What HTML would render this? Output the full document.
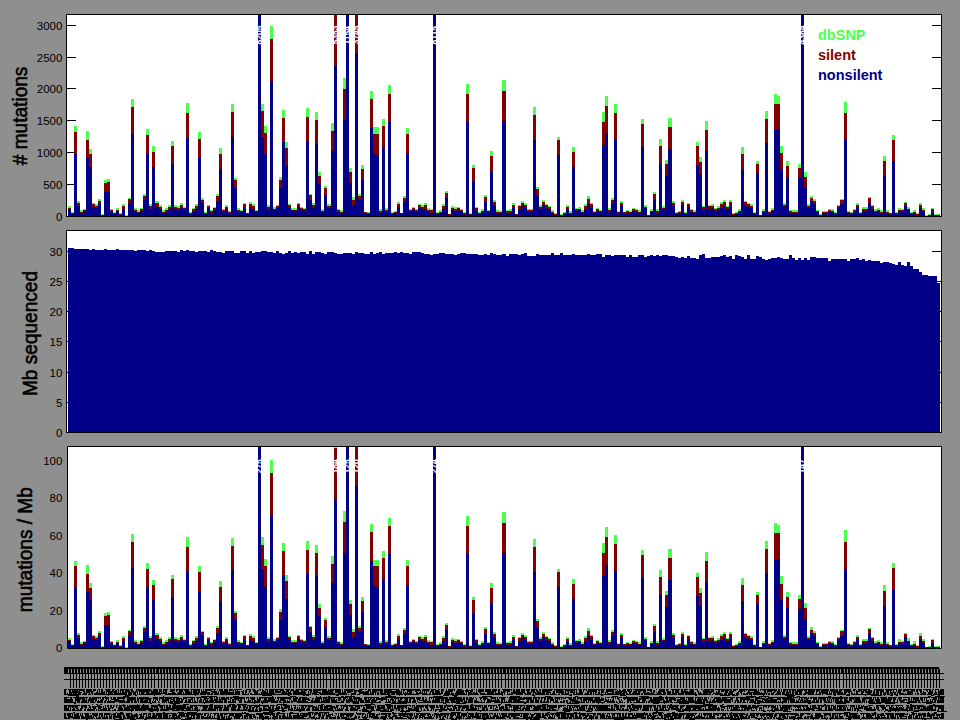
<!DOCTYPE html><html><head><meta charset="utf-8"><style>html,body{margin:0;padding:0;background:#8f8f8f;}svg{display:block;}text{font-family:"Liberation Sans",sans-serif;}</style></head><body>
<svg width="960" height="720" viewBox="0 0 960 720">
<rect x="0" y="0" width="960" height="720" fill="#8f8f8f"/>
<rect x="66" y="14" width="876" height="203" fill="#fff"/>
<rect x="66" y="230" width="876" height="203" fill="#fff"/>
<rect x="67" y="446" width="875" height="203" fill="#fff"/>
<g shape-rendering="crispEdges">
<rect x="66" y="216" width="10" height="1" fill="#000"/>
<rect x="932" y="216" width="10" height="1" fill="#000"/>
<rect x="66" y="184" width="10" height="1" fill="#000"/>
<rect x="932" y="184" width="10" height="1" fill="#000"/>
<rect x="66" y="152" width="10" height="1" fill="#000"/>
<rect x="932" y="152" width="10" height="1" fill="#000"/>
<rect x="66" y="120" width="10" height="1" fill="#000"/>
<rect x="932" y="120" width="10" height="1" fill="#000"/>
<rect x="66" y="88" width="10" height="1" fill="#000"/>
<rect x="932" y="88" width="10" height="1" fill="#000"/>
<rect x="66" y="57" width="10" height="1" fill="#000"/>
<rect x="932" y="57" width="10" height="1" fill="#000"/>
<rect x="66" y="25" width="10" height="1" fill="#000"/>
<rect x="932" y="25" width="10" height="1" fill="#000"/>
<rect x="66" y="432" width="10" height="1" fill="#000"/>
<rect x="932" y="432" width="10" height="1" fill="#000"/>
<rect x="66" y="402" width="10" height="1" fill="#000"/>
<rect x="932" y="402" width="10" height="1" fill="#000"/>
<rect x="66" y="372" width="10" height="1" fill="#000"/>
<rect x="932" y="372" width="10" height="1" fill="#000"/>
<rect x="66" y="341" width="10" height="1" fill="#000"/>
<rect x="932" y="341" width="10" height="1" fill="#000"/>
<rect x="66" y="311" width="10" height="1" fill="#000"/>
<rect x="932" y="311" width="10" height="1" fill="#000"/>
<rect x="66" y="281" width="10" height="1" fill="#000"/>
<rect x="932" y="281" width="10" height="1" fill="#000"/>
<rect x="66" y="251" width="10" height="1" fill="#000"/>
<rect x="932" y="251" width="10" height="1" fill="#000"/>
<rect x="68" y="209" width="3" height="7" fill="#000088"/>
<rect x="68" y="208" width="3" height="1" fill="#830000"/>
<rect x="68" y="206" width="3" height="2" fill="#4cff4c"/>
<rect x="68" y="248" width="3" height="184" fill="#000088"/>
<rect x="71" y="214" width="3" height="2" fill="#000088"/>
<rect x="71" y="213" width="3" height="1" fill="#830000"/>
<rect x="71" y="212" width="3" height="1" fill="#4cff4c"/>
<rect x="71" y="248" width="3" height="184" fill="#000088"/>
<rect x="74" y="153" width="3" height="63" fill="#000088"/>
<rect x="74" y="132" width="3" height="21" fill="#830000"/>
<rect x="74" y="126" width="3" height="6" fill="#4cff4c"/>
<rect x="74" y="249" width="3" height="183" fill="#000088"/>
<rect x="77" y="206" width="3" height="10" fill="#000088"/>
<rect x="77" y="203" width="3" height="3" fill="#830000"/>
<rect x="77" y="201" width="3" height="2" fill="#4cff4c"/>
<rect x="77" y="249" width="3" height="183" fill="#000088"/>
<rect x="80" y="213" width="3" height="3" fill="#000088"/>
<rect x="80" y="212" width="3" height="1" fill="#830000"/>
<rect x="80" y="210" width="3" height="2" fill="#4cff4c"/>
<rect x="80" y="249" width="3" height="183" fill="#000088"/>
<rect x="83" y="211" width="3" height="5" fill="#000088"/>
<rect x="83" y="210" width="3" height="1" fill="#830000"/>
<rect x="83" y="209" width="3" height="1" fill="#4cff4c"/>
<rect x="83" y="249" width="3" height="183" fill="#000088"/>
<rect x="86" y="158" width="3" height="58" fill="#000088"/>
<rect x="86" y="140" width="3" height="18" fill="#830000"/>
<rect x="86" y="131" width="3" height="9" fill="#4cff4c"/>
<rect x="86" y="249" width="3" height="183" fill="#000088"/>
<rect x="89" y="167" width="3" height="49" fill="#000088"/>
<rect x="89" y="154" width="3" height="13" fill="#830000"/>
<rect x="89" y="149" width="3" height="5" fill="#4cff4c"/>
<rect x="89" y="250" width="3" height="182" fill="#000088"/>
<rect x="92" y="207" width="3" height="9" fill="#000088"/>
<rect x="92" y="204" width="3" height="3" fill="#830000"/>
<rect x="92" y="203" width="3" height="1" fill="#4cff4c"/>
<rect x="92" y="249" width="3" height="183" fill="#000088"/>
<rect x="95" y="208" width="3" height="8" fill="#000088"/>
<rect x="95" y="206" width="3" height="2" fill="#830000"/>
<rect x="95" y="204" width="3" height="2" fill="#4cff4c"/>
<rect x="95" y="250" width="3" height="182" fill="#000088"/>
<rect x="98" y="204" width="3" height="12" fill="#000088"/>
<rect x="98" y="201" width="3" height="3" fill="#830000"/>
<rect x="98" y="199" width="3" height="2" fill="#4cff4c"/>
<rect x="98" y="250" width="3" height="182" fill="#000088"/>
<rect x="101" y="215" width="3" height="1" fill="#830000"/>
<rect x="101" y="214" width="3" height="1" fill="#4cff4c"/>
<rect x="101" y="250" width="3" height="182" fill="#000088"/>
<rect x="104" y="192" width="3" height="24" fill="#000088"/>
<rect x="104" y="183" width="3" height="9" fill="#830000"/>
<rect x="104" y="180" width="3" height="3" fill="#4cff4c"/>
<rect x="104" y="249" width="3" height="183" fill="#000088"/>
<rect x="107" y="192" width="3" height="24" fill="#000088"/>
<rect x="107" y="182" width="3" height="10" fill="#830000"/>
<rect x="107" y="179" width="3" height="3" fill="#4cff4c"/>
<rect x="107" y="250" width="3" height="182" fill="#000088"/>
<rect x="110" y="212" width="3" height="4" fill="#000088"/>
<rect x="110" y="210" width="3" height="2" fill="#830000"/>
<rect x="110" y="209" width="3" height="1" fill="#4cff4c"/>
<rect x="110" y="250" width="3" height="182" fill="#000088"/>
<rect x="113" y="214" width="3" height="2" fill="#000088"/>
<rect x="113" y="213" width="3" height="1" fill="#830000"/>
<rect x="113" y="212" width="3" height="1" fill="#4cff4c"/>
<rect x="113" y="250" width="3" height="182" fill="#000088"/>
<rect x="116" y="211" width="3" height="5" fill="#000088"/>
<rect x="116" y="210" width="3" height="1" fill="#830000"/>
<rect x="116" y="208" width="3" height="2" fill="#4cff4c"/>
<rect x="116" y="249" width="3" height="183" fill="#000088"/>
<rect x="119" y="215" width="3" height="1" fill="#000088"/>
<rect x="119" y="214" width="3" height="1" fill="#830000"/>
<rect x="119" y="213" width="3" height="1" fill="#4cff4c"/>
<rect x="119" y="250" width="3" height="182" fill="#000088"/>
<rect x="122" y="209" width="3" height="7" fill="#000088"/>
<rect x="122" y="206" width="3" height="3" fill="#830000"/>
<rect x="122" y="204" width="3" height="2" fill="#4cff4c"/>
<rect x="122" y="250" width="3" height="182" fill="#000088"/>
<rect x="125" y="215" width="3" height="1" fill="#4cff4c"/>
<rect x="125" y="250" width="3" height="182" fill="#000088"/>
<rect x="128" y="203" width="3" height="13" fill="#000088"/>
<rect x="128" y="199" width="3" height="4" fill="#830000"/>
<rect x="128" y="198" width="3" height="1" fill="#4cff4c"/>
<rect x="128" y="250" width="3" height="182" fill="#000088"/>
<rect x="131" y="134" width="3" height="82" fill="#000088"/>
<rect x="131" y="107" width="3" height="27" fill="#830000"/>
<rect x="131" y="99" width="3" height="8" fill="#4cff4c"/>
<rect x="131" y="250" width="3" height="182" fill="#000088"/>
<rect x="134" y="212" width="3" height="4" fill="#000088"/>
<rect x="134" y="210" width="3" height="2" fill="#830000"/>
<rect x="134" y="208" width="3" height="2" fill="#4cff4c"/>
<rect x="134" y="251" width="3" height="181" fill="#000088"/>
<rect x="137" y="213" width="3" height="3" fill="#000088"/>
<rect x="137" y="212" width="3" height="1" fill="#830000"/>
<rect x="137" y="210" width="3" height="2" fill="#4cff4c"/>
<rect x="137" y="250" width="3" height="182" fill="#000088"/>
<rect x="140" y="211" width="3" height="5" fill="#000088"/>
<rect x="140" y="209" width="3" height="2" fill="#830000"/>
<rect x="140" y="208" width="3" height="1" fill="#4cff4c"/>
<rect x="140" y="250" width="3" height="182" fill="#000088"/>
<rect x="143" y="200" width="3" height="16" fill="#000088"/>
<rect x="143" y="196" width="3" height="4" fill="#830000"/>
<rect x="143" y="194" width="3" height="2" fill="#4cff4c"/>
<rect x="143" y="250" width="3" height="182" fill="#000088"/>
<rect x="146" y="154" width="3" height="62" fill="#000088"/>
<rect x="146" y="135" width="3" height="19" fill="#830000"/>
<rect x="146" y="129" width="3" height="6" fill="#4cff4c"/>
<rect x="146" y="251" width="3" height="181" fill="#000088"/>
<rect x="149" y="209" width="3" height="7" fill="#000088"/>
<rect x="149" y="206" width="3" height="3" fill="#830000"/>
<rect x="149" y="204" width="3" height="2" fill="#4cff4c"/>
<rect x="149" y="250" width="3" height="182" fill="#000088"/>
<rect x="152" y="167" width="3" height="49" fill="#000088"/>
<rect x="152" y="152" width="3" height="15" fill="#830000"/>
<rect x="152" y="146" width="3" height="6" fill="#4cff4c"/>
<rect x="152" y="251" width="3" height="181" fill="#000088"/>
<rect x="155" y="207" width="4" height="9" fill="#000088"/>
<rect x="155" y="203" width="4" height="4" fill="#830000"/>
<rect x="155" y="201" width="4" height="2" fill="#4cff4c"/>
<rect x="155" y="252" width="4" height="180" fill="#000088"/>
<rect x="159" y="209" width="3" height="7" fill="#000088"/>
<rect x="159" y="207" width="3" height="2" fill="#830000"/>
<rect x="159" y="205" width="3" height="2" fill="#4cff4c"/>
<rect x="159" y="252" width="3" height="180" fill="#000088"/>
<rect x="162" y="213" width="3" height="3" fill="#000088"/>
<rect x="162" y="212" width="3" height="1" fill="#830000"/>
<rect x="162" y="210" width="3" height="2" fill="#4cff4c"/>
<rect x="162" y="252" width="3" height="180" fill="#000088"/>
<rect x="165" y="212" width="3" height="4" fill="#000088"/>
<rect x="165" y="210" width="3" height="2" fill="#830000"/>
<rect x="165" y="208" width="3" height="2" fill="#4cff4c"/>
<rect x="165" y="251" width="3" height="181" fill="#000088"/>
<rect x="168" y="210" width="3" height="6" fill="#000088"/>
<rect x="168" y="207" width="3" height="3" fill="#830000"/>
<rect x="168" y="205" width="3" height="2" fill="#4cff4c"/>
<rect x="168" y="251" width="3" height="181" fill="#000088"/>
<rect x="171" y="164" width="3" height="52" fill="#000088"/>
<rect x="171" y="146" width="3" height="18" fill="#830000"/>
<rect x="171" y="141" width="3" height="5" fill="#4cff4c"/>
<rect x="171" y="251" width="3" height="181" fill="#000088"/>
<rect x="174" y="209" width="3" height="7" fill="#000088"/>
<rect x="174" y="207" width="3" height="2" fill="#830000"/>
<rect x="174" y="205" width="3" height="2" fill="#4cff4c"/>
<rect x="174" y="251" width="3" height="181" fill="#000088"/>
<rect x="177" y="210" width="3" height="6" fill="#000088"/>
<rect x="177" y="208" width="3" height="2" fill="#830000"/>
<rect x="177" y="206" width="3" height="2" fill="#4cff4c"/>
<rect x="177" y="252" width="3" height="180" fill="#000088"/>
<rect x="180" y="208" width="3" height="8" fill="#000088"/>
<rect x="180" y="205" width="3" height="3" fill="#830000"/>
<rect x="180" y="203" width="3" height="2" fill="#4cff4c"/>
<rect x="180" y="250" width="3" height="182" fill="#000088"/>
<rect x="183" y="210" width="3" height="6" fill="#000088"/>
<rect x="183" y="208" width="3" height="2" fill="#830000"/>
<rect x="183" y="207" width="3" height="1" fill="#4cff4c"/>
<rect x="183" y="251" width="3" height="181" fill="#000088"/>
<rect x="186" y="138" width="3" height="78" fill="#000088"/>
<rect x="186" y="113" width="3" height="25" fill="#830000"/>
<rect x="186" y="103" width="3" height="10" fill="#4cff4c"/>
<rect x="186" y="250" width="3" height="182" fill="#000088"/>
<rect x="189" y="214" width="3" height="2" fill="#000088"/>
<rect x="189" y="213" width="3" height="1" fill="#830000"/>
<rect x="189" y="212" width="3" height="1" fill="#4cff4c"/>
<rect x="189" y="251" width="3" height="181" fill="#000088"/>
<rect x="192" y="211" width="3" height="5" fill="#000088"/>
<rect x="192" y="209" width="3" height="2" fill="#830000"/>
<rect x="192" y="208" width="3" height="1" fill="#4cff4c"/>
<rect x="192" y="251" width="3" height="181" fill="#000088"/>
<rect x="195" y="209" width="3" height="7" fill="#000088"/>
<rect x="195" y="206" width="3" height="3" fill="#830000"/>
<rect x="195" y="204" width="3" height="2" fill="#4cff4c"/>
<rect x="195" y="252" width="3" height="180" fill="#000088"/>
<rect x="198" y="158" width="3" height="58" fill="#000088"/>
<rect x="198" y="139" width="3" height="19" fill="#830000"/>
<rect x="198" y="132" width="3" height="7" fill="#4cff4c"/>
<rect x="198" y="251" width="3" height="181" fill="#000088"/>
<rect x="201" y="203" width="3" height="13" fill="#000088"/>
<rect x="201" y="200" width="3" height="3" fill="#830000"/>
<rect x="201" y="198" width="3" height="2" fill="#4cff4c"/>
<rect x="201" y="251" width="3" height="181" fill="#000088"/>
<rect x="204" y="214" width="3" height="2" fill="#000088"/>
<rect x="204" y="213" width="3" height="1" fill="#830000"/>
<rect x="204" y="212" width="3" height="1" fill="#4cff4c"/>
<rect x="204" y="251" width="3" height="181" fill="#000088"/>
<rect x="207" y="208" width="3" height="8" fill="#000088"/>
<rect x="207" y="206" width="3" height="2" fill="#830000"/>
<rect x="207" y="205" width="3" height="1" fill="#4cff4c"/>
<rect x="207" y="252" width="3" height="180" fill="#000088"/>
<rect x="210" y="213" width="3" height="3" fill="#000088"/>
<rect x="210" y="211" width="3" height="2" fill="#830000"/>
<rect x="210" y="210" width="3" height="1" fill="#4cff4c"/>
<rect x="210" y="250" width="3" height="182" fill="#000088"/>
<rect x="213" y="210" width="3" height="6" fill="#000088"/>
<rect x="213" y="208" width="3" height="2" fill="#830000"/>
<rect x="213" y="207" width="3" height="1" fill="#4cff4c"/>
<rect x="213" y="251" width="3" height="181" fill="#000088"/>
<rect x="216" y="201" width="3" height="15" fill="#000088"/>
<rect x="216" y="196" width="3" height="5" fill="#830000"/>
<rect x="216" y="194" width="3" height="2" fill="#4cff4c"/>
<rect x="216" y="252" width="3" height="180" fill="#000088"/>
<rect x="219" y="169" width="3" height="47" fill="#000088"/>
<rect x="219" y="154" width="3" height="15" fill="#830000"/>
<rect x="219" y="148" width="3" height="6" fill="#4cff4c"/>
<rect x="219" y="252" width="3" height="180" fill="#000088"/>
<rect x="222" y="212" width="3" height="4" fill="#000088"/>
<rect x="222" y="210" width="3" height="2" fill="#830000"/>
<rect x="222" y="209" width="3" height="1" fill="#4cff4c"/>
<rect x="222" y="253" width="3" height="179" fill="#000088"/>
<rect x="225" y="209" width="3" height="7" fill="#000088"/>
<rect x="225" y="207" width="3" height="2" fill="#830000"/>
<rect x="225" y="205" width="3" height="2" fill="#4cff4c"/>
<rect x="225" y="251" width="3" height="181" fill="#000088"/>
<rect x="228" y="214" width="3" height="2" fill="#000088"/>
<rect x="228" y="212" width="3" height="2" fill="#830000"/>
<rect x="228" y="211" width="3" height="1" fill="#4cff4c"/>
<rect x="228" y="251" width="3" height="181" fill="#000088"/>
<rect x="231" y="137" width="3" height="79" fill="#000088"/>
<rect x="231" y="112" width="3" height="25" fill="#830000"/>
<rect x="231" y="104" width="3" height="8" fill="#4cff4c"/>
<rect x="231" y="251" width="3" height="181" fill="#000088"/>
<rect x="234" y="188" width="3" height="28" fill="#000088"/>
<rect x="234" y="180" width="3" height="8" fill="#830000"/>
<rect x="234" y="178" width="3" height="2" fill="#4cff4c"/>
<rect x="234" y="253" width="3" height="179" fill="#000088"/>
<rect x="237" y="212" width="3" height="4" fill="#000088"/>
<rect x="237" y="210" width="3" height="2" fill="#830000"/>
<rect x="237" y="208" width="3" height="2" fill="#4cff4c"/>
<rect x="237" y="253" width="3" height="179" fill="#000088"/>
<rect x="240" y="212" width="3" height="4" fill="#000088"/>
<rect x="240" y="211" width="3" height="1" fill="#830000"/>
<rect x="240" y="210" width="3" height="1" fill="#4cff4c"/>
<rect x="240" y="251" width="3" height="181" fill="#000088"/>
<rect x="243" y="207" width="3" height="9" fill="#000088"/>
<rect x="243" y="204" width="3" height="3" fill="#830000"/>
<rect x="243" y="203" width="3" height="1" fill="#4cff4c"/>
<rect x="243" y="251" width="3" height="181" fill="#000088"/>
<rect x="246" y="214" width="3" height="2" fill="#000088"/>
<rect x="246" y="213" width="3" height="1" fill="#830000"/>
<rect x="246" y="253" width="3" height="179" fill="#000088"/>
<rect x="249" y="207" width="3" height="9" fill="#000088"/>
<rect x="249" y="204" width="3" height="3" fill="#830000"/>
<rect x="249" y="202" width="3" height="2" fill="#4cff4c"/>
<rect x="249" y="251" width="3" height="181" fill="#000088"/>
<rect x="252" y="209" width="3" height="7" fill="#000088"/>
<rect x="252" y="206" width="3" height="3" fill="#830000"/>
<rect x="252" y="204" width="3" height="2" fill="#4cff4c"/>
<rect x="252" y="253" width="3" height="179" fill="#000088"/>
<rect x="255" y="212" width="3" height="4" fill="#000088"/>
<rect x="255" y="211" width="3" height="1" fill="#830000"/>
<rect x="255" y="210" width="3" height="1" fill="#4cff4c"/>
<rect x="255" y="252" width="3" height="180" fill="#000088"/>
<rect x="258" y="15" width="3" height="201" fill="#000088"/>
<rect x="258" y="252" width="3" height="180" fill="#000088"/>
<rect x="261" y="137" width="3" height="79" fill="#000088"/>
<rect x="261" y="111" width="3" height="26" fill="#830000"/>
<rect x="261" y="104" width="3" height="7" fill="#4cff4c"/>
<rect x="261" y="251" width="3" height="181" fill="#000088"/>
<rect x="264" y="154" width="3" height="62" fill="#000088"/>
<rect x="264" y="133" width="3" height="21" fill="#830000"/>
<rect x="264" y="126" width="3" height="7" fill="#4cff4c"/>
<rect x="264" y="251" width="3" height="181" fill="#000088"/>
<rect x="267" y="210" width="3" height="6" fill="#000088"/>
<rect x="267" y="207" width="3" height="3" fill="#830000"/>
<rect x="267" y="205" width="3" height="2" fill="#4cff4c"/>
<rect x="267" y="252" width="3" height="180" fill="#000088"/>
<rect x="270" y="81" width="3" height="135" fill="#000088"/>
<rect x="270" y="39" width="3" height="42" fill="#830000"/>
<rect x="270" y="26" width="3" height="13" fill="#4cff4c"/>
<rect x="270" y="252" width="3" height="180" fill="#000088"/>
<rect x="273" y="210" width="3" height="6" fill="#000088"/>
<rect x="273" y="209" width="3" height="1" fill="#830000"/>
<rect x="273" y="207" width="3" height="2" fill="#4cff4c"/>
<rect x="273" y="253" width="3" height="179" fill="#000088"/>
<rect x="276" y="208" width="3" height="8" fill="#000088"/>
<rect x="276" y="206" width="3" height="2" fill="#830000"/>
<rect x="276" y="205" width="3" height="1" fill="#4cff4c"/>
<rect x="276" y="251" width="3" height="181" fill="#000088"/>
<rect x="279" y="188" width="3" height="28" fill="#000088"/>
<rect x="279" y="180" width="3" height="8" fill="#830000"/>
<rect x="279" y="177" width="3" height="3" fill="#4cff4c"/>
<rect x="279" y="253" width="3" height="179" fill="#000088"/>
<rect x="282" y="142" width="3" height="74" fill="#000088"/>
<rect x="282" y="118" width="3" height="24" fill="#830000"/>
<rect x="282" y="110" width="3" height="8" fill="#4cff4c"/>
<rect x="282" y="254" width="3" height="178" fill="#000088"/>
<rect x="285" y="166" width="3" height="50" fill="#000088"/>
<rect x="285" y="148" width="3" height="18" fill="#830000"/>
<rect x="285" y="142" width="3" height="6" fill="#4cff4c"/>
<rect x="285" y="253" width="3" height="179" fill="#000088"/>
<rect x="288" y="208" width="3" height="8" fill="#000088"/>
<rect x="288" y="205" width="3" height="3" fill="#830000"/>
<rect x="288" y="204" width="3" height="1" fill="#4cff4c"/>
<rect x="288" y="251" width="3" height="181" fill="#000088"/>
<rect x="291" y="210" width="3" height="6" fill="#000088"/>
<rect x="291" y="208" width="3" height="2" fill="#4cff4c"/>
<rect x="291" y="253" width="3" height="179" fill="#000088"/>
<rect x="294" y="211" width="3" height="5" fill="#000088"/>
<rect x="294" y="210" width="3" height="1" fill="#830000"/>
<rect x="294" y="208" width="3" height="2" fill="#4cff4c"/>
<rect x="294" y="252" width="3" height="180" fill="#000088"/>
<rect x="297" y="207" width="3" height="9" fill="#000088"/>
<rect x="297" y="204" width="3" height="3" fill="#830000"/>
<rect x="297" y="203" width="3" height="1" fill="#4cff4c"/>
<rect x="297" y="253" width="3" height="179" fill="#000088"/>
<rect x="300" y="210" width="3" height="6" fill="#000088"/>
<rect x="300" y="208" width="3" height="2" fill="#830000"/>
<rect x="300" y="207" width="3" height="1" fill="#4cff4c"/>
<rect x="300" y="252" width="3" height="180" fill="#000088"/>
<rect x="303" y="211" width="3" height="5" fill="#000088"/>
<rect x="303" y="209" width="3" height="2" fill="#830000"/>
<rect x="303" y="208" width="3" height="1" fill="#4cff4c"/>
<rect x="303" y="252" width="3" height="180" fill="#000088"/>
<rect x="306" y="141" width="3" height="75" fill="#000088"/>
<rect x="306" y="117" width="3" height="24" fill="#830000"/>
<rect x="306" y="108" width="3" height="9" fill="#4cff4c"/>
<rect x="306" y="254" width="3" height="178" fill="#000088"/>
<rect x="309" y="200" width="3" height="16" fill="#000088"/>
<rect x="309" y="195" width="3" height="5" fill="#830000"/>
<rect x="309" y="194" width="3" height="1" fill="#4cff4c"/>
<rect x="309" y="251" width="3" height="181" fill="#000088"/>
<rect x="312" y="208" width="3" height="8" fill="#000088"/>
<rect x="312" y="205" width="3" height="3" fill="#830000"/>
<rect x="312" y="203" width="3" height="2" fill="#4cff4c"/>
<rect x="312" y="254" width="3" height="178" fill="#000088"/>
<rect x="315" y="144" width="3" height="72" fill="#000088"/>
<rect x="315" y="120" width="3" height="24" fill="#830000"/>
<rect x="315" y="112" width="3" height="8" fill="#4cff4c"/>
<rect x="315" y="252" width="3" height="180" fill="#000088"/>
<rect x="318" y="184" width="3" height="32" fill="#000088"/>
<rect x="318" y="176" width="3" height="8" fill="#830000"/>
<rect x="318" y="172" width="3" height="4" fill="#4cff4c"/>
<rect x="318" y="252" width="3" height="180" fill="#000088"/>
<rect x="321" y="212" width="3" height="4" fill="#000088"/>
<rect x="321" y="211" width="3" height="1" fill="#830000"/>
<rect x="321" y="209" width="3" height="2" fill="#4cff4c"/>
<rect x="321" y="253" width="3" height="179" fill="#000088"/>
<rect x="324" y="195" width="3" height="21" fill="#000088"/>
<rect x="324" y="188" width="3" height="7" fill="#830000"/>
<rect x="324" y="186" width="3" height="2" fill="#4cff4c"/>
<rect x="324" y="254" width="3" height="178" fill="#000088"/>
<rect x="327" y="208" width="4" height="8" fill="#000088"/>
<rect x="327" y="206" width="4" height="2" fill="#830000"/>
<rect x="327" y="204" width="4" height="2" fill="#4cff4c"/>
<rect x="327" y="252" width="4" height="180" fill="#000088"/>
<rect x="331" y="151" width="3" height="65" fill="#000088"/>
<rect x="331" y="131" width="3" height="20" fill="#830000"/>
<rect x="331" y="123" width="3" height="8" fill="#4cff4c"/>
<rect x="331" y="252" width="3" height="180" fill="#000088"/>
<rect x="334" y="66" width="3" height="150" fill="#000088"/>
<rect x="334" y="15" width="3" height="51" fill="#830000"/>
<rect x="334" y="253" width="3" height="179" fill="#000088"/>
<rect x="337" y="212" width="3" height="4" fill="#000088"/>
<rect x="337" y="210" width="3" height="2" fill="#830000"/>
<rect x="337" y="209" width="3" height="1" fill="#4cff4c"/>
<rect x="337" y="254" width="3" height="178" fill="#000088"/>
<rect x="340" y="213" width="3" height="3" fill="#000088"/>
<rect x="340" y="212" width="3" height="1" fill="#830000"/>
<rect x="340" y="210" width="3" height="2" fill="#4cff4c"/>
<rect x="340" y="254" width="3" height="178" fill="#000088"/>
<rect x="343" y="120" width="3" height="96" fill="#000088"/>
<rect x="343" y="89" width="3" height="31" fill="#830000"/>
<rect x="343" y="78" width="3" height="11" fill="#4cff4c"/>
<rect x="343" y="253" width="3" height="179" fill="#000088"/>
<rect x="346" y="15" width="3" height="201" fill="#000088"/>
<rect x="346" y="253" width="3" height="179" fill="#000088"/>
<rect x="349" y="183" width="3" height="33" fill="#000088"/>
<rect x="349" y="172" width="3" height="11" fill="#830000"/>
<rect x="349" y="168" width="3" height="4" fill="#4cff4c"/>
<rect x="349" y="253" width="3" height="179" fill="#000088"/>
<rect x="352" y="205" width="3" height="11" fill="#000088"/>
<rect x="352" y="200" width="3" height="5" fill="#830000"/>
<rect x="352" y="197" width="3" height="3" fill="#4cff4c"/>
<rect x="352" y="254" width="3" height="178" fill="#000088"/>
<rect x="355" y="53" width="3" height="163" fill="#000088"/>
<rect x="355" y="15" width="3" height="38" fill="#830000"/>
<rect x="355" y="252" width="3" height="180" fill="#000088"/>
<rect x="358" y="200" width="3" height="16" fill="#000088"/>
<rect x="358" y="196" width="3" height="4" fill="#830000"/>
<rect x="358" y="194" width="3" height="2" fill="#4cff4c"/>
<rect x="358" y="253" width="3" height="179" fill="#000088"/>
<rect x="361" y="180" width="3" height="36" fill="#000088"/>
<rect x="361" y="169" width="3" height="11" fill="#830000"/>
<rect x="361" y="165" width="3" height="4" fill="#4cff4c"/>
<rect x="361" y="253" width="3" height="179" fill="#000088"/>
<rect x="364" y="214" width="3" height="2" fill="#000088"/>
<rect x="364" y="212" width="3" height="2" fill="#830000"/>
<rect x="364" y="254" width="3" height="178" fill="#000088"/>
<rect x="367" y="214" width="3" height="2" fill="#000088"/>
<rect x="367" y="213" width="3" height="1" fill="#830000"/>
<rect x="367" y="212" width="3" height="1" fill="#4cff4c"/>
<rect x="367" y="254" width="3" height="178" fill="#000088"/>
<rect x="370" y="128" width="3" height="88" fill="#000088"/>
<rect x="370" y="99" width="3" height="29" fill="#830000"/>
<rect x="370" y="91" width="3" height="8" fill="#4cff4c"/>
<rect x="370" y="252" width="3" height="180" fill="#000088"/>
<rect x="373" y="154" width="3" height="62" fill="#000088"/>
<rect x="373" y="134" width="3" height="20" fill="#830000"/>
<rect x="373" y="127" width="3" height="7" fill="#4cff4c"/>
<rect x="373" y="254" width="3" height="178" fill="#000088"/>
<rect x="376" y="155" width="3" height="61" fill="#000088"/>
<rect x="376" y="134" width="3" height="21" fill="#830000"/>
<rect x="376" y="127" width="3" height="7" fill="#4cff4c"/>
<rect x="376" y="253" width="3" height="179" fill="#000088"/>
<rect x="379" y="213" width="3" height="3" fill="#000088"/>
<rect x="379" y="211" width="3" height="2" fill="#830000"/>
<rect x="379" y="209" width="3" height="2" fill="#4cff4c"/>
<rect x="379" y="252" width="3" height="180" fill="#000088"/>
<rect x="382" y="147" width="3" height="69" fill="#000088"/>
<rect x="382" y="126" width="3" height="21" fill="#830000"/>
<rect x="382" y="119" width="3" height="7" fill="#4cff4c"/>
<rect x="382" y="254" width="3" height="178" fill="#000088"/>
<rect x="385" y="212" width="3" height="4" fill="#000088"/>
<rect x="385" y="210" width="3" height="2" fill="#830000"/>
<rect x="385" y="208" width="3" height="2" fill="#4cff4c"/>
<rect x="385" y="253" width="3" height="179" fill="#000088"/>
<rect x="388" y="122" width="3" height="94" fill="#000088"/>
<rect x="388" y="94" width="3" height="28" fill="#830000"/>
<rect x="388" y="85" width="3" height="9" fill="#4cff4c"/>
<rect x="388" y="253" width="3" height="179" fill="#000088"/>
<rect x="391" y="214" width="3" height="2" fill="#000088"/>
<rect x="391" y="213" width="3" height="1" fill="#830000"/>
<rect x="391" y="212" width="3" height="1" fill="#4cff4c"/>
<rect x="391" y="253" width="3" height="179" fill="#000088"/>
<rect x="394" y="213" width="3" height="3" fill="#000088"/>
<rect x="394" y="212" width="3" height="1" fill="#830000"/>
<rect x="394" y="211" width="3" height="1" fill="#4cff4c"/>
<rect x="394" y="252" width="3" height="180" fill="#000088"/>
<rect x="397" y="207" width="3" height="9" fill="#000088"/>
<rect x="397" y="204" width="3" height="3" fill="#830000"/>
<rect x="397" y="202" width="3" height="2" fill="#4cff4c"/>
<rect x="397" y="253" width="3" height="179" fill="#000088"/>
<rect x="400" y="214" width="3" height="2" fill="#000088"/>
<rect x="400" y="213" width="3" height="1" fill="#830000"/>
<rect x="400" y="252" width="3" height="180" fill="#000088"/>
<rect x="403" y="202" width="3" height="14" fill="#000088"/>
<rect x="403" y="198" width="3" height="4" fill="#830000"/>
<rect x="403" y="196" width="3" height="2" fill="#4cff4c"/>
<rect x="403" y="253" width="3" height="179" fill="#000088"/>
<rect x="406" y="154" width="3" height="62" fill="#000088"/>
<rect x="406" y="134" width="3" height="20" fill="#830000"/>
<rect x="406" y="128" width="3" height="6" fill="#4cff4c"/>
<rect x="406" y="253" width="3" height="179" fill="#000088"/>
<rect x="409" y="212" width="3" height="4" fill="#000088"/>
<rect x="409" y="210" width="3" height="2" fill="#830000"/>
<rect x="409" y="209" width="3" height="1" fill="#4cff4c"/>
<rect x="409" y="254" width="3" height="178" fill="#000088"/>
<rect x="412" y="210" width="3" height="6" fill="#000088"/>
<rect x="412" y="208" width="3" height="2" fill="#830000"/>
<rect x="412" y="207" width="3" height="1" fill="#4cff4c"/>
<rect x="412" y="252" width="3" height="180" fill="#000088"/>
<rect x="415" y="212" width="3" height="4" fill="#000088"/>
<rect x="415" y="210" width="3" height="2" fill="#830000"/>
<rect x="415" y="209" width="3" height="1" fill="#4cff4c"/>
<rect x="415" y="252" width="3" height="180" fill="#000088"/>
<rect x="418" y="208" width="3" height="8" fill="#000088"/>
<rect x="418" y="205" width="3" height="3" fill="#830000"/>
<rect x="418" y="204" width="3" height="1" fill="#4cff4c"/>
<rect x="418" y="252" width="3" height="180" fill="#000088"/>
<rect x="421" y="209" width="3" height="7" fill="#000088"/>
<rect x="421" y="207" width="3" height="2" fill="#830000"/>
<rect x="421" y="205" width="3" height="2" fill="#4cff4c"/>
<rect x="421" y="253" width="3" height="179" fill="#000088"/>
<rect x="424" y="209" width="3" height="7" fill="#000088"/>
<rect x="424" y="205" width="3" height="4" fill="#830000"/>
<rect x="424" y="203" width="3" height="2" fill="#4cff4c"/>
<rect x="424" y="254" width="3" height="178" fill="#000088"/>
<rect x="427" y="211" width="3" height="5" fill="#000088"/>
<rect x="427" y="210" width="3" height="1" fill="#830000"/>
<rect x="427" y="208" width="3" height="2" fill="#4cff4c"/>
<rect x="427" y="254" width="3" height="178" fill="#000088"/>
<rect x="430" y="213" width="3" height="3" fill="#000088"/>
<rect x="430" y="210" width="3" height="3" fill="#830000"/>
<rect x="430" y="209" width="3" height="1" fill="#4cff4c"/>
<rect x="430" y="255" width="3" height="177" fill="#000088"/>
<rect x="433" y="15" width="3" height="201" fill="#000088"/>
<rect x="433" y="254" width="3" height="178" fill="#000088"/>
<rect x="436" y="214" width="3" height="2" fill="#000088"/>
<rect x="436" y="213" width="3" height="1" fill="#830000"/>
<rect x="436" y="212" width="3" height="1" fill="#4cff4c"/>
<rect x="436" y="254" width="3" height="178" fill="#000088"/>
<rect x="439" y="213" width="3" height="3" fill="#000088"/>
<rect x="439" y="212" width="3" height="1" fill="#830000"/>
<rect x="439" y="210" width="3" height="2" fill="#4cff4c"/>
<rect x="439" y="253" width="3" height="179" fill="#000088"/>
<rect x="442" y="209" width="3" height="7" fill="#000088"/>
<rect x="442" y="206" width="3" height="3" fill="#830000"/>
<rect x="442" y="204" width="3" height="2" fill="#4cff4c"/>
<rect x="442" y="253" width="3" height="179" fill="#000088"/>
<rect x="445" y="198" width="3" height="18" fill="#000088"/>
<rect x="445" y="193" width="3" height="5" fill="#830000"/>
<rect x="445" y="191" width="3" height="2" fill="#4cff4c"/>
<rect x="445" y="254" width="3" height="178" fill="#000088"/>
<rect x="448" y="215" width="3" height="1" fill="#000088"/>
<rect x="448" y="214" width="3" height="1" fill="#830000"/>
<rect x="448" y="254" width="3" height="178" fill="#000088"/>
<rect x="451" y="210" width="3" height="6" fill="#000088"/>
<rect x="451" y="208" width="3" height="2" fill="#830000"/>
<rect x="451" y="206" width="3" height="2" fill="#4cff4c"/>
<rect x="451" y="254" width="3" height="178" fill="#000088"/>
<rect x="454" y="211" width="3" height="5" fill="#000088"/>
<rect x="454" y="209" width="3" height="2" fill="#830000"/>
<rect x="454" y="207" width="3" height="2" fill="#4cff4c"/>
<rect x="454" y="255" width="3" height="177" fill="#000088"/>
<rect x="457" y="210" width="3" height="6" fill="#000088"/>
<rect x="457" y="208" width="3" height="2" fill="#830000"/>
<rect x="457" y="207" width="3" height="1" fill="#4cff4c"/>
<rect x="457" y="254" width="3" height="178" fill="#000088"/>
<rect x="460" y="211" width="3" height="5" fill="#000088"/>
<rect x="460" y="210" width="3" height="1" fill="#830000"/>
<rect x="460" y="209" width="3" height="1" fill="#4cff4c"/>
<rect x="460" y="253" width="3" height="179" fill="#000088"/>
<rect x="463" y="215" width="3" height="1" fill="#000088"/>
<rect x="463" y="213" width="3" height="2" fill="#830000"/>
<rect x="463" y="212" width="3" height="1" fill="#4cff4c"/>
<rect x="463" y="253" width="3" height="179" fill="#000088"/>
<rect x="466" y="122" width="3" height="94" fill="#000088"/>
<rect x="466" y="94" width="3" height="28" fill="#830000"/>
<rect x="466" y="84" width="3" height="10" fill="#4cff4c"/>
<rect x="466" y="254" width="3" height="178" fill="#000088"/>
<rect x="469" y="215" width="3" height="1" fill="#000088"/>
<rect x="469" y="214" width="3" height="1" fill="#830000"/>
<rect x="469" y="213" width="3" height="1" fill="#4cff4c"/>
<rect x="469" y="254" width="3" height="178" fill="#000088"/>
<rect x="472" y="181" width="3" height="35" fill="#000088"/>
<rect x="472" y="168" width="3" height="13" fill="#830000"/>
<rect x="472" y="165" width="3" height="3" fill="#4cff4c"/>
<rect x="472" y="254" width="3" height="178" fill="#000088"/>
<rect x="475" y="211" width="3" height="5" fill="#000088"/>
<rect x="475" y="208" width="3" height="3" fill="#830000"/>
<rect x="475" y="207" width="3" height="1" fill="#4cff4c"/>
<rect x="475" y="254" width="3" height="178" fill="#000088"/>
<rect x="478" y="214" width="3" height="2" fill="#000088"/>
<rect x="478" y="213" width="3" height="1" fill="#830000"/>
<rect x="478" y="212" width="3" height="1" fill="#4cff4c"/>
<rect x="478" y="255" width="3" height="177" fill="#000088"/>
<rect x="481" y="212" width="3" height="4" fill="#000088"/>
<rect x="481" y="211" width="3" height="1" fill="#830000"/>
<rect x="481" y="209" width="3" height="2" fill="#4cff4c"/>
<rect x="481" y="255" width="3" height="177" fill="#000088"/>
<rect x="484" y="202" width="3" height="14" fill="#000088"/>
<rect x="484" y="197" width="3" height="5" fill="#830000"/>
<rect x="484" y="195" width="3" height="2" fill="#4cff4c"/>
<rect x="484" y="254" width="3" height="178" fill="#000088"/>
<rect x="487" y="212" width="3" height="4" fill="#000088"/>
<rect x="487" y="211" width="3" height="1" fill="#830000"/>
<rect x="487" y="210" width="3" height="1" fill="#4cff4c"/>
<rect x="487" y="255" width="3" height="177" fill="#000088"/>
<rect x="490" y="171" width="3" height="45" fill="#000088"/>
<rect x="490" y="156" width="3" height="15" fill="#830000"/>
<rect x="490" y="151" width="3" height="5" fill="#4cff4c"/>
<rect x="490" y="253" width="3" height="179" fill="#000088"/>
<rect x="493" y="206" width="3" height="10" fill="#000088"/>
<rect x="493" y="202" width="3" height="4" fill="#830000"/>
<rect x="493" y="200" width="3" height="2" fill="#4cff4c"/>
<rect x="493" y="254" width="3" height="178" fill="#000088"/>
<rect x="496" y="213" width="3" height="3" fill="#000088"/>
<rect x="496" y="212" width="3" height="1" fill="#830000"/>
<rect x="496" y="210" width="3" height="2" fill="#4cff4c"/>
<rect x="496" y="255" width="3" height="177" fill="#000088"/>
<rect x="499" y="213" width="3" height="3" fill="#000088"/>
<rect x="499" y="212" width="3" height="1" fill="#830000"/>
<rect x="499" y="211" width="3" height="1" fill="#4cff4c"/>
<rect x="499" y="255" width="3" height="177" fill="#000088"/>
<rect x="502" y="121" width="4" height="95" fill="#000088"/>
<rect x="502" y="91" width="4" height="30" fill="#830000"/>
<rect x="502" y="80" width="4" height="11" fill="#4cff4c"/>
<rect x="502" y="254" width="4" height="178" fill="#000088"/>
<rect x="506" y="213" width="3" height="3" fill="#000088"/>
<rect x="506" y="211" width="3" height="2" fill="#830000"/>
<rect x="506" y="210" width="3" height="1" fill="#4cff4c"/>
<rect x="506" y="256" width="3" height="176" fill="#000088"/>
<rect x="509" y="213" width="3" height="3" fill="#000088"/>
<rect x="509" y="211" width="3" height="2" fill="#830000"/>
<rect x="509" y="209" width="3" height="2" fill="#4cff4c"/>
<rect x="509" y="254" width="3" height="178" fill="#000088"/>
<rect x="512" y="208" width="3" height="8" fill="#000088"/>
<rect x="512" y="205" width="3" height="3" fill="#830000"/>
<rect x="512" y="203" width="3" height="2" fill="#4cff4c"/>
<rect x="512" y="254" width="3" height="178" fill="#000088"/>
<rect x="515" y="215" width="3" height="1" fill="#000088"/>
<rect x="515" y="214" width="3" height="1" fill="#830000"/>
<rect x="515" y="254" width="3" height="178" fill="#000088"/>
<rect x="518" y="209" width="3" height="7" fill="#000088"/>
<rect x="518" y="206" width="3" height="3" fill="#830000"/>
<rect x="518" y="205" width="3" height="1" fill="#4cff4c"/>
<rect x="518" y="255" width="3" height="177" fill="#000088"/>
<rect x="521" y="206" width="3" height="10" fill="#000088"/>
<rect x="521" y="203" width="3" height="3" fill="#830000"/>
<rect x="521" y="201" width="3" height="2" fill="#4cff4c"/>
<rect x="521" y="254" width="3" height="178" fill="#000088"/>
<rect x="524" y="207" width="3" height="9" fill="#000088"/>
<rect x="524" y="205" width="3" height="2" fill="#830000"/>
<rect x="524" y="203" width="3" height="2" fill="#4cff4c"/>
<rect x="524" y="253" width="3" height="179" fill="#000088"/>
<rect x="527" y="212" width="3" height="4" fill="#000088"/>
<rect x="527" y="210" width="3" height="2" fill="#830000"/>
<rect x="527" y="209" width="3" height="1" fill="#4cff4c"/>
<rect x="527" y="256" width="3" height="176" fill="#000088"/>
<rect x="530" y="212" width="3" height="4" fill="#000088"/>
<rect x="530" y="210" width="3" height="2" fill="#830000"/>
<rect x="530" y="209" width="3" height="1" fill="#4cff4c"/>
<rect x="530" y="256" width="3" height="176" fill="#000088"/>
<rect x="533" y="140" width="3" height="76" fill="#000088"/>
<rect x="533" y="115" width="3" height="25" fill="#830000"/>
<rect x="533" y="107" width="3" height="8" fill="#4cff4c"/>
<rect x="533" y="256" width="3" height="176" fill="#000088"/>
<rect x="536" y="196" width="3" height="20" fill="#000088"/>
<rect x="536" y="189" width="3" height="7" fill="#830000"/>
<rect x="536" y="187" width="3" height="2" fill="#4cff4c"/>
<rect x="536" y="254" width="3" height="178" fill="#000088"/>
<rect x="539" y="209" width="3" height="7" fill="#000088"/>
<rect x="539" y="207" width="3" height="2" fill="#830000"/>
<rect x="539" y="205" width="3" height="2" fill="#4cff4c"/>
<rect x="539" y="255" width="3" height="177" fill="#000088"/>
<rect x="542" y="205" width="3" height="11" fill="#000088"/>
<rect x="542" y="202" width="3" height="3" fill="#830000"/>
<rect x="542" y="200" width="3" height="2" fill="#4cff4c"/>
<rect x="542" y="255" width="3" height="177" fill="#000088"/>
<rect x="545" y="208" width="3" height="8" fill="#000088"/>
<rect x="545" y="205" width="3" height="3" fill="#830000"/>
<rect x="545" y="204" width="3" height="1" fill="#4cff4c"/>
<rect x="545" y="255" width="3" height="177" fill="#000088"/>
<rect x="548" y="209" width="3" height="7" fill="#000088"/>
<rect x="548" y="207" width="3" height="2" fill="#830000"/>
<rect x="548" y="206" width="3" height="1" fill="#4cff4c"/>
<rect x="548" y="255" width="3" height="177" fill="#000088"/>
<rect x="551" y="213" width="3" height="3" fill="#000088"/>
<rect x="551" y="212" width="3" height="1" fill="#830000"/>
<rect x="551" y="210" width="3" height="2" fill="#4cff4c"/>
<rect x="551" y="253" width="3" height="179" fill="#000088"/>
<rect x="554" y="215" width="3" height="1" fill="#000088"/>
<rect x="554" y="214" width="3" height="1" fill="#830000"/>
<rect x="554" y="213" width="3" height="1" fill="#4cff4c"/>
<rect x="554" y="255" width="3" height="177" fill="#000088"/>
<rect x="557" y="155" width="3" height="61" fill="#000088"/>
<rect x="557" y="140" width="3" height="15" fill="#830000"/>
<rect x="557" y="137" width="3" height="3" fill="#4cff4c"/>
<rect x="557" y="255" width="3" height="177" fill="#000088"/>
<rect x="560" y="215" width="3" height="1" fill="#830000"/>
<rect x="560" y="214" width="3" height="1" fill="#4cff4c"/>
<rect x="560" y="253" width="3" height="179" fill="#000088"/>
<rect x="563" y="214" width="3" height="2" fill="#000088"/>
<rect x="563" y="213" width="3" height="1" fill="#830000"/>
<rect x="563" y="212" width="3" height="1" fill="#4cff4c"/>
<rect x="563" y="255" width="3" height="177" fill="#000088"/>
<rect x="566" y="209" width="3" height="7" fill="#000088"/>
<rect x="566" y="207" width="3" height="2" fill="#830000"/>
<rect x="566" y="205" width="3" height="2" fill="#4cff4c"/>
<rect x="566" y="255" width="3" height="177" fill="#000088"/>
<rect x="569" y="214" width="3" height="2" fill="#000088"/>
<rect x="569" y="213" width="3" height="1" fill="#830000"/>
<rect x="569" y="211" width="3" height="2" fill="#4cff4c"/>
<rect x="569" y="255" width="3" height="177" fill="#000088"/>
<rect x="572" y="167" width="3" height="49" fill="#000088"/>
<rect x="572" y="152" width="3" height="15" fill="#830000"/>
<rect x="572" y="147" width="3" height="5" fill="#4cff4c"/>
<rect x="572" y="254" width="3" height="178" fill="#000088"/>
<rect x="575" y="211" width="3" height="5" fill="#000088"/>
<rect x="575" y="209" width="3" height="2" fill="#830000"/>
<rect x="575" y="208" width="3" height="1" fill="#4cff4c"/>
<rect x="575" y="255" width="3" height="177" fill="#000088"/>
<rect x="578" y="210" width="3" height="6" fill="#000088"/>
<rect x="578" y="209" width="3" height="1" fill="#830000"/>
<rect x="578" y="207" width="3" height="2" fill="#4cff4c"/>
<rect x="578" y="255" width="3" height="177" fill="#000088"/>
<rect x="581" y="213" width="3" height="3" fill="#000088"/>
<rect x="581" y="212" width="3" height="1" fill="#830000"/>
<rect x="581" y="210" width="3" height="2" fill="#4cff4c"/>
<rect x="581" y="255" width="3" height="177" fill="#000088"/>
<rect x="584" y="209" width="3" height="7" fill="#000088"/>
<rect x="584" y="206" width="3" height="3" fill="#830000"/>
<rect x="584" y="204" width="3" height="2" fill="#4cff4c"/>
<rect x="584" y="255" width="3" height="177" fill="#000088"/>
<rect x="587" y="204" width="3" height="12" fill="#000088"/>
<rect x="587" y="199" width="3" height="5" fill="#830000"/>
<rect x="587" y="196" width="3" height="3" fill="#4cff4c"/>
<rect x="587" y="254" width="3" height="178" fill="#000088"/>
<rect x="590" y="208" width="3" height="8" fill="#000088"/>
<rect x="590" y="204" width="3" height="4" fill="#830000"/>
<rect x="590" y="203" width="3" height="1" fill="#4cff4c"/>
<rect x="590" y="255" width="3" height="177" fill="#000088"/>
<rect x="593" y="213" width="3" height="3" fill="#000088"/>
<rect x="593" y="212" width="3" height="1" fill="#830000"/>
<rect x="593" y="211" width="3" height="1" fill="#4cff4c"/>
<rect x="593" y="255" width="3" height="177" fill="#000088"/>
<rect x="596" y="211" width="3" height="5" fill="#000088"/>
<rect x="596" y="209" width="3" height="2" fill="#830000"/>
<rect x="596" y="208" width="3" height="1" fill="#4cff4c"/>
<rect x="596" y="254" width="3" height="178" fill="#000088"/>
<rect x="599" y="212" width="3" height="4" fill="#000088"/>
<rect x="599" y="211" width="3" height="1" fill="#830000"/>
<rect x="599" y="210" width="3" height="1" fill="#4cff4c"/>
<rect x="599" y="254" width="3" height="178" fill="#000088"/>
<rect x="602" y="145" width="3" height="71" fill="#000088"/>
<rect x="602" y="122" width="3" height="23" fill="#830000"/>
<rect x="602" y="112" width="3" height="10" fill="#4cff4c"/>
<rect x="602" y="257" width="3" height="175" fill="#000088"/>
<rect x="605" y="134" width="3" height="82" fill="#000088"/>
<rect x="605" y="106" width="3" height="28" fill="#830000"/>
<rect x="605" y="96" width="3" height="10" fill="#4cff4c"/>
<rect x="605" y="255" width="3" height="177" fill="#000088"/>
<rect x="608" y="212" width="3" height="4" fill="#000088"/>
<rect x="608" y="210" width="3" height="2" fill="#830000"/>
<rect x="608" y="208" width="3" height="2" fill="#4cff4c"/>
<rect x="608" y="255" width="3" height="177" fill="#000088"/>
<rect x="611" y="204" width="3" height="12" fill="#000088"/>
<rect x="611" y="200" width="3" height="4" fill="#830000"/>
<rect x="611" y="198" width="3" height="2" fill="#4cff4c"/>
<rect x="611" y="256" width="3" height="176" fill="#000088"/>
<rect x="614" y="140" width="3" height="76" fill="#000088"/>
<rect x="614" y="113" width="3" height="27" fill="#830000"/>
<rect x="614" y="104" width="3" height="9" fill="#4cff4c"/>
<rect x="614" y="255" width="3" height="177" fill="#000088"/>
<rect x="617" y="214" width="3" height="2" fill="#000088"/>
<rect x="617" y="212" width="3" height="2" fill="#830000"/>
<rect x="617" y="211" width="3" height="1" fill="#4cff4c"/>
<rect x="617" y="255" width="3" height="177" fill="#000088"/>
<rect x="620" y="206" width="3" height="10" fill="#000088"/>
<rect x="620" y="203" width="3" height="3" fill="#830000"/>
<rect x="620" y="201" width="3" height="2" fill="#4cff4c"/>
<rect x="620" y="255" width="3" height="177" fill="#000088"/>
<rect x="623" y="214" width="3" height="2" fill="#000088"/>
<rect x="623" y="212" width="3" height="2" fill="#830000"/>
<rect x="623" y="255" width="3" height="177" fill="#000088"/>
<rect x="626" y="213" width="3" height="3" fill="#000088"/>
<rect x="626" y="211" width="3" height="2" fill="#830000"/>
<rect x="626" y="210" width="3" height="1" fill="#4cff4c"/>
<rect x="626" y="257" width="3" height="175" fill="#000088"/>
<rect x="629" y="213" width="3" height="3" fill="#000088"/>
<rect x="629" y="212" width="3" height="1" fill="#830000"/>
<rect x="629" y="211" width="3" height="1" fill="#4cff4c"/>
<rect x="629" y="255" width="3" height="177" fill="#000088"/>
<rect x="632" y="211" width="3" height="5" fill="#000088"/>
<rect x="632" y="209" width="3" height="2" fill="#830000"/>
<rect x="632" y="208" width="3" height="1" fill="#4cff4c"/>
<rect x="632" y="257" width="3" height="175" fill="#000088"/>
<rect x="635" y="212" width="3" height="4" fill="#000088"/>
<rect x="635" y="210" width="3" height="2" fill="#830000"/>
<rect x="635" y="209" width="3" height="1" fill="#4cff4c"/>
<rect x="635" y="257" width="3" height="175" fill="#000088"/>
<rect x="638" y="213" width="3" height="3" fill="#000088"/>
<rect x="638" y="212" width="3" height="1" fill="#830000"/>
<rect x="638" y="210" width="3" height="2" fill="#4cff4c"/>
<rect x="638" y="255" width="3" height="177" fill="#000088"/>
<rect x="641" y="147" width="3" height="69" fill="#000088"/>
<rect x="641" y="124" width="3" height="23" fill="#830000"/>
<rect x="641" y="119" width="3" height="5" fill="#4cff4c"/>
<rect x="641" y="255" width="3" height="177" fill="#000088"/>
<rect x="644" y="208" width="3" height="8" fill="#000088"/>
<rect x="644" y="207" width="3" height="1" fill="#830000"/>
<rect x="644" y="205" width="3" height="2" fill="#4cff4c"/>
<rect x="644" y="257" width="3" height="175" fill="#000088"/>
<rect x="647" y="215" width="3" height="1" fill="#830000"/>
<rect x="647" y="256" width="3" height="176" fill="#000088"/>
<rect x="650" y="212" width="3" height="4" fill="#000088"/>
<rect x="650" y="211" width="3" height="1" fill="#830000"/>
<rect x="650" y="209" width="3" height="2" fill="#4cff4c"/>
<rect x="650" y="255" width="3" height="177" fill="#000088"/>
<rect x="653" y="200" width="3" height="16" fill="#000088"/>
<rect x="653" y="194" width="3" height="6" fill="#830000"/>
<rect x="653" y="192" width="3" height="2" fill="#4cff4c"/>
<rect x="653" y="256" width="3" height="176" fill="#000088"/>
<rect x="656" y="213" width="3" height="3" fill="#000088"/>
<rect x="656" y="211" width="3" height="2" fill="#830000"/>
<rect x="656" y="209" width="3" height="2" fill="#4cff4c"/>
<rect x="656" y="255" width="3" height="177" fill="#000088"/>
<rect x="659" y="164" width="3" height="52" fill="#000088"/>
<rect x="659" y="146" width="3" height="18" fill="#830000"/>
<rect x="659" y="139" width="3" height="7" fill="#4cff4c"/>
<rect x="659" y="256" width="3" height="176" fill="#000088"/>
<rect x="662" y="210" width="3" height="6" fill="#000088"/>
<rect x="662" y="208" width="3" height="2" fill="#830000"/>
<rect x="662" y="206" width="3" height="2" fill="#4cff4c"/>
<rect x="662" y="255" width="3" height="177" fill="#000088"/>
<rect x="665" y="176" width="3" height="40" fill="#000088"/>
<rect x="665" y="164" width="3" height="12" fill="#830000"/>
<rect x="665" y="160" width="3" height="4" fill="#4cff4c"/>
<rect x="665" y="255" width="3" height="177" fill="#000088"/>
<rect x="668" y="149" width="4" height="67" fill="#000088"/>
<rect x="668" y="127" width="4" height="22" fill="#830000"/>
<rect x="668" y="118" width="4" height="9" fill="#4cff4c"/>
<rect x="668" y="256" width="4" height="176" fill="#000088"/>
<rect x="672" y="206" width="3" height="10" fill="#000088"/>
<rect x="672" y="203" width="3" height="3" fill="#830000"/>
<rect x="672" y="201" width="3" height="2" fill="#4cff4c"/>
<rect x="672" y="256" width="3" height="176" fill="#000088"/>
<rect x="675" y="214" width="3" height="2" fill="#000088"/>
<rect x="675" y="213" width="3" height="1" fill="#830000"/>
<rect x="675" y="212" width="3" height="1" fill="#4cff4c"/>
<rect x="675" y="257" width="3" height="175" fill="#000088"/>
<rect x="678" y="214" width="3" height="2" fill="#000088"/>
<rect x="678" y="212" width="3" height="2" fill="#830000"/>
<rect x="678" y="211" width="3" height="1" fill="#4cff4c"/>
<rect x="678" y="258" width="3" height="174" fill="#000088"/>
<rect x="681" y="205" width="3" height="11" fill="#000088"/>
<rect x="681" y="202" width="3" height="3" fill="#830000"/>
<rect x="681" y="200" width="3" height="2" fill="#4cff4c"/>
<rect x="681" y="257" width="3" height="175" fill="#000088"/>
<rect x="684" y="214" width="3" height="2" fill="#000088"/>
<rect x="684" y="213" width="3" height="1" fill="#830000"/>
<rect x="684" y="212" width="3" height="1" fill="#4cff4c"/>
<rect x="684" y="258" width="3" height="174" fill="#000088"/>
<rect x="687" y="207" width="3" height="9" fill="#000088"/>
<rect x="687" y="204" width="3" height="3" fill="#830000"/>
<rect x="687" y="203" width="3" height="1" fill="#4cff4c"/>
<rect x="687" y="256" width="3" height="176" fill="#000088"/>
<rect x="690" y="212" width="3" height="4" fill="#000088"/>
<rect x="690" y="210" width="3" height="2" fill="#830000"/>
<rect x="690" y="209" width="3" height="1" fill="#4cff4c"/>
<rect x="690" y="258" width="3" height="174" fill="#000088"/>
<rect x="693" y="213" width="3" height="3" fill="#000088"/>
<rect x="693" y="212" width="3" height="1" fill="#830000"/>
<rect x="693" y="210" width="3" height="2" fill="#4cff4c"/>
<rect x="693" y="258" width="3" height="174" fill="#000088"/>
<rect x="696" y="165" width="3" height="51" fill="#000088"/>
<rect x="696" y="146" width="3" height="19" fill="#830000"/>
<rect x="696" y="142" width="3" height="4" fill="#4cff4c"/>
<rect x="696" y="259" width="3" height="173" fill="#000088"/>
<rect x="699" y="175" width="3" height="41" fill="#000088"/>
<rect x="699" y="162" width="3" height="13" fill="#830000"/>
<rect x="699" y="157" width="3" height="5" fill="#4cff4c"/>
<rect x="699" y="255" width="3" height="177" fill="#000088"/>
<rect x="702" y="210" width="3" height="6" fill="#000088"/>
<rect x="702" y="207" width="3" height="3" fill="#830000"/>
<rect x="702" y="206" width="3" height="1" fill="#4cff4c"/>
<rect x="702" y="254" width="3" height="178" fill="#000088"/>
<rect x="705" y="151" width="3" height="65" fill="#000088"/>
<rect x="705" y="130" width="3" height="21" fill="#830000"/>
<rect x="705" y="121" width="3" height="9" fill="#4cff4c"/>
<rect x="705" y="258" width="3" height="174" fill="#000088"/>
<rect x="708" y="209" width="3" height="7" fill="#000088"/>
<rect x="708" y="206" width="3" height="3" fill="#830000"/>
<rect x="708" y="205" width="3" height="1" fill="#4cff4c"/>
<rect x="708" y="258" width="3" height="174" fill="#000088"/>
<rect x="711" y="208" width="3" height="8" fill="#000088"/>
<rect x="711" y="206" width="3" height="2" fill="#830000"/>
<rect x="711" y="204" width="3" height="2" fill="#4cff4c"/>
<rect x="711" y="257" width="3" height="175" fill="#000088"/>
<rect x="714" y="211" width="3" height="5" fill="#000088"/>
<rect x="714" y="209" width="3" height="2" fill="#830000"/>
<rect x="714" y="208" width="3" height="1" fill="#4cff4c"/>
<rect x="714" y="257" width="3" height="175" fill="#000088"/>
<rect x="717" y="210" width="3" height="6" fill="#000088"/>
<rect x="717" y="208" width="3" height="2" fill="#830000"/>
<rect x="717" y="206" width="3" height="2" fill="#4cff4c"/>
<rect x="717" y="257" width="3" height="175" fill="#000088"/>
<rect x="720" y="208" width="3" height="8" fill="#000088"/>
<rect x="720" y="204" width="3" height="4" fill="#830000"/>
<rect x="720" y="202" width="3" height="2" fill="#4cff4c"/>
<rect x="720" y="256" width="3" height="176" fill="#000088"/>
<rect x="723" y="206" width="3" height="10" fill="#000088"/>
<rect x="723" y="202" width="3" height="4" fill="#830000"/>
<rect x="723" y="200" width="3" height="2" fill="#4cff4c"/>
<rect x="723" y="255" width="3" height="177" fill="#000088"/>
<rect x="726" y="209" width="3" height="7" fill="#000088"/>
<rect x="726" y="207" width="3" height="2" fill="#830000"/>
<rect x="726" y="206" width="3" height="1" fill="#4cff4c"/>
<rect x="726" y="257" width="3" height="175" fill="#000088"/>
<rect x="729" y="206" width="3" height="10" fill="#000088"/>
<rect x="729" y="202" width="3" height="4" fill="#830000"/>
<rect x="729" y="200" width="3" height="2" fill="#4cff4c"/>
<rect x="729" y="256" width="3" height="176" fill="#000088"/>
<rect x="732" y="215" width="3" height="1" fill="#000088"/>
<rect x="732" y="214" width="3" height="1" fill="#830000"/>
<rect x="732" y="213" width="3" height="1" fill="#4cff4c"/>
<rect x="732" y="259" width="3" height="173" fill="#000088"/>
<rect x="735" y="214" width="3" height="2" fill="#000088"/>
<rect x="735" y="213" width="3" height="1" fill="#830000"/>
<rect x="735" y="212" width="3" height="1" fill="#4cff4c"/>
<rect x="735" y="255" width="3" height="177" fill="#000088"/>
<rect x="738" y="212" width="3" height="4" fill="#000088"/>
<rect x="738" y="211" width="3" height="1" fill="#830000"/>
<rect x="738" y="209" width="3" height="2" fill="#4cff4c"/>
<rect x="738" y="256" width="3" height="176" fill="#000088"/>
<rect x="741" y="170" width="3" height="46" fill="#000088"/>
<rect x="741" y="154" width="3" height="16" fill="#830000"/>
<rect x="741" y="147" width="3" height="7" fill="#4cff4c"/>
<rect x="741" y="257" width="3" height="175" fill="#000088"/>
<rect x="744" y="206" width="3" height="10" fill="#000088"/>
<rect x="744" y="202" width="3" height="4" fill="#830000"/>
<rect x="744" y="201" width="3" height="1" fill="#4cff4c"/>
<rect x="744" y="259" width="3" height="173" fill="#000088"/>
<rect x="747" y="207" width="3" height="9" fill="#000088"/>
<rect x="747" y="204" width="3" height="3" fill="#830000"/>
<rect x="747" y="203" width="3" height="1" fill="#4cff4c"/>
<rect x="747" y="255" width="3" height="177" fill="#000088"/>
<rect x="750" y="208" width="3" height="8" fill="#000088"/>
<rect x="750" y="206" width="3" height="2" fill="#830000"/>
<rect x="750" y="204" width="3" height="2" fill="#4cff4c"/>
<rect x="750" y="259" width="3" height="173" fill="#000088"/>
<rect x="753" y="214" width="3" height="2" fill="#000088"/>
<rect x="753" y="213" width="3" height="1" fill="#830000"/>
<rect x="753" y="212" width="3" height="1" fill="#4cff4c"/>
<rect x="753" y="259" width="3" height="173" fill="#000088"/>
<rect x="756" y="173" width="3" height="43" fill="#000088"/>
<rect x="756" y="164" width="3" height="9" fill="#830000"/>
<rect x="756" y="161" width="3" height="3" fill="#4cff4c"/>
<rect x="756" y="256" width="3" height="176" fill="#000088"/>
<rect x="759" y="215" width="3" height="1" fill="#830000"/>
<rect x="759" y="257" width="3" height="175" fill="#000088"/>
<rect x="762" y="212" width="3" height="4" fill="#000088"/>
<rect x="762" y="211" width="3" height="1" fill="#830000"/>
<rect x="762" y="209" width="3" height="2" fill="#4cff4c"/>
<rect x="762" y="259" width="3" height="173" fill="#000088"/>
<rect x="765" y="143" width="3" height="73" fill="#000088"/>
<rect x="765" y="119" width="3" height="24" fill="#830000"/>
<rect x="765" y="111" width="3" height="8" fill="#4cff4c"/>
<rect x="765" y="260" width="3" height="172" fill="#000088"/>
<rect x="768" y="214" width="3" height="2" fill="#000088"/>
<rect x="768" y="212" width="3" height="2" fill="#830000"/>
<rect x="768" y="211" width="3" height="1" fill="#4cff4c"/>
<rect x="768" y="259" width="3" height="173" fill="#000088"/>
<rect x="771" y="211" width="3" height="5" fill="#000088"/>
<rect x="771" y="210" width="3" height="1" fill="#830000"/>
<rect x="771" y="208" width="3" height="2" fill="#4cff4c"/>
<rect x="771" y="258" width="3" height="174" fill="#000088"/>
<rect x="774" y="130" width="3" height="86" fill="#000088"/>
<rect x="774" y="104" width="3" height="26" fill="#830000"/>
<rect x="774" y="94" width="3" height="10" fill="#4cff4c"/>
<rect x="774" y="258" width="3" height="174" fill="#000088"/>
<rect x="777" y="129" width="3" height="87" fill="#000088"/>
<rect x="777" y="104" width="3" height="25" fill="#830000"/>
<rect x="777" y="96" width="3" height="8" fill="#4cff4c"/>
<rect x="777" y="257" width="3" height="175" fill="#000088"/>
<rect x="780" y="169" width="3" height="47" fill="#000088"/>
<rect x="780" y="153" width="3" height="16" fill="#830000"/>
<rect x="780" y="146" width="3" height="7" fill="#4cff4c"/>
<rect x="780" y="258" width="3" height="174" fill="#000088"/>
<rect x="783" y="207" width="3" height="9" fill="#000088"/>
<rect x="783" y="205" width="3" height="2" fill="#830000"/>
<rect x="783" y="203" width="3" height="2" fill="#4cff4c"/>
<rect x="783" y="259" width="3" height="173" fill="#000088"/>
<rect x="786" y="177" width="3" height="39" fill="#000088"/>
<rect x="786" y="166" width="3" height="11" fill="#830000"/>
<rect x="786" y="161" width="3" height="5" fill="#4cff4c"/>
<rect x="786" y="259" width="3" height="173" fill="#000088"/>
<rect x="789" y="213" width="3" height="3" fill="#000088"/>
<rect x="789" y="211" width="3" height="2" fill="#830000"/>
<rect x="789" y="210" width="3" height="1" fill="#4cff4c"/>
<rect x="789" y="255" width="3" height="177" fill="#000088"/>
<rect x="792" y="213" width="3" height="3" fill="#000088"/>
<rect x="792" y="212" width="3" height="1" fill="#830000"/>
<rect x="792" y="210" width="3" height="2" fill="#4cff4c"/>
<rect x="792" y="258" width="3" height="174" fill="#000088"/>
<rect x="795" y="213" width="3" height="3" fill="#000088"/>
<rect x="795" y="212" width="3" height="1" fill="#830000"/>
<rect x="795" y="210" width="3" height="2" fill="#4cff4c"/>
<rect x="795" y="260" width="3" height="172" fill="#000088"/>
<rect x="798" y="178" width="3" height="38" fill="#000088"/>
<rect x="798" y="168" width="3" height="10" fill="#830000"/>
<rect x="798" y="164" width="3" height="4" fill="#4cff4c"/>
<rect x="798" y="258" width="3" height="174" fill="#000088"/>
<rect x="801" y="15" width="3" height="201" fill="#000088"/>
<rect x="801" y="260" width="3" height="172" fill="#000088"/>
<rect x="804" y="188" width="3" height="28" fill="#000088"/>
<rect x="804" y="177" width="3" height="11" fill="#830000"/>
<rect x="804" y="172" width="3" height="5" fill="#4cff4c"/>
<rect x="804" y="258" width="3" height="174" fill="#000088"/>
<rect x="807" y="208" width="3" height="8" fill="#000088"/>
<rect x="807" y="206" width="3" height="2" fill="#830000"/>
<rect x="807" y="204" width="3" height="2" fill="#4cff4c"/>
<rect x="807" y="260" width="3" height="172" fill="#000088"/>
<rect x="810" y="202" width="3" height="14" fill="#000088"/>
<rect x="810" y="198" width="3" height="4" fill="#830000"/>
<rect x="810" y="196" width="3" height="2" fill="#4cff4c"/>
<rect x="810" y="257" width="3" height="175" fill="#000088"/>
<rect x="813" y="204" width="3" height="12" fill="#000088"/>
<rect x="813" y="201" width="3" height="3" fill="#830000"/>
<rect x="813" y="199" width="3" height="2" fill="#4cff4c"/>
<rect x="813" y="257" width="3" height="175" fill="#000088"/>
<rect x="816" y="212" width="3" height="4" fill="#000088"/>
<rect x="816" y="211" width="3" height="1" fill="#830000"/>
<rect x="816" y="210" width="3" height="1" fill="#4cff4c"/>
<rect x="816" y="258" width="3" height="174" fill="#000088"/>
<rect x="819" y="215" width="3" height="1" fill="#830000"/>
<rect x="819" y="214" width="3" height="1" fill="#4cff4c"/>
<rect x="819" y="258" width="3" height="174" fill="#000088"/>
<rect x="822" y="213" width="3" height="3" fill="#000088"/>
<rect x="822" y="212" width="3" height="1" fill="#830000"/>
<rect x="822" y="211" width="3" height="1" fill="#4cff4c"/>
<rect x="822" y="258" width="3" height="174" fill="#000088"/>
<rect x="825" y="213" width="3" height="3" fill="#000088"/>
<rect x="825" y="212" width="3" height="1" fill="#830000"/>
<rect x="825" y="211" width="3" height="1" fill="#4cff4c"/>
<rect x="825" y="258" width="3" height="174" fill="#000088"/>
<rect x="828" y="212" width="3" height="4" fill="#000088"/>
<rect x="828" y="210" width="3" height="2" fill="#830000"/>
<rect x="828" y="209" width="3" height="1" fill="#4cff4c"/>
<rect x="828" y="261" width="3" height="171" fill="#000088"/>
<rect x="831" y="212" width="3" height="4" fill="#000088"/>
<rect x="831" y="211" width="3" height="1" fill="#830000"/>
<rect x="831" y="209" width="3" height="2" fill="#4cff4c"/>
<rect x="831" y="259" width="3" height="173" fill="#000088"/>
<rect x="834" y="214" width="3" height="2" fill="#000088"/>
<rect x="834" y="213" width="3" height="1" fill="#830000"/>
<rect x="834" y="212" width="3" height="1" fill="#4cff4c"/>
<rect x="834" y="259" width="3" height="173" fill="#000088"/>
<rect x="837" y="208" width="3" height="8" fill="#000088"/>
<rect x="837" y="206" width="3" height="2" fill="#830000"/>
<rect x="837" y="205" width="3" height="1" fill="#4cff4c"/>
<rect x="837" y="259" width="3" height="173" fill="#000088"/>
<rect x="840" y="204" width="4" height="12" fill="#000088"/>
<rect x="840" y="200" width="4" height="4" fill="#830000"/>
<rect x="840" y="199" width="4" height="1" fill="#4cff4c"/>
<rect x="840" y="259" width="4" height="173" fill="#000088"/>
<rect x="844" y="140" width="3" height="76" fill="#000088"/>
<rect x="844" y="113" width="3" height="27" fill="#830000"/>
<rect x="844" y="102" width="3" height="11" fill="#4cff4c"/>
<rect x="844" y="259" width="3" height="173" fill="#000088"/>
<rect x="847" y="213" width="3" height="3" fill="#000088"/>
<rect x="847" y="212" width="3" height="1" fill="#830000"/>
<rect x="847" y="211" width="3" height="1" fill="#4cff4c"/>
<rect x="847" y="261" width="3" height="171" fill="#000088"/>
<rect x="850" y="214" width="3" height="2" fill="#000088"/>
<rect x="850" y="213" width="3" height="1" fill="#830000"/>
<rect x="850" y="212" width="3" height="1" fill="#4cff4c"/>
<rect x="850" y="259" width="3" height="173" fill="#000088"/>
<rect x="853" y="212" width="3" height="4" fill="#000088"/>
<rect x="853" y="210" width="3" height="2" fill="#830000"/>
<rect x="853" y="209" width="3" height="1" fill="#4cff4c"/>
<rect x="853" y="259" width="3" height="173" fill="#000088"/>
<rect x="856" y="207" width="3" height="9" fill="#000088"/>
<rect x="856" y="205" width="3" height="2" fill="#830000"/>
<rect x="856" y="203" width="3" height="2" fill="#4cff4c"/>
<rect x="856" y="258" width="3" height="174" fill="#000088"/>
<rect x="859" y="214" width="3" height="2" fill="#000088"/>
<rect x="859" y="213" width="3" height="1" fill="#830000"/>
<rect x="859" y="212" width="3" height="1" fill="#4cff4c"/>
<rect x="859" y="260" width="3" height="172" fill="#000088"/>
<rect x="862" y="211" width="3" height="5" fill="#000088"/>
<rect x="862" y="209" width="3" height="2" fill="#830000"/>
<rect x="862" y="207" width="3" height="2" fill="#4cff4c"/>
<rect x="862" y="259" width="3" height="173" fill="#000088"/>
<rect x="865" y="211" width="3" height="5" fill="#000088"/>
<rect x="865" y="209" width="3" height="2" fill="#830000"/>
<rect x="865" y="207" width="3" height="2" fill="#4cff4c"/>
<rect x="865" y="261" width="3" height="171" fill="#000088"/>
<rect x="868" y="203" width="3" height="13" fill="#000088"/>
<rect x="868" y="198" width="3" height="5" fill="#830000"/>
<rect x="868" y="197" width="3" height="1" fill="#4cff4c"/>
<rect x="868" y="260" width="3" height="172" fill="#000088"/>
<rect x="871" y="209" width="3" height="7" fill="#000088"/>
<rect x="871" y="206" width="3" height="3" fill="#830000"/>
<rect x="871" y="205" width="3" height="1" fill="#4cff4c"/>
<rect x="871" y="261" width="3" height="171" fill="#000088"/>
<rect x="874" y="212" width="3" height="4" fill="#000088"/>
<rect x="874" y="211" width="3" height="1" fill="#830000"/>
<rect x="874" y="209" width="3" height="2" fill="#4cff4c"/>
<rect x="874" y="261" width="3" height="171" fill="#000088"/>
<rect x="877" y="211" width="3" height="5" fill="#000088"/>
<rect x="877" y="210" width="3" height="1" fill="#830000"/>
<rect x="877" y="208" width="3" height="2" fill="#4cff4c"/>
<rect x="877" y="261" width="3" height="171" fill="#000088"/>
<rect x="880" y="213" width="3" height="3" fill="#000088"/>
<rect x="880" y="212" width="3" height="1" fill="#830000"/>
<rect x="880" y="210" width="3" height="2" fill="#4cff4c"/>
<rect x="880" y="263" width="3" height="169" fill="#000088"/>
<rect x="883" y="176" width="3" height="40" fill="#000088"/>
<rect x="883" y="161" width="3" height="15" fill="#830000"/>
<rect x="883" y="156" width="3" height="5" fill="#4cff4c"/>
<rect x="883" y="262" width="3" height="170" fill="#000088"/>
<rect x="886" y="213" width="3" height="3" fill="#000088"/>
<rect x="886" y="212" width="3" height="1" fill="#830000"/>
<rect x="886" y="210" width="3" height="2" fill="#4cff4c"/>
<rect x="886" y="262" width="3" height="170" fill="#000088"/>
<rect x="889" y="215" width="3" height="1" fill="#000088"/>
<rect x="889" y="213" width="3" height="2" fill="#830000"/>
<rect x="889" y="263" width="3" height="169" fill="#000088"/>
<rect x="892" y="161" width="3" height="55" fill="#000088"/>
<rect x="892" y="140" width="3" height="21" fill="#830000"/>
<rect x="892" y="135" width="3" height="5" fill="#4cff4c"/>
<rect x="892" y="264" width="3" height="168" fill="#000088"/>
<rect x="895" y="214" width="3" height="2" fill="#000088"/>
<rect x="895" y="213" width="3" height="1" fill="#830000"/>
<rect x="895" y="212" width="3" height="1" fill="#4cff4c"/>
<rect x="895" y="265" width="3" height="167" fill="#000088"/>
<rect x="898" y="211" width="3" height="5" fill="#000088"/>
<rect x="898" y="210" width="3" height="1" fill="#830000"/>
<rect x="898" y="208" width="3" height="2" fill="#4cff4c"/>
<rect x="898" y="262" width="3" height="170" fill="#000088"/>
<rect x="901" y="212" width="3" height="4" fill="#000088"/>
<rect x="901" y="210" width="3" height="2" fill="#830000"/>
<rect x="901" y="209" width="3" height="1" fill="#4cff4c"/>
<rect x="901" y="265" width="3" height="167" fill="#000088"/>
<rect x="904" y="206" width="3" height="10" fill="#000088"/>
<rect x="904" y="203" width="3" height="3" fill="#830000"/>
<rect x="904" y="202" width="3" height="1" fill="#4cff4c"/>
<rect x="904" y="266" width="3" height="166" fill="#000088"/>
<rect x="907" y="210" width="3" height="6" fill="#000088"/>
<rect x="907" y="209" width="3" height="1" fill="#830000"/>
<rect x="907" y="207" width="3" height="2" fill="#4cff4c"/>
<rect x="907" y="262" width="3" height="170" fill="#000088"/>
<rect x="910" y="214" width="3" height="2" fill="#000088"/>
<rect x="910" y="213" width="3" height="1" fill="#830000"/>
<rect x="910" y="212" width="3" height="1" fill="#4cff4c"/>
<rect x="910" y="266" width="3" height="166" fill="#000088"/>
<rect x="913" y="213" width="3" height="3" fill="#000088"/>
<rect x="913" y="212" width="3" height="1" fill="#830000"/>
<rect x="913" y="210" width="3" height="2" fill="#4cff4c"/>
<rect x="913" y="269" width="3" height="163" fill="#000088"/>
<rect x="916" y="215" width="3" height="1" fill="#000088"/>
<rect x="916" y="214" width="3" height="1" fill="#830000"/>
<rect x="916" y="213" width="3" height="1" fill="#4cff4c"/>
<rect x="916" y="269" width="3" height="163" fill="#000088"/>
<rect x="919" y="208" width="3" height="8" fill="#000088"/>
<rect x="919" y="205" width="3" height="3" fill="#830000"/>
<rect x="919" y="203" width="3" height="2" fill="#4cff4c"/>
<rect x="919" y="272" width="3" height="160" fill="#000088"/>
<rect x="922" y="212" width="3" height="4" fill="#000088"/>
<rect x="922" y="210" width="3" height="2" fill="#830000"/>
<rect x="922" y="208" width="3" height="2" fill="#4cff4c"/>
<rect x="922" y="275" width="3" height="157" fill="#000088"/>
<rect x="925" y="215" width="3" height="1" fill="#4cff4c"/>
<rect x="925" y="275" width="3" height="157" fill="#000088"/>
<rect x="928" y="215" width="3" height="1" fill="#000088"/>
<rect x="928" y="214" width="3" height="1" fill="#4cff4c"/>
<rect x="928" y="276" width="3" height="156" fill="#000088"/>
<rect x="931" y="212" width="3" height="4" fill="#000088"/>
<rect x="931" y="209" width="3" height="3" fill="#830000"/>
<rect x="931" y="208" width="3" height="1" fill="#4cff4c"/>
<rect x="931" y="276" width="3" height="156" fill="#000088"/>
<rect x="934" y="215" width="3" height="1" fill="#000088"/>
<rect x="934" y="214" width="3" height="1" fill="#4cff4c"/>
<rect x="934" y="276" width="3" height="156" fill="#000088"/>
<rect x="937" y="215" width="3" height="1" fill="#000088"/>
<rect x="937" y="214" width="3" height="1" fill="#4cff4c"/>
<rect x="937" y="283" width="3" height="149" fill="#000088"/>
<rect x="68" y="641" width="3" height="7" fill="#000088"/>
<rect x="68" y="640" width="3" height="1" fill="#830000"/>
<rect x="68" y="638" width="3" height="2" fill="#4cff4c"/>
<rect x="71" y="646" width="3" height="2" fill="#000088"/>
<rect x="71" y="645" width="3" height="1" fill="#830000"/>
<rect x="71" y="644" width="3" height="1" fill="#4cff4c"/>
<rect x="74" y="587" width="3" height="61" fill="#000088"/>
<rect x="74" y="566" width="3" height="21" fill="#830000"/>
<rect x="74" y="561" width="3" height="5" fill="#4cff4c"/>
<rect x="77" y="638" width="3" height="10" fill="#000088"/>
<rect x="77" y="635" width="3" height="3" fill="#830000"/>
<rect x="77" y="633" width="3" height="2" fill="#4cff4c"/>
<rect x="80" y="645" width="3" height="3" fill="#000088"/>
<rect x="80" y="644" width="3" height="1" fill="#830000"/>
<rect x="80" y="642" width="3" height="2" fill="#4cff4c"/>
<rect x="83" y="643" width="3" height="5" fill="#000088"/>
<rect x="83" y="642" width="3" height="1" fill="#830000"/>
<rect x="83" y="641" width="3" height="1" fill="#4cff4c"/>
<rect x="86" y="592" width="3" height="56" fill="#000088"/>
<rect x="86" y="574" width="3" height="18" fill="#830000"/>
<rect x="86" y="565" width="3" height="9" fill="#4cff4c"/>
<rect x="89" y="600" width="3" height="48" fill="#000088"/>
<rect x="89" y="588" width="3" height="12" fill="#830000"/>
<rect x="89" y="583" width="3" height="5" fill="#4cff4c"/>
<rect x="92" y="639" width="3" height="9" fill="#000088"/>
<rect x="92" y="636" width="3" height="3" fill="#830000"/>
<rect x="92" y="635" width="3" height="1" fill="#4cff4c"/>
<rect x="95" y="640" width="3" height="8" fill="#000088"/>
<rect x="95" y="638" width="3" height="2" fill="#830000"/>
<rect x="95" y="636" width="3" height="2" fill="#4cff4c"/>
<rect x="98" y="636" width="3" height="12" fill="#000088"/>
<rect x="98" y="633" width="3" height="3" fill="#830000"/>
<rect x="98" y="631" width="3" height="2" fill="#4cff4c"/>
<rect x="101" y="647" width="3" height="1" fill="#830000"/>
<rect x="101" y="646" width="3" height="1" fill="#4cff4c"/>
<rect x="104" y="625" width="3" height="23" fill="#000088"/>
<rect x="104" y="616" width="3" height="9" fill="#830000"/>
<rect x="104" y="613" width="3" height="3" fill="#4cff4c"/>
<rect x="107" y="625" width="3" height="23" fill="#000088"/>
<rect x="107" y="615" width="3" height="10" fill="#830000"/>
<rect x="107" y="612" width="3" height="3" fill="#4cff4c"/>
<rect x="110" y="644" width="3" height="4" fill="#000088"/>
<rect x="110" y="642" width="3" height="2" fill="#830000"/>
<rect x="110" y="641" width="3" height="1" fill="#4cff4c"/>
<rect x="113" y="646" width="3" height="2" fill="#000088"/>
<rect x="113" y="645" width="3" height="1" fill="#830000"/>
<rect x="113" y="644" width="3" height="1" fill="#4cff4c"/>
<rect x="116" y="643" width="3" height="5" fill="#000088"/>
<rect x="116" y="642" width="3" height="1" fill="#830000"/>
<rect x="116" y="640" width="3" height="2" fill="#4cff4c"/>
<rect x="119" y="647" width="3" height="1" fill="#000088"/>
<rect x="119" y="646" width="3" height="1" fill="#830000"/>
<rect x="119" y="645" width="3" height="1" fill="#4cff4c"/>
<rect x="122" y="641" width="3" height="7" fill="#000088"/>
<rect x="122" y="638" width="3" height="3" fill="#830000"/>
<rect x="122" y="636" width="3" height="2" fill="#4cff4c"/>
<rect x="125" y="647" width="3" height="1" fill="#4cff4c"/>
<rect x="128" y="635" width="3" height="13" fill="#000088"/>
<rect x="128" y="631" width="3" height="4" fill="#830000"/>
<rect x="128" y="630" width="3" height="1" fill="#4cff4c"/>
<rect x="131" y="568" width="3" height="80" fill="#000088"/>
<rect x="131" y="542" width="3" height="26" fill="#830000"/>
<rect x="131" y="534" width="3" height="8" fill="#4cff4c"/>
<rect x="134" y="644" width="3" height="4" fill="#000088"/>
<rect x="134" y="642" width="3" height="2" fill="#830000"/>
<rect x="134" y="640" width="3" height="2" fill="#4cff4c"/>
<rect x="137" y="645" width="3" height="3" fill="#000088"/>
<rect x="137" y="644" width="3" height="1" fill="#830000"/>
<rect x="137" y="642" width="3" height="2" fill="#4cff4c"/>
<rect x="140" y="643" width="3" height="5" fill="#000088"/>
<rect x="140" y="641" width="3" height="2" fill="#830000"/>
<rect x="140" y="640" width="3" height="1" fill="#4cff4c"/>
<rect x="143" y="632" width="3" height="16" fill="#000088"/>
<rect x="143" y="628" width="3" height="4" fill="#830000"/>
<rect x="143" y="626" width="3" height="2" fill="#4cff4c"/>
<rect x="146" y="587" width="3" height="61" fill="#000088"/>
<rect x="146" y="569" width="3" height="18" fill="#830000"/>
<rect x="146" y="563" width="3" height="6" fill="#4cff4c"/>
<rect x="149" y="641" width="3" height="7" fill="#000088"/>
<rect x="149" y="638" width="3" height="3" fill="#830000"/>
<rect x="149" y="636" width="3" height="2" fill="#4cff4c"/>
<rect x="152" y="600" width="3" height="48" fill="#000088"/>
<rect x="152" y="585" width="3" height="15" fill="#830000"/>
<rect x="152" y="580" width="3" height="5" fill="#4cff4c"/>
<rect x="155" y="639" width="4" height="9" fill="#000088"/>
<rect x="155" y="635" width="4" height="4" fill="#830000"/>
<rect x="155" y="633" width="4" height="2" fill="#4cff4c"/>
<rect x="159" y="641" width="3" height="7" fill="#000088"/>
<rect x="159" y="639" width="3" height="2" fill="#830000"/>
<rect x="159" y="637" width="3" height="2" fill="#4cff4c"/>
<rect x="162" y="645" width="3" height="3" fill="#000088"/>
<rect x="162" y="644" width="3" height="1" fill="#830000"/>
<rect x="162" y="642" width="3" height="2" fill="#4cff4c"/>
<rect x="165" y="644" width="3" height="4" fill="#000088"/>
<rect x="165" y="642" width="3" height="2" fill="#830000"/>
<rect x="165" y="640" width="3" height="2" fill="#4cff4c"/>
<rect x="168" y="642" width="3" height="6" fill="#000088"/>
<rect x="168" y="639" width="3" height="3" fill="#830000"/>
<rect x="168" y="637" width="3" height="2" fill="#4cff4c"/>
<rect x="171" y="597" width="3" height="51" fill="#000088"/>
<rect x="171" y="579" width="3" height="18" fill="#830000"/>
<rect x="171" y="575" width="3" height="4" fill="#4cff4c"/>
<rect x="174" y="641" width="3" height="7" fill="#000088"/>
<rect x="174" y="639" width="3" height="2" fill="#830000"/>
<rect x="174" y="637" width="3" height="2" fill="#4cff4c"/>
<rect x="177" y="642" width="3" height="6" fill="#000088"/>
<rect x="177" y="640" width="3" height="2" fill="#830000"/>
<rect x="177" y="638" width="3" height="2" fill="#4cff4c"/>
<rect x="180" y="640" width="3" height="8" fill="#000088"/>
<rect x="180" y="637" width="3" height="3" fill="#830000"/>
<rect x="180" y="635" width="3" height="2" fill="#4cff4c"/>
<rect x="183" y="642" width="3" height="6" fill="#000088"/>
<rect x="183" y="640" width="3" height="2" fill="#830000"/>
<rect x="183" y="639" width="3" height="1" fill="#4cff4c"/>
<rect x="186" y="571" width="3" height="77" fill="#000088"/>
<rect x="186" y="547" width="3" height="24" fill="#830000"/>
<rect x="186" y="537" width="3" height="10" fill="#4cff4c"/>
<rect x="189" y="646" width="3" height="2" fill="#000088"/>
<rect x="189" y="645" width="3" height="1" fill="#830000"/>
<rect x="189" y="644" width="3" height="1" fill="#4cff4c"/>
<rect x="192" y="643" width="3" height="5" fill="#000088"/>
<rect x="192" y="641" width="3" height="2" fill="#830000"/>
<rect x="192" y="640" width="3" height="1" fill="#4cff4c"/>
<rect x="195" y="641" width="3" height="7" fill="#000088"/>
<rect x="195" y="638" width="3" height="3" fill="#830000"/>
<rect x="195" y="636" width="3" height="2" fill="#4cff4c"/>
<rect x="198" y="591" width="3" height="57" fill="#000088"/>
<rect x="198" y="572" width="3" height="19" fill="#830000"/>
<rect x="198" y="566" width="3" height="6" fill="#4cff4c"/>
<rect x="201" y="635" width="3" height="13" fill="#000088"/>
<rect x="201" y="632" width="3" height="3" fill="#830000"/>
<rect x="201" y="631" width="3" height="1" fill="#4cff4c"/>
<rect x="204" y="646" width="3" height="2" fill="#000088"/>
<rect x="204" y="645" width="3" height="1" fill="#830000"/>
<rect x="204" y="644" width="3" height="1" fill="#4cff4c"/>
<rect x="207" y="640" width="3" height="8" fill="#000088"/>
<rect x="207" y="638" width="3" height="2" fill="#830000"/>
<rect x="207" y="637" width="3" height="1" fill="#4cff4c"/>
<rect x="210" y="645" width="3" height="3" fill="#000088"/>
<rect x="210" y="643" width="3" height="2" fill="#830000"/>
<rect x="210" y="642" width="3" height="1" fill="#4cff4c"/>
<rect x="213" y="642" width="3" height="6" fill="#000088"/>
<rect x="213" y="640" width="3" height="2" fill="#830000"/>
<rect x="213" y="639" width="3" height="1" fill="#4cff4c"/>
<rect x="216" y="633" width="3" height="15" fill="#000088"/>
<rect x="216" y="628" width="3" height="5" fill="#830000"/>
<rect x="216" y="626" width="3" height="2" fill="#4cff4c"/>
<rect x="219" y="602" width="3" height="46" fill="#000088"/>
<rect x="219" y="587" width="3" height="15" fill="#830000"/>
<rect x="219" y="581" width="3" height="6" fill="#4cff4c"/>
<rect x="222" y="644" width="3" height="4" fill="#000088"/>
<rect x="222" y="642" width="3" height="2" fill="#830000"/>
<rect x="222" y="641" width="3" height="1" fill="#4cff4c"/>
<rect x="225" y="641" width="3" height="7" fill="#000088"/>
<rect x="225" y="639" width="3" height="2" fill="#830000"/>
<rect x="225" y="637" width="3" height="2" fill="#4cff4c"/>
<rect x="228" y="646" width="3" height="2" fill="#000088"/>
<rect x="228" y="644" width="3" height="2" fill="#830000"/>
<rect x="228" y="643" width="3" height="1" fill="#4cff4c"/>
<rect x="231" y="570" width="3" height="78" fill="#000088"/>
<rect x="231" y="546" width="3" height="24" fill="#830000"/>
<rect x="231" y="538" width="3" height="8" fill="#4cff4c"/>
<rect x="234" y="620" width="3" height="28" fill="#000088"/>
<rect x="234" y="613" width="3" height="7" fill="#830000"/>
<rect x="234" y="611" width="3" height="2" fill="#4cff4c"/>
<rect x="237" y="644" width="3" height="4" fill="#000088"/>
<rect x="237" y="642" width="3" height="2" fill="#830000"/>
<rect x="237" y="640" width="3" height="2" fill="#4cff4c"/>
<rect x="240" y="644" width="3" height="4" fill="#000088"/>
<rect x="240" y="643" width="3" height="1" fill="#830000"/>
<rect x="240" y="642" width="3" height="1" fill="#4cff4c"/>
<rect x="243" y="639" width="3" height="9" fill="#000088"/>
<rect x="243" y="636" width="3" height="3" fill="#830000"/>
<rect x="243" y="635" width="3" height="1" fill="#4cff4c"/>
<rect x="246" y="646" width="3" height="2" fill="#000088"/>
<rect x="246" y="645" width="3" height="1" fill="#830000"/>
<rect x="249" y="639" width="3" height="9" fill="#000088"/>
<rect x="249" y="636" width="3" height="3" fill="#830000"/>
<rect x="249" y="634" width="3" height="2" fill="#4cff4c"/>
<rect x="252" y="641" width="3" height="7" fill="#000088"/>
<rect x="252" y="638" width="3" height="3" fill="#830000"/>
<rect x="252" y="636" width="3" height="2" fill="#4cff4c"/>
<rect x="255" y="644" width="3" height="4" fill="#000088"/>
<rect x="255" y="643" width="3" height="1" fill="#830000"/>
<rect x="255" y="642" width="3" height="1" fill="#4cff4c"/>
<rect x="258" y="447" width="3" height="201" fill="#000088"/>
<rect x="261" y="570" width="3" height="78" fill="#000088"/>
<rect x="261" y="545" width="3" height="25" fill="#830000"/>
<rect x="261" y="537" width="3" height="8" fill="#4cff4c"/>
<rect x="264" y="587" width="3" height="61" fill="#000088"/>
<rect x="264" y="566" width="3" height="21" fill="#830000"/>
<rect x="264" y="559" width="3" height="7" fill="#4cff4c"/>
<rect x="267" y="642" width="3" height="6" fill="#000088"/>
<rect x="267" y="639" width="3" height="3" fill="#830000"/>
<rect x="267" y="637" width="3" height="2" fill="#4cff4c"/>
<rect x="270" y="515" width="3" height="133" fill="#000088"/>
<rect x="270" y="473" width="3" height="42" fill="#830000"/>
<rect x="270" y="460" width="3" height="13" fill="#4cff4c"/>
<rect x="273" y="642" width="3" height="6" fill="#000088"/>
<rect x="273" y="641" width="3" height="1" fill="#830000"/>
<rect x="273" y="639" width="3" height="2" fill="#4cff4c"/>
<rect x="276" y="640" width="3" height="8" fill="#000088"/>
<rect x="276" y="638" width="3" height="2" fill="#830000"/>
<rect x="276" y="637" width="3" height="1" fill="#4cff4c"/>
<rect x="279" y="620" width="3" height="28" fill="#000088"/>
<rect x="279" y="612" width="3" height="8" fill="#830000"/>
<rect x="279" y="609" width="3" height="3" fill="#4cff4c"/>
<rect x="282" y="575" width="3" height="73" fill="#000088"/>
<rect x="282" y="551" width="3" height="24" fill="#830000"/>
<rect x="282" y="543" width="3" height="8" fill="#4cff4c"/>
<rect x="285" y="599" width="3" height="49" fill="#000088"/>
<rect x="285" y="581" width="3" height="18" fill="#830000"/>
<rect x="285" y="575" width="3" height="6" fill="#4cff4c"/>
<rect x="288" y="640" width="3" height="8" fill="#000088"/>
<rect x="288" y="637" width="3" height="3" fill="#830000"/>
<rect x="288" y="636" width="3" height="1" fill="#4cff4c"/>
<rect x="291" y="643" width="3" height="5" fill="#000088"/>
<rect x="291" y="642" width="3" height="1" fill="#830000"/>
<rect x="291" y="640" width="3" height="2" fill="#4cff4c"/>
<rect x="294" y="643" width="3" height="5" fill="#000088"/>
<rect x="294" y="642" width="3" height="1" fill="#830000"/>
<rect x="294" y="640" width="3" height="2" fill="#4cff4c"/>
<rect x="297" y="639" width="3" height="9" fill="#000088"/>
<rect x="297" y="636" width="3" height="3" fill="#830000"/>
<rect x="297" y="635" width="3" height="1" fill="#4cff4c"/>
<rect x="300" y="642" width="3" height="6" fill="#000088"/>
<rect x="300" y="640" width="3" height="2" fill="#830000"/>
<rect x="300" y="639" width="3" height="1" fill="#4cff4c"/>
<rect x="303" y="643" width="3" height="5" fill="#000088"/>
<rect x="303" y="641" width="3" height="2" fill="#830000"/>
<rect x="303" y="640" width="3" height="1" fill="#4cff4c"/>
<rect x="306" y="574" width="3" height="74" fill="#000088"/>
<rect x="306" y="550" width="3" height="24" fill="#830000"/>
<rect x="306" y="541" width="3" height="9" fill="#4cff4c"/>
<rect x="309" y="632" width="3" height="16" fill="#000088"/>
<rect x="309" y="627" width="3" height="5" fill="#830000"/>
<rect x="309" y="626" width="3" height="1" fill="#4cff4c"/>
<rect x="312" y="640" width="3" height="8" fill="#000088"/>
<rect x="312" y="637" width="3" height="3" fill="#830000"/>
<rect x="312" y="635" width="3" height="2" fill="#4cff4c"/>
<rect x="315" y="576" width="3" height="72" fill="#000088"/>
<rect x="315" y="553" width="3" height="23" fill="#830000"/>
<rect x="315" y="545" width="3" height="8" fill="#4cff4c"/>
<rect x="318" y="616" width="3" height="32" fill="#000088"/>
<rect x="318" y="608" width="3" height="8" fill="#830000"/>
<rect x="318" y="604" width="3" height="4" fill="#4cff4c"/>
<rect x="321" y="644" width="3" height="4" fill="#000088"/>
<rect x="321" y="643" width="3" height="1" fill="#830000"/>
<rect x="321" y="641" width="3" height="2" fill="#4cff4c"/>
<rect x="324" y="627" width="3" height="21" fill="#000088"/>
<rect x="324" y="620" width="3" height="7" fill="#830000"/>
<rect x="324" y="618" width="3" height="2" fill="#4cff4c"/>
<rect x="327" y="640" width="4" height="8" fill="#000088"/>
<rect x="327" y="638" width="4" height="2" fill="#830000"/>
<rect x="327" y="636" width="4" height="2" fill="#4cff4c"/>
<rect x="331" y="583" width="3" height="65" fill="#000088"/>
<rect x="331" y="564" width="3" height="19" fill="#830000"/>
<rect x="331" y="556" width="3" height="8" fill="#4cff4c"/>
<rect x="334" y="499" width="3" height="149" fill="#000088"/>
<rect x="334" y="448" width="3" height="51" fill="#830000"/>
<rect x="334" y="447" width="3" height="1" fill="#4cff4c"/>
<rect x="337" y="644" width="3" height="4" fill="#000088"/>
<rect x="337" y="642" width="3" height="2" fill="#830000"/>
<rect x="337" y="641" width="3" height="1" fill="#4cff4c"/>
<rect x="340" y="645" width="3" height="3" fill="#000088"/>
<rect x="340" y="644" width="3" height="1" fill="#830000"/>
<rect x="340" y="642" width="3" height="2" fill="#4cff4c"/>
<rect x="343" y="553" width="3" height="95" fill="#000088"/>
<rect x="343" y="522" width="3" height="31" fill="#830000"/>
<rect x="343" y="511" width="3" height="11" fill="#4cff4c"/>
<rect x="346" y="447" width="3" height="201" fill="#000088"/>
<rect x="349" y="615" width="3" height="33" fill="#000088"/>
<rect x="349" y="604" width="3" height="11" fill="#830000"/>
<rect x="349" y="600" width="3" height="4" fill="#4cff4c"/>
<rect x="352" y="637" width="3" height="11" fill="#000088"/>
<rect x="352" y="632" width="3" height="5" fill="#830000"/>
<rect x="352" y="629" width="3" height="3" fill="#4cff4c"/>
<rect x="355" y="486" width="3" height="162" fill="#000088"/>
<rect x="355" y="447" width="3" height="39" fill="#830000"/>
<rect x="358" y="632" width="3" height="16" fill="#000088"/>
<rect x="358" y="628" width="3" height="4" fill="#830000"/>
<rect x="358" y="626" width="3" height="2" fill="#4cff4c"/>
<rect x="361" y="612" width="3" height="36" fill="#000088"/>
<rect x="361" y="601" width="3" height="11" fill="#830000"/>
<rect x="361" y="597" width="3" height="4" fill="#4cff4c"/>
<rect x="364" y="646" width="3" height="2" fill="#000088"/>
<rect x="364" y="644" width="3" height="2" fill="#830000"/>
<rect x="367" y="646" width="3" height="2" fill="#000088"/>
<rect x="367" y="645" width="3" height="1" fill="#830000"/>
<rect x="367" y="644" width="3" height="1" fill="#4cff4c"/>
<rect x="370" y="561" width="3" height="87" fill="#000088"/>
<rect x="370" y="532" width="3" height="29" fill="#830000"/>
<rect x="370" y="524" width="3" height="8" fill="#4cff4c"/>
<rect x="373" y="586" width="3" height="62" fill="#000088"/>
<rect x="373" y="566" width="3" height="20" fill="#830000"/>
<rect x="373" y="560" width="3" height="6" fill="#4cff4c"/>
<rect x="376" y="587" width="3" height="61" fill="#000088"/>
<rect x="376" y="566" width="3" height="21" fill="#830000"/>
<rect x="376" y="560" width="3" height="6" fill="#4cff4c"/>
<rect x="379" y="645" width="3" height="3" fill="#000088"/>
<rect x="379" y="643" width="3" height="2" fill="#830000"/>
<rect x="379" y="641" width="3" height="2" fill="#4cff4c"/>
<rect x="382" y="579" width="3" height="69" fill="#000088"/>
<rect x="382" y="558" width="3" height="21" fill="#830000"/>
<rect x="382" y="551" width="3" height="7" fill="#4cff4c"/>
<rect x="385" y="644" width="3" height="4" fill="#000088"/>
<rect x="385" y="642" width="3" height="2" fill="#830000"/>
<rect x="385" y="640" width="3" height="2" fill="#4cff4c"/>
<rect x="388" y="554" width="3" height="94" fill="#000088"/>
<rect x="388" y="526" width="3" height="28" fill="#830000"/>
<rect x="388" y="518" width="3" height="8" fill="#4cff4c"/>
<rect x="391" y="646" width="3" height="2" fill="#000088"/>
<rect x="391" y="645" width="3" height="1" fill="#830000"/>
<rect x="391" y="644" width="3" height="1" fill="#4cff4c"/>
<rect x="394" y="645" width="3" height="3" fill="#000088"/>
<rect x="394" y="644" width="3" height="1" fill="#830000"/>
<rect x="394" y="643" width="3" height="1" fill="#4cff4c"/>
<rect x="397" y="639" width="3" height="9" fill="#000088"/>
<rect x="397" y="636" width="3" height="3" fill="#830000"/>
<rect x="397" y="634" width="3" height="2" fill="#4cff4c"/>
<rect x="400" y="646" width="3" height="2" fill="#000088"/>
<rect x="400" y="645" width="3" height="1" fill="#830000"/>
<rect x="403" y="634" width="3" height="14" fill="#000088"/>
<rect x="403" y="630" width="3" height="4" fill="#830000"/>
<rect x="403" y="628" width="3" height="2" fill="#4cff4c"/>
<rect x="406" y="586" width="3" height="62" fill="#000088"/>
<rect x="406" y="566" width="3" height="20" fill="#830000"/>
<rect x="406" y="560" width="3" height="6" fill="#4cff4c"/>
<rect x="409" y="644" width="3" height="4" fill="#000088"/>
<rect x="409" y="642" width="3" height="2" fill="#830000"/>
<rect x="409" y="641" width="3" height="1" fill="#4cff4c"/>
<rect x="412" y="642" width="3" height="6" fill="#000088"/>
<rect x="412" y="640" width="3" height="2" fill="#830000"/>
<rect x="412" y="639" width="3" height="1" fill="#4cff4c"/>
<rect x="415" y="644" width="3" height="4" fill="#000088"/>
<rect x="415" y="642" width="3" height="2" fill="#830000"/>
<rect x="415" y="641" width="3" height="1" fill="#4cff4c"/>
<rect x="418" y="640" width="3" height="8" fill="#000088"/>
<rect x="418" y="637" width="3" height="3" fill="#830000"/>
<rect x="418" y="636" width="3" height="1" fill="#4cff4c"/>
<rect x="421" y="641" width="3" height="7" fill="#000088"/>
<rect x="421" y="639" width="3" height="2" fill="#830000"/>
<rect x="421" y="637" width="3" height="2" fill="#4cff4c"/>
<rect x="424" y="641" width="3" height="7" fill="#000088"/>
<rect x="424" y="637" width="3" height="4" fill="#830000"/>
<rect x="424" y="635" width="3" height="2" fill="#4cff4c"/>
<rect x="427" y="643" width="3" height="5" fill="#000088"/>
<rect x="427" y="642" width="3" height="1" fill="#830000"/>
<rect x="427" y="640" width="3" height="2" fill="#4cff4c"/>
<rect x="430" y="645" width="3" height="3" fill="#000088"/>
<rect x="430" y="642" width="3" height="3" fill="#830000"/>
<rect x="430" y="641" width="3" height="1" fill="#4cff4c"/>
<rect x="433" y="447" width="3" height="201" fill="#000088"/>
<rect x="436" y="646" width="3" height="2" fill="#000088"/>
<rect x="436" y="645" width="3" height="1" fill="#830000"/>
<rect x="436" y="644" width="3" height="1" fill="#4cff4c"/>
<rect x="439" y="645" width="3" height="3" fill="#000088"/>
<rect x="439" y="644" width="3" height="1" fill="#830000"/>
<rect x="439" y="642" width="3" height="2" fill="#4cff4c"/>
<rect x="442" y="641" width="3" height="7" fill="#000088"/>
<rect x="442" y="638" width="3" height="3" fill="#830000"/>
<rect x="442" y="636" width="3" height="2" fill="#4cff4c"/>
<rect x="445" y="630" width="3" height="18" fill="#000088"/>
<rect x="445" y="625" width="3" height="5" fill="#830000"/>
<rect x="445" y="623" width="3" height="2" fill="#4cff4c"/>
<rect x="448" y="647" width="3" height="1" fill="#000088"/>
<rect x="448" y="646" width="3" height="1" fill="#830000"/>
<rect x="451" y="642" width="3" height="6" fill="#000088"/>
<rect x="451" y="640" width="3" height="2" fill="#830000"/>
<rect x="451" y="638" width="3" height="2" fill="#4cff4c"/>
<rect x="454" y="643" width="3" height="5" fill="#000088"/>
<rect x="454" y="641" width="3" height="2" fill="#830000"/>
<rect x="454" y="639" width="3" height="2" fill="#4cff4c"/>
<rect x="457" y="642" width="3" height="6" fill="#000088"/>
<rect x="457" y="640" width="3" height="2" fill="#830000"/>
<rect x="457" y="639" width="3" height="1" fill="#4cff4c"/>
<rect x="460" y="643" width="3" height="5" fill="#000088"/>
<rect x="460" y="642" width="3" height="1" fill="#830000"/>
<rect x="460" y="641" width="3" height="1" fill="#4cff4c"/>
<rect x="463" y="647" width="3" height="1" fill="#000088"/>
<rect x="463" y="645" width="3" height="2" fill="#830000"/>
<rect x="463" y="644" width="3" height="1" fill="#4cff4c"/>
<rect x="466" y="554" width="3" height="94" fill="#000088"/>
<rect x="466" y="526" width="3" height="28" fill="#830000"/>
<rect x="466" y="516" width="3" height="10" fill="#4cff4c"/>
<rect x="469" y="647" width="3" height="1" fill="#000088"/>
<rect x="469" y="646" width="3" height="1" fill="#830000"/>
<rect x="469" y="645" width="3" height="1" fill="#4cff4c"/>
<rect x="472" y="613" width="3" height="35" fill="#000088"/>
<rect x="472" y="600" width="3" height="13" fill="#830000"/>
<rect x="472" y="597" width="3" height="3" fill="#4cff4c"/>
<rect x="475" y="643" width="3" height="5" fill="#000088"/>
<rect x="475" y="640" width="3" height="3" fill="#830000"/>
<rect x="475" y="639" width="3" height="1" fill="#4cff4c"/>
<rect x="478" y="646" width="3" height="2" fill="#000088"/>
<rect x="478" y="645" width="3" height="1" fill="#830000"/>
<rect x="478" y="644" width="3" height="1" fill="#4cff4c"/>
<rect x="481" y="644" width="3" height="4" fill="#000088"/>
<rect x="481" y="643" width="3" height="1" fill="#830000"/>
<rect x="481" y="641" width="3" height="2" fill="#4cff4c"/>
<rect x="484" y="634" width="3" height="14" fill="#000088"/>
<rect x="484" y="629" width="3" height="5" fill="#830000"/>
<rect x="484" y="627" width="3" height="2" fill="#4cff4c"/>
<rect x="487" y="644" width="3" height="4" fill="#000088"/>
<rect x="487" y="643" width="3" height="1" fill="#830000"/>
<rect x="487" y="642" width="3" height="1" fill="#4cff4c"/>
<rect x="490" y="603" width="3" height="45" fill="#000088"/>
<rect x="490" y="588" width="3" height="15" fill="#830000"/>
<rect x="490" y="583" width="3" height="5" fill="#4cff4c"/>
<rect x="493" y="638" width="3" height="10" fill="#000088"/>
<rect x="493" y="634" width="3" height="4" fill="#830000"/>
<rect x="493" y="632" width="3" height="2" fill="#4cff4c"/>
<rect x="496" y="645" width="3" height="3" fill="#000088"/>
<rect x="496" y="644" width="3" height="1" fill="#830000"/>
<rect x="496" y="642" width="3" height="2" fill="#4cff4c"/>
<rect x="499" y="645" width="3" height="3" fill="#000088"/>
<rect x="499" y="644" width="3" height="1" fill="#830000"/>
<rect x="499" y="643" width="3" height="1" fill="#4cff4c"/>
<rect x="502" y="553" width="4" height="95" fill="#000088"/>
<rect x="502" y="523" width="4" height="30" fill="#830000"/>
<rect x="502" y="512" width="4" height="11" fill="#4cff4c"/>
<rect x="506" y="645" width="3" height="3" fill="#000088"/>
<rect x="506" y="643" width="3" height="2" fill="#830000"/>
<rect x="506" y="642" width="3" height="1" fill="#4cff4c"/>
<rect x="509" y="645" width="3" height="3" fill="#000088"/>
<rect x="509" y="643" width="3" height="2" fill="#830000"/>
<rect x="509" y="641" width="3" height="2" fill="#4cff4c"/>
<rect x="512" y="640" width="3" height="8" fill="#000088"/>
<rect x="512" y="637" width="3" height="3" fill="#830000"/>
<rect x="512" y="635" width="3" height="2" fill="#4cff4c"/>
<rect x="515" y="647" width="3" height="1" fill="#000088"/>
<rect x="515" y="646" width="3" height="1" fill="#830000"/>
<rect x="518" y="641" width="3" height="7" fill="#000088"/>
<rect x="518" y="638" width="3" height="3" fill="#830000"/>
<rect x="518" y="637" width="3" height="1" fill="#4cff4c"/>
<rect x="521" y="638" width="3" height="10" fill="#000088"/>
<rect x="521" y="635" width="3" height="3" fill="#830000"/>
<rect x="521" y="633" width="3" height="2" fill="#4cff4c"/>
<rect x="524" y="639" width="3" height="9" fill="#000088"/>
<rect x="524" y="637" width="3" height="2" fill="#830000"/>
<rect x="524" y="635" width="3" height="2" fill="#4cff4c"/>
<rect x="527" y="644" width="3" height="4" fill="#000088"/>
<rect x="527" y="642" width="3" height="2" fill="#830000"/>
<rect x="527" y="641" width="3" height="1" fill="#4cff4c"/>
<rect x="530" y="644" width="3" height="4" fill="#000088"/>
<rect x="530" y="642" width="3" height="2" fill="#830000"/>
<rect x="530" y="641" width="3" height="1" fill="#4cff4c"/>
<rect x="533" y="572" width="3" height="76" fill="#000088"/>
<rect x="533" y="547" width="3" height="25" fill="#830000"/>
<rect x="533" y="539" width="3" height="8" fill="#4cff4c"/>
<rect x="536" y="628" width="3" height="20" fill="#000088"/>
<rect x="536" y="621" width="3" height="7" fill="#830000"/>
<rect x="536" y="619" width="3" height="2" fill="#4cff4c"/>
<rect x="539" y="641" width="3" height="7" fill="#000088"/>
<rect x="539" y="639" width="3" height="2" fill="#830000"/>
<rect x="539" y="637" width="3" height="2" fill="#4cff4c"/>
<rect x="542" y="637" width="3" height="11" fill="#000088"/>
<rect x="542" y="634" width="3" height="3" fill="#830000"/>
<rect x="542" y="632" width="3" height="2" fill="#4cff4c"/>
<rect x="545" y="640" width="3" height="8" fill="#000088"/>
<rect x="545" y="637" width="3" height="3" fill="#830000"/>
<rect x="545" y="636" width="3" height="1" fill="#4cff4c"/>
<rect x="548" y="641" width="3" height="7" fill="#000088"/>
<rect x="548" y="639" width="3" height="2" fill="#830000"/>
<rect x="548" y="638" width="3" height="1" fill="#4cff4c"/>
<rect x="551" y="645" width="3" height="3" fill="#000088"/>
<rect x="551" y="644" width="3" height="1" fill="#830000"/>
<rect x="551" y="642" width="3" height="2" fill="#4cff4c"/>
<rect x="554" y="647" width="3" height="1" fill="#000088"/>
<rect x="554" y="646" width="3" height="1" fill="#830000"/>
<rect x="554" y="645" width="3" height="1" fill="#4cff4c"/>
<rect x="557" y="587" width="3" height="61" fill="#000088"/>
<rect x="557" y="572" width="3" height="15" fill="#830000"/>
<rect x="557" y="569" width="3" height="3" fill="#4cff4c"/>
<rect x="560" y="647" width="3" height="1" fill="#000088"/>
<rect x="560" y="646" width="3" height="1" fill="#4cff4c"/>
<rect x="563" y="646" width="3" height="2" fill="#000088"/>
<rect x="563" y="645" width="3" height="1" fill="#830000"/>
<rect x="563" y="644" width="3" height="1" fill="#4cff4c"/>
<rect x="566" y="641" width="3" height="7" fill="#000088"/>
<rect x="566" y="639" width="3" height="2" fill="#830000"/>
<rect x="566" y="637" width="3" height="2" fill="#4cff4c"/>
<rect x="569" y="646" width="3" height="2" fill="#000088"/>
<rect x="569" y="645" width="3" height="1" fill="#830000"/>
<rect x="569" y="643" width="3" height="2" fill="#4cff4c"/>
<rect x="572" y="599" width="3" height="49" fill="#000088"/>
<rect x="572" y="584" width="3" height="15" fill="#830000"/>
<rect x="572" y="579" width="3" height="5" fill="#4cff4c"/>
<rect x="575" y="643" width="3" height="5" fill="#000088"/>
<rect x="575" y="641" width="3" height="2" fill="#830000"/>
<rect x="575" y="640" width="3" height="1" fill="#4cff4c"/>
<rect x="578" y="642" width="3" height="6" fill="#000088"/>
<rect x="578" y="641" width="3" height="1" fill="#830000"/>
<rect x="578" y="639" width="3" height="2" fill="#4cff4c"/>
<rect x="581" y="645" width="3" height="3" fill="#000088"/>
<rect x="581" y="644" width="3" height="1" fill="#830000"/>
<rect x="581" y="642" width="3" height="2" fill="#4cff4c"/>
<rect x="584" y="641" width="3" height="7" fill="#000088"/>
<rect x="584" y="638" width="3" height="3" fill="#830000"/>
<rect x="584" y="636" width="3" height="2" fill="#4cff4c"/>
<rect x="587" y="636" width="3" height="12" fill="#000088"/>
<rect x="587" y="631" width="3" height="5" fill="#830000"/>
<rect x="587" y="628" width="3" height="3" fill="#4cff4c"/>
<rect x="590" y="640" width="3" height="8" fill="#000088"/>
<rect x="590" y="636" width="3" height="4" fill="#830000"/>
<rect x="590" y="635" width="3" height="1" fill="#4cff4c"/>
<rect x="593" y="645" width="3" height="3" fill="#000088"/>
<rect x="593" y="644" width="3" height="1" fill="#830000"/>
<rect x="593" y="643" width="3" height="1" fill="#4cff4c"/>
<rect x="596" y="643" width="3" height="5" fill="#000088"/>
<rect x="596" y="641" width="3" height="2" fill="#830000"/>
<rect x="596" y="640" width="3" height="1" fill="#4cff4c"/>
<rect x="599" y="644" width="3" height="4" fill="#000088"/>
<rect x="599" y="643" width="3" height="1" fill="#830000"/>
<rect x="599" y="642" width="3" height="1" fill="#4cff4c"/>
<rect x="602" y="576" width="3" height="72" fill="#000088"/>
<rect x="602" y="553" width="3" height="23" fill="#830000"/>
<rect x="602" y="543" width="3" height="10" fill="#4cff4c"/>
<rect x="605" y="565" width="3" height="83" fill="#000088"/>
<rect x="605" y="537" width="3" height="28" fill="#830000"/>
<rect x="605" y="527" width="3" height="10" fill="#4cff4c"/>
<rect x="608" y="644" width="3" height="4" fill="#000088"/>
<rect x="608" y="642" width="3" height="2" fill="#830000"/>
<rect x="608" y="640" width="3" height="2" fill="#4cff4c"/>
<rect x="611" y="636" width="3" height="12" fill="#000088"/>
<rect x="611" y="632" width="3" height="4" fill="#830000"/>
<rect x="611" y="630" width="3" height="2" fill="#4cff4c"/>
<rect x="614" y="571" width="3" height="77" fill="#000088"/>
<rect x="614" y="544" width="3" height="27" fill="#830000"/>
<rect x="614" y="535" width="3" height="9" fill="#4cff4c"/>
<rect x="617" y="646" width="3" height="2" fill="#000088"/>
<rect x="617" y="644" width="3" height="2" fill="#830000"/>
<rect x="617" y="643" width="3" height="1" fill="#4cff4c"/>
<rect x="620" y="638" width="3" height="10" fill="#000088"/>
<rect x="620" y="635" width="3" height="3" fill="#830000"/>
<rect x="620" y="633" width="3" height="2" fill="#4cff4c"/>
<rect x="623" y="646" width="3" height="2" fill="#000088"/>
<rect x="623" y="644" width="3" height="2" fill="#830000"/>
<rect x="626" y="645" width="3" height="3" fill="#000088"/>
<rect x="626" y="643" width="3" height="2" fill="#830000"/>
<rect x="626" y="642" width="3" height="1" fill="#4cff4c"/>
<rect x="629" y="645" width="3" height="3" fill="#000088"/>
<rect x="629" y="644" width="3" height="1" fill="#830000"/>
<rect x="629" y="643" width="3" height="1" fill="#4cff4c"/>
<rect x="632" y="643" width="3" height="5" fill="#000088"/>
<rect x="632" y="641" width="3" height="2" fill="#830000"/>
<rect x="632" y="640" width="3" height="1" fill="#4cff4c"/>
<rect x="635" y="644" width="3" height="4" fill="#000088"/>
<rect x="635" y="642" width="3" height="2" fill="#830000"/>
<rect x="635" y="641" width="3" height="1" fill="#4cff4c"/>
<rect x="638" y="645" width="3" height="3" fill="#000088"/>
<rect x="638" y="644" width="3" height="1" fill="#830000"/>
<rect x="638" y="642" width="3" height="2" fill="#4cff4c"/>
<rect x="641" y="578" width="3" height="70" fill="#000088"/>
<rect x="641" y="555" width="3" height="23" fill="#830000"/>
<rect x="641" y="550" width="3" height="5" fill="#4cff4c"/>
<rect x="644" y="640" width="3" height="8" fill="#000088"/>
<rect x="644" y="639" width="3" height="1" fill="#830000"/>
<rect x="644" y="637" width="3" height="2" fill="#4cff4c"/>
<rect x="647" y="647" width="3" height="1" fill="#000088"/>
<rect x="650" y="644" width="3" height="4" fill="#000088"/>
<rect x="650" y="643" width="3" height="1" fill="#830000"/>
<rect x="650" y="641" width="3" height="2" fill="#4cff4c"/>
<rect x="653" y="632" width="3" height="16" fill="#000088"/>
<rect x="653" y="626" width="3" height="6" fill="#830000"/>
<rect x="653" y="624" width="3" height="2" fill="#4cff4c"/>
<rect x="656" y="645" width="3" height="3" fill="#000088"/>
<rect x="656" y="643" width="3" height="2" fill="#830000"/>
<rect x="656" y="641" width="3" height="2" fill="#4cff4c"/>
<rect x="659" y="595" width="3" height="53" fill="#000088"/>
<rect x="659" y="577" width="3" height="18" fill="#830000"/>
<rect x="659" y="570" width="3" height="7" fill="#4cff4c"/>
<rect x="662" y="642" width="3" height="6" fill="#000088"/>
<rect x="662" y="640" width="3" height="2" fill="#830000"/>
<rect x="662" y="638" width="3" height="2" fill="#4cff4c"/>
<rect x="665" y="607" width="3" height="41" fill="#000088"/>
<rect x="665" y="595" width="3" height="12" fill="#830000"/>
<rect x="665" y="591" width="3" height="4" fill="#4cff4c"/>
<rect x="668" y="580" width="4" height="68" fill="#000088"/>
<rect x="668" y="558" width="4" height="22" fill="#830000"/>
<rect x="668" y="549" width="4" height="9" fill="#4cff4c"/>
<rect x="672" y="638" width="3" height="10" fill="#000088"/>
<rect x="672" y="635" width="3" height="3" fill="#830000"/>
<rect x="672" y="633" width="3" height="2" fill="#4cff4c"/>
<rect x="675" y="646" width="3" height="2" fill="#000088"/>
<rect x="675" y="645" width="3" height="1" fill="#830000"/>
<rect x="675" y="644" width="3" height="1" fill="#4cff4c"/>
<rect x="678" y="646" width="3" height="2" fill="#000088"/>
<rect x="678" y="644" width="3" height="2" fill="#830000"/>
<rect x="678" y="643" width="3" height="1" fill="#4cff4c"/>
<rect x="681" y="637" width="3" height="11" fill="#000088"/>
<rect x="681" y="634" width="3" height="3" fill="#830000"/>
<rect x="681" y="632" width="3" height="2" fill="#4cff4c"/>
<rect x="684" y="646" width="3" height="2" fill="#000088"/>
<rect x="684" y="645" width="3" height="1" fill="#830000"/>
<rect x="684" y="644" width="3" height="1" fill="#4cff4c"/>
<rect x="687" y="639" width="3" height="9" fill="#000088"/>
<rect x="687" y="636" width="3" height="3" fill="#830000"/>
<rect x="687" y="635" width="3" height="1" fill="#4cff4c"/>
<rect x="690" y="644" width="3" height="4" fill="#000088"/>
<rect x="690" y="642" width="3" height="2" fill="#830000"/>
<rect x="690" y="641" width="3" height="1" fill="#4cff4c"/>
<rect x="693" y="645" width="3" height="3" fill="#000088"/>
<rect x="693" y="644" width="3" height="1" fill="#830000"/>
<rect x="693" y="642" width="3" height="2" fill="#4cff4c"/>
<rect x="696" y="596" width="3" height="52" fill="#000088"/>
<rect x="696" y="577" width="3" height="19" fill="#830000"/>
<rect x="696" y="573" width="3" height="4" fill="#4cff4c"/>
<rect x="699" y="606" width="3" height="42" fill="#000088"/>
<rect x="699" y="593" width="3" height="13" fill="#830000"/>
<rect x="699" y="588" width="3" height="5" fill="#4cff4c"/>
<rect x="702" y="642" width="3" height="6" fill="#000088"/>
<rect x="702" y="639" width="3" height="3" fill="#830000"/>
<rect x="702" y="638" width="3" height="1" fill="#4cff4c"/>
<rect x="705" y="582" width="3" height="66" fill="#000088"/>
<rect x="705" y="561" width="3" height="21" fill="#830000"/>
<rect x="705" y="552" width="3" height="9" fill="#4cff4c"/>
<rect x="708" y="641" width="3" height="7" fill="#000088"/>
<rect x="708" y="638" width="3" height="3" fill="#830000"/>
<rect x="708" y="637" width="3" height="1" fill="#4cff4c"/>
<rect x="711" y="640" width="3" height="8" fill="#000088"/>
<rect x="711" y="638" width="3" height="2" fill="#830000"/>
<rect x="711" y="636" width="3" height="2" fill="#4cff4c"/>
<rect x="714" y="643" width="3" height="5" fill="#000088"/>
<rect x="714" y="641" width="3" height="2" fill="#830000"/>
<rect x="714" y="640" width="3" height="1" fill="#4cff4c"/>
<rect x="717" y="642" width="3" height="6" fill="#000088"/>
<rect x="717" y="640" width="3" height="2" fill="#830000"/>
<rect x="717" y="638" width="3" height="2" fill="#4cff4c"/>
<rect x="720" y="640" width="3" height="8" fill="#000088"/>
<rect x="720" y="636" width="3" height="4" fill="#830000"/>
<rect x="720" y="634" width="3" height="2" fill="#4cff4c"/>
<rect x="723" y="638" width="3" height="10" fill="#000088"/>
<rect x="723" y="634" width="3" height="4" fill="#830000"/>
<rect x="723" y="632" width="3" height="2" fill="#4cff4c"/>
<rect x="726" y="641" width="3" height="7" fill="#000088"/>
<rect x="726" y="639" width="3" height="2" fill="#830000"/>
<rect x="726" y="638" width="3" height="1" fill="#4cff4c"/>
<rect x="729" y="638" width="3" height="10" fill="#000088"/>
<rect x="729" y="634" width="3" height="4" fill="#830000"/>
<rect x="729" y="632" width="3" height="2" fill="#4cff4c"/>
<rect x="732" y="647" width="3" height="1" fill="#000088"/>
<rect x="732" y="646" width="3" height="1" fill="#830000"/>
<rect x="732" y="645" width="3" height="1" fill="#4cff4c"/>
<rect x="735" y="646" width="3" height="2" fill="#000088"/>
<rect x="735" y="645" width="3" height="1" fill="#830000"/>
<rect x="735" y="644" width="3" height="1" fill="#4cff4c"/>
<rect x="738" y="644" width="3" height="4" fill="#000088"/>
<rect x="738" y="643" width="3" height="1" fill="#830000"/>
<rect x="738" y="641" width="3" height="2" fill="#4cff4c"/>
<rect x="741" y="601" width="3" height="47" fill="#000088"/>
<rect x="741" y="585" width="3" height="16" fill="#830000"/>
<rect x="741" y="578" width="3" height="7" fill="#4cff4c"/>
<rect x="744" y="638" width="3" height="10" fill="#000088"/>
<rect x="744" y="634" width="3" height="4" fill="#830000"/>
<rect x="744" y="633" width="3" height="1" fill="#4cff4c"/>
<rect x="747" y="639" width="3" height="9" fill="#000088"/>
<rect x="747" y="636" width="3" height="3" fill="#830000"/>
<rect x="747" y="635" width="3" height="1" fill="#4cff4c"/>
<rect x="750" y="640" width="3" height="8" fill="#000088"/>
<rect x="750" y="638" width="3" height="2" fill="#830000"/>
<rect x="750" y="636" width="3" height="2" fill="#4cff4c"/>
<rect x="753" y="646" width="3" height="2" fill="#000088"/>
<rect x="753" y="645" width="3" height="1" fill="#830000"/>
<rect x="753" y="644" width="3" height="1" fill="#4cff4c"/>
<rect x="756" y="604" width="3" height="44" fill="#000088"/>
<rect x="756" y="595" width="3" height="9" fill="#830000"/>
<rect x="756" y="592" width="3" height="3" fill="#4cff4c"/>
<rect x="759" y="647" width="3" height="1" fill="#000088"/>
<rect x="762" y="644" width="3" height="4" fill="#000088"/>
<rect x="762" y="643" width="3" height="1" fill="#830000"/>
<rect x="762" y="641" width="3" height="2" fill="#4cff4c"/>
<rect x="765" y="573" width="3" height="75" fill="#000088"/>
<rect x="765" y="549" width="3" height="24" fill="#830000"/>
<rect x="765" y="541" width="3" height="8" fill="#4cff4c"/>
<rect x="768" y="646" width="3" height="2" fill="#000088"/>
<rect x="768" y="644" width="3" height="2" fill="#830000"/>
<rect x="768" y="643" width="3" height="1" fill="#4cff4c"/>
<rect x="771" y="643" width="3" height="5" fill="#000088"/>
<rect x="771" y="642" width="3" height="1" fill="#830000"/>
<rect x="771" y="640" width="3" height="2" fill="#4cff4c"/>
<rect x="774" y="560" width="3" height="88" fill="#000088"/>
<rect x="774" y="533" width="3" height="27" fill="#830000"/>
<rect x="774" y="523" width="3" height="10" fill="#4cff4c"/>
<rect x="777" y="559" width="3" height="89" fill="#000088"/>
<rect x="777" y="533" width="3" height="26" fill="#830000"/>
<rect x="777" y="525" width="3" height="8" fill="#4cff4c"/>
<rect x="780" y="600" width="3" height="48" fill="#000088"/>
<rect x="780" y="584" width="3" height="16" fill="#830000"/>
<rect x="780" y="576" width="3" height="8" fill="#4cff4c"/>
<rect x="783" y="639" width="3" height="9" fill="#000088"/>
<rect x="783" y="637" width="3" height="2" fill="#830000"/>
<rect x="783" y="635" width="3" height="2" fill="#4cff4c"/>
<rect x="786" y="608" width="3" height="40" fill="#000088"/>
<rect x="786" y="597" width="3" height="11" fill="#830000"/>
<rect x="786" y="592" width="3" height="5" fill="#4cff4c"/>
<rect x="789" y="645" width="3" height="3" fill="#000088"/>
<rect x="789" y="643" width="3" height="2" fill="#830000"/>
<rect x="789" y="642" width="3" height="1" fill="#4cff4c"/>
<rect x="792" y="645" width="3" height="3" fill="#000088"/>
<rect x="792" y="644" width="3" height="1" fill="#830000"/>
<rect x="792" y="642" width="3" height="2" fill="#4cff4c"/>
<rect x="795" y="645" width="3" height="3" fill="#000088"/>
<rect x="795" y="644" width="3" height="1" fill="#830000"/>
<rect x="795" y="642" width="3" height="2" fill="#4cff4c"/>
<rect x="798" y="609" width="3" height="39" fill="#000088"/>
<rect x="798" y="599" width="3" height="10" fill="#830000"/>
<rect x="798" y="595" width="3" height="4" fill="#4cff4c"/>
<rect x="801" y="447" width="3" height="201" fill="#000088"/>
<rect x="804" y="619" width="3" height="29" fill="#000088"/>
<rect x="804" y="608" width="3" height="11" fill="#830000"/>
<rect x="804" y="603" width="3" height="5" fill="#4cff4c"/>
<rect x="807" y="640" width="3" height="8" fill="#000088"/>
<rect x="807" y="638" width="3" height="2" fill="#830000"/>
<rect x="807" y="636" width="3" height="2" fill="#4cff4c"/>
<rect x="810" y="634" width="3" height="14" fill="#000088"/>
<rect x="810" y="630" width="3" height="4" fill="#830000"/>
<rect x="810" y="627" width="3" height="3" fill="#4cff4c"/>
<rect x="813" y="636" width="3" height="12" fill="#000088"/>
<rect x="813" y="633" width="3" height="3" fill="#830000"/>
<rect x="813" y="631" width="3" height="2" fill="#4cff4c"/>
<rect x="816" y="644" width="3" height="4" fill="#000088"/>
<rect x="816" y="643" width="3" height="1" fill="#830000"/>
<rect x="816" y="642" width="3" height="1" fill="#4cff4c"/>
<rect x="819" y="647" width="3" height="1" fill="#000088"/>
<rect x="819" y="646" width="3" height="1" fill="#4cff4c"/>
<rect x="822" y="645" width="3" height="3" fill="#000088"/>
<rect x="822" y="644" width="3" height="1" fill="#830000"/>
<rect x="822" y="643" width="3" height="1" fill="#4cff4c"/>
<rect x="825" y="645" width="3" height="3" fill="#000088"/>
<rect x="825" y="644" width="3" height="1" fill="#830000"/>
<rect x="825" y="643" width="3" height="1" fill="#4cff4c"/>
<rect x="828" y="644" width="3" height="4" fill="#000088"/>
<rect x="828" y="642" width="3" height="2" fill="#830000"/>
<rect x="828" y="641" width="3" height="1" fill="#4cff4c"/>
<rect x="831" y="644" width="3" height="4" fill="#000088"/>
<rect x="831" y="643" width="3" height="1" fill="#830000"/>
<rect x="831" y="641" width="3" height="2" fill="#4cff4c"/>
<rect x="834" y="646" width="3" height="2" fill="#000088"/>
<rect x="834" y="645" width="3" height="1" fill="#830000"/>
<rect x="834" y="644" width="3" height="1" fill="#4cff4c"/>
<rect x="837" y="640" width="3" height="8" fill="#000088"/>
<rect x="837" y="638" width="3" height="2" fill="#830000"/>
<rect x="837" y="637" width="3" height="1" fill="#4cff4c"/>
<rect x="840" y="636" width="4" height="12" fill="#000088"/>
<rect x="840" y="631" width="4" height="5" fill="#830000"/>
<rect x="840" y="630" width="4" height="1" fill="#4cff4c"/>
<rect x="844" y="569" width="3" height="79" fill="#000088"/>
<rect x="844" y="542" width="3" height="27" fill="#830000"/>
<rect x="844" y="530" width="3" height="12" fill="#4cff4c"/>
<rect x="847" y="645" width="3" height="3" fill="#000088"/>
<rect x="847" y="644" width="3" height="1" fill="#830000"/>
<rect x="847" y="643" width="3" height="1" fill="#4cff4c"/>
<rect x="850" y="646" width="3" height="2" fill="#000088"/>
<rect x="850" y="645" width="3" height="1" fill="#830000"/>
<rect x="850" y="644" width="3" height="1" fill="#4cff4c"/>
<rect x="853" y="644" width="3" height="4" fill="#000088"/>
<rect x="853" y="642" width="3" height="2" fill="#830000"/>
<rect x="853" y="641" width="3" height="1" fill="#4cff4c"/>
<rect x="856" y="639" width="3" height="9" fill="#000088"/>
<rect x="856" y="637" width="3" height="2" fill="#830000"/>
<rect x="856" y="635" width="3" height="2" fill="#4cff4c"/>
<rect x="859" y="646" width="3" height="2" fill="#000088"/>
<rect x="859" y="645" width="3" height="1" fill="#830000"/>
<rect x="859" y="644" width="3" height="1" fill="#4cff4c"/>
<rect x="862" y="643" width="3" height="5" fill="#000088"/>
<rect x="862" y="641" width="3" height="2" fill="#830000"/>
<rect x="862" y="639" width="3" height="2" fill="#4cff4c"/>
<rect x="865" y="643" width="3" height="5" fill="#000088"/>
<rect x="865" y="641" width="3" height="2" fill="#830000"/>
<rect x="865" y="639" width="3" height="2" fill="#4cff4c"/>
<rect x="868" y="634" width="3" height="14" fill="#000088"/>
<rect x="868" y="629" width="3" height="5" fill="#830000"/>
<rect x="868" y="628" width="3" height="1" fill="#4cff4c"/>
<rect x="871" y="641" width="3" height="7" fill="#000088"/>
<rect x="871" y="638" width="3" height="3" fill="#830000"/>
<rect x="871" y="637" width="3" height="1" fill="#4cff4c"/>
<rect x="874" y="644" width="3" height="4" fill="#000088"/>
<rect x="874" y="643" width="3" height="1" fill="#830000"/>
<rect x="874" y="641" width="3" height="2" fill="#4cff4c"/>
<rect x="877" y="643" width="3" height="5" fill="#000088"/>
<rect x="877" y="642" width="3" height="1" fill="#830000"/>
<rect x="877" y="640" width="3" height="2" fill="#4cff4c"/>
<rect x="880" y="645" width="3" height="3" fill="#000088"/>
<rect x="880" y="644" width="3" height="1" fill="#830000"/>
<rect x="880" y="642" width="3" height="2" fill="#4cff4c"/>
<rect x="883" y="606" width="3" height="42" fill="#000088"/>
<rect x="883" y="591" width="3" height="15" fill="#830000"/>
<rect x="883" y="585" width="3" height="6" fill="#4cff4c"/>
<rect x="886" y="645" width="3" height="3" fill="#000088"/>
<rect x="886" y="644" width="3" height="1" fill="#830000"/>
<rect x="886" y="642" width="3" height="2" fill="#4cff4c"/>
<rect x="889" y="647" width="3" height="1" fill="#000088"/>
<rect x="889" y="645" width="3" height="2" fill="#830000"/>
<rect x="892" y="590" width="3" height="58" fill="#000088"/>
<rect x="892" y="568" width="3" height="22" fill="#830000"/>
<rect x="892" y="563" width="3" height="5" fill="#4cff4c"/>
<rect x="895" y="646" width="3" height="2" fill="#000088"/>
<rect x="895" y="645" width="3" height="1" fill="#830000"/>
<rect x="895" y="644" width="3" height="1" fill="#4cff4c"/>
<rect x="898" y="643" width="3" height="5" fill="#000088"/>
<rect x="898" y="642" width="3" height="1" fill="#830000"/>
<rect x="898" y="639" width="3" height="3" fill="#4cff4c"/>
<rect x="901" y="644" width="3" height="4" fill="#000088"/>
<rect x="901" y="642" width="3" height="2" fill="#830000"/>
<rect x="901" y="641" width="3" height="1" fill="#4cff4c"/>
<rect x="904" y="637" width="3" height="11" fill="#000088"/>
<rect x="904" y="634" width="3" height="3" fill="#830000"/>
<rect x="904" y="633" width="3" height="1" fill="#4cff4c"/>
<rect x="907" y="642" width="3" height="6" fill="#000088"/>
<rect x="907" y="641" width="3" height="1" fill="#830000"/>
<rect x="907" y="638" width="3" height="3" fill="#4cff4c"/>
<rect x="910" y="646" width="3" height="2" fill="#000088"/>
<rect x="910" y="645" width="3" height="1" fill="#830000"/>
<rect x="910" y="644" width="3" height="1" fill="#4cff4c"/>
<rect x="913" y="645" width="3" height="3" fill="#000088"/>
<rect x="913" y="644" width="3" height="1" fill="#830000"/>
<rect x="913" y="641" width="3" height="3" fill="#4cff4c"/>
<rect x="916" y="647" width="3" height="1" fill="#000088"/>
<rect x="916" y="646" width="3" height="1" fill="#830000"/>
<rect x="916" y="645" width="3" height="1" fill="#4cff4c"/>
<rect x="919" y="639" width="3" height="9" fill="#000088"/>
<rect x="919" y="636" width="3" height="3" fill="#830000"/>
<rect x="919" y="633" width="3" height="3" fill="#4cff4c"/>
<rect x="922" y="643" width="3" height="5" fill="#000088"/>
<rect x="922" y="641" width="3" height="2" fill="#830000"/>
<rect x="922" y="639" width="3" height="2" fill="#4cff4c"/>
<rect x="925" y="647" width="3" height="1" fill="#830000"/>
<rect x="928" y="647" width="3" height="1" fill="#000088"/>
<rect x="928" y="646" width="3" height="1" fill="#4cff4c"/>
<rect x="931" y="643" width="3" height="5" fill="#000088"/>
<rect x="931" y="640" width="3" height="3" fill="#830000"/>
<rect x="931" y="639" width="3" height="1" fill="#4cff4c"/>
<rect x="934" y="647" width="3" height="1" fill="#000088"/>
<rect x="934" y="646" width="3" height="1" fill="#4cff4c"/>
<rect x="937" y="647" width="3" height="1" fill="#000088"/>
<rect x="937" y="646" width="3" height="1" fill="#4cff4c"/>
</g>
<text transform="translate(259.7,44.5) rotate(-90)" font-size="8.6" font-weight="bold" fill="#fff" dominant-baseline="middle">8205</text>
<text transform="translate(259.7,473.5) rotate(-90)" font-size="8.6" font-weight="bold" fill="#fff" dominant-baseline="middle">275</text>
<text transform="translate(335.7,44.5) rotate(-90)" font-size="8.6" font-weight="bold" fill="#fff" dominant-baseline="middle">5353</text>
<text transform="translate(335.7,473.5) rotate(-90)" font-size="8.6" font-weight="bold" fill="#fff" dominant-baseline="middle">184</text>
<text transform="translate(347.7,44.5) rotate(-90)" font-size="8.6" font-weight="bold" fill="#fff" dominant-baseline="middle">1154</text>
<text transform="translate(347.7,473.5) rotate(-90)" font-size="8.6" font-weight="bold" fill="#fff" dominant-baseline="middle">125</text>
<text transform="translate(356.7,44.5) rotate(-90)" font-size="8.6" font-weight="bold" fill="#fff" dominant-baseline="middle">3745</text>
<text transform="translate(356.7,473.5) rotate(-90)" font-size="8.6" font-weight="bold" fill="#fff" dominant-baseline="middle">120</text>
<text transform="translate(434.7,44.5) rotate(-90)" font-size="8.6" font-weight="bold" fill="#fff" dominant-baseline="middle">8115</text>
<text transform="translate(434.7,473.5) rotate(-90)" font-size="8.6" font-weight="bold" fill="#fff" dominant-baseline="middle">274</text>
<text transform="translate(802.7,44.5) rotate(-90)" font-size="8.6" font-weight="bold" fill="#fff" dominant-baseline="middle">4384</text>
<text transform="translate(802.7,473.5) rotate(-90)" font-size="8.6" font-weight="bold" fill="#fff" dominant-baseline="middle">147</text>
<path d="M66.5 14.5H941.5V216.5H66.5Z" fill="none" stroke="#000" stroke-width="1"/>
<path d="M66.5 230.5H941.5V432.5H66.5Z" fill="none" stroke="#000" stroke-width="1"/>
<path d="M67.5 446.5H941.5V648.5H67.5Z" fill="none" stroke="#000" stroke-width="1"/>
<text x="62.4" y="220.8" font-size="11.5" text-anchor="end" fill="#000">0</text>
<text x="62.4" y="188.8" font-size="11.5" text-anchor="end" fill="#000">500</text>
<text x="62.4" y="156.8" font-size="11.5" text-anchor="end" fill="#000">1000</text>
<text x="62.4" y="124.8" font-size="11.5" text-anchor="end" fill="#000">1500</text>
<text x="62.4" y="92.8" font-size="11.5" text-anchor="end" fill="#000">2000</text>
<text x="62.4" y="61.8" font-size="11.5" text-anchor="end" fill="#000">2500</text>
<text x="62.4" y="29.8" font-size="11.5" text-anchor="end" fill="#000">3000</text>
<text x="62.4" y="436.8" font-size="11.5" text-anchor="end" fill="#000">0</text>
<text x="62.4" y="406.8" font-size="11.5" text-anchor="end" fill="#000">5</text>
<text x="62.4" y="376.8" font-size="11.5" text-anchor="end" fill="#000">10</text>
<text x="62.4" y="345.8" font-size="11.5" text-anchor="end" fill="#000">15</text>
<text x="62.4" y="315.8" font-size="11.5" text-anchor="end" fill="#000">20</text>
<text x="62.4" y="285.8" font-size="11.5" text-anchor="end" fill="#000">25</text>
<text x="62.4" y="255.8" font-size="11.5" text-anchor="end" fill="#000">30</text>
<text x="62.4" y="652.4" font-size="11.5" text-anchor="end" fill="#000">0</text>
<text x="62.4" y="614.8" font-size="11.5" text-anchor="end" fill="#000">20</text>
<text x="62.4" y="577.2" font-size="11.5" text-anchor="end" fill="#000">40</text>
<text x="62.4" y="539.7" font-size="11.5" text-anchor="end" fill="#000">60</text>
<text x="62.4" y="502.1" font-size="11.5" text-anchor="end" fill="#000">80</text>
<text x="62.4" y="464.5" font-size="11.5" text-anchor="end" fill="#000">100</text>
<text transform="translate(26.6,115.9) rotate(-90) scale(0.93,1)" font-size="20.5" text-anchor="middle" fill="#000" stroke="#000" stroke-width="0.6">#&#160;mutations</text>
<text transform="translate(37.1,333.5) rotate(-90) scale(0.93,1)" font-size="20.5" text-anchor="middle" fill="#000" stroke="#000" stroke-width="0.6">Mb sequenced</text>
<text transform="translate(32.2,549.7) rotate(-90) scale(0.93,1)" font-size="20.5" text-anchor="middle" fill="#000" stroke="#000" stroke-width="0.6">mutations / Mb</text>
<text x="818" y="39.8" font-size="14.5" font-weight="bold" fill="#4cff4c">dbSNP</text>
<text x="818" y="59.7" font-size="14.5" font-weight="bold" fill="#830000">silent</text>
<text x="818" y="79.7" font-size="14.5" font-weight="bold" fill="#000088">nonsilent</text>
<g shape-rendering="crispEdges" fill="#000">
<rect x="64" y="667" width="875" height="2"/>
<rect x="64" y="673" width="880" height="1"/>
<rect x="64" y="679" width="880" height="1"/>
<rect x="69" y="669" width="2" height="4"/>
<rect x="70" y="674" width="1" height="5"/>
<rect x="70" y="680" width="1" height="8"/>
<rect x="72" y="669" width="2" height="4"/>
<rect x="73" y="674" width="1" height="5"/>
<rect x="73" y="680" width="1" height="8"/>
<rect x="75" y="669" width="2" height="4"/>
<rect x="76" y="674" width="1" height="5"/>
<rect x="76" y="680" width="1" height="8"/>
<rect x="78" y="669" width="2" height="4"/>
<rect x="79" y="674" width="1" height="5"/>
<rect x="79" y="680" width="1" height="8"/>
<rect x="81" y="669" width="2" height="4"/>
<rect x="82" y="674" width="1" height="5"/>
<rect x="82" y="680" width="1" height="8"/>
<rect x="84" y="669" width="2" height="4"/>
<rect x="85" y="674" width="1" height="5"/>
<rect x="85" y="680" width="1" height="8"/>
<rect x="87" y="669" width="2" height="4"/>
<rect x="88" y="674" width="1" height="5"/>
<rect x="88" y="680" width="1" height="8"/>
<rect x="90" y="669" width="2" height="4"/>
<rect x="91" y="674" width="1" height="5"/>
<rect x="91" y="680" width="1" height="8"/>
<rect x="93" y="669" width="2" height="4"/>
<rect x="94" y="674" width="1" height="5"/>
<rect x="94" y="680" width="1" height="8"/>
<rect x="96" y="669" width="2" height="4"/>
<rect x="97" y="674" width="1" height="5"/>
<rect x="97" y="680" width="1" height="8"/>
<rect x="99" y="669" width="2" height="4"/>
<rect x="100" y="674" width="1" height="5"/>
<rect x="100" y="680" width="1" height="8"/>
<rect x="102" y="669" width="2" height="4"/>
<rect x="103" y="674" width="1" height="5"/>
<rect x="103" y="680" width="1" height="8"/>
<rect x="105" y="669" width="2" height="4"/>
<rect x="106" y="674" width="1" height="5"/>
<rect x="106" y="680" width="1" height="8"/>
<rect x="108" y="669" width="2" height="4"/>
<rect x="109" y="674" width="1" height="5"/>
<rect x="109" y="680" width="1" height="8"/>
<rect x="111" y="669" width="2" height="4"/>
<rect x="112" y="674" width="1" height="5"/>
<rect x="112" y="680" width="1" height="8"/>
<rect x="114" y="669" width="2" height="4"/>
<rect x="115" y="674" width="1" height="5"/>
<rect x="115" y="680" width="1" height="8"/>
<rect x="117" y="669" width="2" height="4"/>
<rect x="118" y="674" width="1" height="5"/>
<rect x="118" y="680" width="1" height="8"/>
<rect x="120" y="669" width="2" height="4"/>
<rect x="121" y="674" width="1" height="5"/>
<rect x="121" y="680" width="1" height="8"/>
<rect x="123" y="669" width="2" height="4"/>
<rect x="124" y="674" width="1" height="5"/>
<rect x="124" y="680" width="1" height="8"/>
<rect x="126" y="669" width="2" height="4"/>
<rect x="127" y="674" width="1" height="5"/>
<rect x="127" y="680" width="1" height="8"/>
<rect x="129" y="669" width="2" height="4"/>
<rect x="130" y="674" width="1" height="5"/>
<rect x="130" y="680" width="1" height="8"/>
<rect x="132" y="669" width="2" height="4"/>
<rect x="133" y="674" width="1" height="5"/>
<rect x="133" y="680" width="1" height="8"/>
<rect x="135" y="669" width="2" height="4"/>
<rect x="136" y="674" width="1" height="5"/>
<rect x="136" y="680" width="1" height="8"/>
<rect x="138" y="669" width="2" height="4"/>
<rect x="139" y="674" width="1" height="5"/>
<rect x="139" y="680" width="1" height="8"/>
<rect x="141" y="669" width="2" height="4"/>
<rect x="142" y="674" width="1" height="5"/>
<rect x="142" y="680" width="1" height="8"/>
<rect x="144" y="669" width="2" height="4"/>
<rect x="145" y="674" width="1" height="5"/>
<rect x="145" y="680" width="1" height="8"/>
<rect x="147" y="669" width="2" height="4"/>
<rect x="148" y="674" width="1" height="5"/>
<rect x="148" y="680" width="1" height="8"/>
<rect x="150" y="669" width="2" height="4"/>
<rect x="151" y="674" width="1" height="5"/>
<rect x="151" y="680" width="1" height="8"/>
<rect x="153" y="669" width="2" height="4"/>
<rect x="154" y="674" width="1" height="5"/>
<rect x="154" y="680" width="1" height="8"/>
<rect x="156" y="669" width="3" height="4"/>
<rect x="158" y="674" width="1" height="5"/>
<rect x="158" y="680" width="1" height="8"/>
<rect x="160" y="669" width="2" height="4"/>
<rect x="161" y="674" width="1" height="5"/>
<rect x="161" y="680" width="1" height="8"/>
<rect x="163" y="669" width="2" height="4"/>
<rect x="164" y="674" width="1" height="5"/>
<rect x="164" y="680" width="1" height="8"/>
<rect x="166" y="669" width="2" height="4"/>
<rect x="167" y="674" width="1" height="5"/>
<rect x="167" y="680" width="1" height="8"/>
<rect x="169" y="669" width="2" height="4"/>
<rect x="170" y="674" width="1" height="5"/>
<rect x="170" y="680" width="1" height="8"/>
<rect x="172" y="669" width="2" height="4"/>
<rect x="173" y="674" width="1" height="5"/>
<rect x="173" y="680" width="1" height="8"/>
<rect x="175" y="669" width="2" height="4"/>
<rect x="176" y="674" width="1" height="5"/>
<rect x="176" y="680" width="1" height="8"/>
<rect x="178" y="669" width="2" height="4"/>
<rect x="179" y="674" width="1" height="5"/>
<rect x="179" y="680" width="1" height="8"/>
<rect x="181" y="669" width="2" height="4"/>
<rect x="182" y="674" width="1" height="5"/>
<rect x="182" y="680" width="1" height="8"/>
<rect x="184" y="669" width="2" height="4"/>
<rect x="185" y="674" width="1" height="5"/>
<rect x="185" y="680" width="1" height="8"/>
<rect x="187" y="669" width="2" height="4"/>
<rect x="188" y="674" width="1" height="5"/>
<rect x="188" y="680" width="1" height="8"/>
<rect x="190" y="669" width="2" height="4"/>
<rect x="191" y="674" width="1" height="5"/>
<rect x="191" y="680" width="1" height="8"/>
<rect x="193" y="669" width="2" height="4"/>
<rect x="194" y="674" width="1" height="5"/>
<rect x="194" y="680" width="1" height="8"/>
<rect x="196" y="669" width="2" height="4"/>
<rect x="197" y="674" width="1" height="5"/>
<rect x="197" y="680" width="1" height="8"/>
<rect x="199" y="669" width="2" height="4"/>
<rect x="200" y="674" width="1" height="5"/>
<rect x="200" y="680" width="1" height="8"/>
<rect x="202" y="669" width="2" height="4"/>
<rect x="203" y="674" width="1" height="5"/>
<rect x="203" y="680" width="1" height="8"/>
<rect x="205" y="669" width="2" height="4"/>
<rect x="206" y="674" width="1" height="5"/>
<rect x="206" y="680" width="1" height="8"/>
<rect x="208" y="669" width="2" height="4"/>
<rect x="209" y="674" width="1" height="5"/>
<rect x="209" y="680" width="1" height="8"/>
<rect x="211" y="669" width="2" height="4"/>
<rect x="212" y="674" width="1" height="5"/>
<rect x="212" y="680" width="1" height="8"/>
<rect x="214" y="669" width="2" height="4"/>
<rect x="215" y="674" width="1" height="5"/>
<rect x="215" y="680" width="1" height="8"/>
<rect x="217" y="669" width="2" height="4"/>
<rect x="218" y="674" width="1" height="5"/>
<rect x="218" y="680" width="1" height="8"/>
<rect x="220" y="669" width="2" height="4"/>
<rect x="221" y="674" width="1" height="5"/>
<rect x="221" y="680" width="1" height="8"/>
<rect x="223" y="669" width="2" height="4"/>
<rect x="224" y="674" width="1" height="5"/>
<rect x="224" y="680" width="1" height="8"/>
<rect x="226" y="669" width="2" height="4"/>
<rect x="227" y="674" width="1" height="5"/>
<rect x="227" y="680" width="1" height="8"/>
<rect x="229" y="669" width="2" height="4"/>
<rect x="230" y="674" width="1" height="5"/>
<rect x="230" y="680" width="1" height="8"/>
<rect x="232" y="669" width="2" height="4"/>
<rect x="233" y="674" width="1" height="5"/>
<rect x="233" y="680" width="1" height="8"/>
<rect x="235" y="669" width="2" height="4"/>
<rect x="236" y="674" width="1" height="5"/>
<rect x="236" y="680" width="1" height="8"/>
<rect x="238" y="669" width="2" height="4"/>
<rect x="239" y="674" width="1" height="5"/>
<rect x="239" y="680" width="1" height="8"/>
<rect x="241" y="669" width="2" height="4"/>
<rect x="242" y="674" width="1" height="5"/>
<rect x="242" y="680" width="1" height="8"/>
<rect x="244" y="669" width="2" height="4"/>
<rect x="245" y="674" width="1" height="5"/>
<rect x="245" y="680" width="1" height="8"/>
<rect x="247" y="669" width="2" height="4"/>
<rect x="248" y="674" width="1" height="5"/>
<rect x="248" y="680" width="1" height="8"/>
<rect x="250" y="669" width="2" height="4"/>
<rect x="251" y="674" width="1" height="5"/>
<rect x="251" y="680" width="1" height="8"/>
<rect x="253" y="669" width="2" height="4"/>
<rect x="254" y="674" width="1" height="5"/>
<rect x="254" y="680" width="1" height="8"/>
<rect x="256" y="669" width="2" height="4"/>
<rect x="257" y="674" width="1" height="5"/>
<rect x="257" y="680" width="1" height="8"/>
<rect x="259" y="669" width="2" height="4"/>
<rect x="260" y="674" width="1" height="5"/>
<rect x="260" y="680" width="1" height="8"/>
<rect x="262" y="669" width="2" height="4"/>
<rect x="263" y="674" width="1" height="5"/>
<rect x="263" y="680" width="1" height="8"/>
<rect x="265" y="669" width="2" height="4"/>
<rect x="266" y="674" width="1" height="5"/>
<rect x="266" y="680" width="1" height="8"/>
<rect x="268" y="669" width="2" height="4"/>
<rect x="269" y="674" width="1" height="5"/>
<rect x="269" y="680" width="1" height="8"/>
<rect x="271" y="669" width="2" height="4"/>
<rect x="272" y="674" width="1" height="5"/>
<rect x="272" y="680" width="1" height="8"/>
<rect x="274" y="669" width="2" height="4"/>
<rect x="275" y="674" width="1" height="5"/>
<rect x="275" y="680" width="1" height="8"/>
<rect x="277" y="669" width="2" height="4"/>
<rect x="278" y="674" width="1" height="5"/>
<rect x="278" y="680" width="1" height="8"/>
<rect x="280" y="669" width="2" height="4"/>
<rect x="281" y="674" width="1" height="5"/>
<rect x="281" y="680" width="1" height="8"/>
<rect x="283" y="669" width="2" height="4"/>
<rect x="284" y="674" width="1" height="5"/>
<rect x="284" y="680" width="1" height="8"/>
<rect x="286" y="669" width="2" height="4"/>
<rect x="287" y="674" width="1" height="5"/>
<rect x="287" y="680" width="1" height="8"/>
<rect x="289" y="669" width="2" height="4"/>
<rect x="290" y="674" width="1" height="5"/>
<rect x="290" y="680" width="1" height="8"/>
<rect x="292" y="669" width="2" height="4"/>
<rect x="293" y="674" width="1" height="5"/>
<rect x="293" y="680" width="1" height="8"/>
<rect x="295" y="669" width="2" height="4"/>
<rect x="296" y="674" width="1" height="5"/>
<rect x="296" y="680" width="1" height="8"/>
<rect x="298" y="669" width="2" height="4"/>
<rect x="299" y="674" width="1" height="5"/>
<rect x="299" y="680" width="1" height="8"/>
<rect x="301" y="669" width="2" height="4"/>
<rect x="302" y="674" width="1" height="5"/>
<rect x="302" y="680" width="1" height="8"/>
<rect x="304" y="669" width="2" height="4"/>
<rect x="305" y="674" width="1" height="5"/>
<rect x="305" y="680" width="1" height="8"/>
<rect x="307" y="669" width="2" height="4"/>
<rect x="308" y="674" width="1" height="5"/>
<rect x="308" y="680" width="1" height="8"/>
<rect x="310" y="669" width="2" height="4"/>
<rect x="311" y="674" width="1" height="5"/>
<rect x="311" y="680" width="1" height="8"/>
<rect x="313" y="669" width="2" height="4"/>
<rect x="314" y="674" width="1" height="5"/>
<rect x="314" y="680" width="1" height="8"/>
<rect x="316" y="669" width="2" height="4"/>
<rect x="317" y="674" width="1" height="5"/>
<rect x="317" y="680" width="1" height="8"/>
<rect x="319" y="669" width="2" height="4"/>
<rect x="320" y="674" width="1" height="5"/>
<rect x="320" y="680" width="1" height="8"/>
<rect x="322" y="669" width="2" height="4"/>
<rect x="323" y="674" width="1" height="5"/>
<rect x="323" y="680" width="1" height="8"/>
<rect x="325" y="669" width="2" height="4"/>
<rect x="326" y="674" width="1" height="5"/>
<rect x="326" y="680" width="1" height="8"/>
<rect x="328" y="669" width="3" height="4"/>
<rect x="330" y="674" width="1" height="5"/>
<rect x="330" y="680" width="1" height="8"/>
<rect x="332" y="669" width="2" height="4"/>
<rect x="333" y="674" width="1" height="5"/>
<rect x="333" y="680" width="1" height="8"/>
<rect x="335" y="669" width="2" height="4"/>
<rect x="336" y="674" width="1" height="5"/>
<rect x="336" y="680" width="1" height="8"/>
<rect x="338" y="669" width="2" height="4"/>
<rect x="339" y="674" width="1" height="5"/>
<rect x="339" y="680" width="1" height="8"/>
<rect x="341" y="669" width="2" height="4"/>
<rect x="342" y="674" width="1" height="5"/>
<rect x="342" y="680" width="1" height="8"/>
<rect x="344" y="669" width="2" height="4"/>
<rect x="345" y="674" width="1" height="5"/>
<rect x="345" y="680" width="1" height="8"/>
<rect x="347" y="669" width="2" height="4"/>
<rect x="348" y="674" width="1" height="5"/>
<rect x="348" y="680" width="1" height="8"/>
<rect x="350" y="669" width="2" height="4"/>
<rect x="351" y="674" width="1" height="5"/>
<rect x="351" y="680" width="1" height="8"/>
<rect x="353" y="669" width="2" height="4"/>
<rect x="354" y="674" width="1" height="5"/>
<rect x="354" y="680" width="1" height="8"/>
<rect x="356" y="669" width="2" height="4"/>
<rect x="357" y="674" width="1" height="5"/>
<rect x="357" y="680" width="1" height="8"/>
<rect x="359" y="669" width="2" height="4"/>
<rect x="360" y="674" width="1" height="5"/>
<rect x="360" y="680" width="1" height="8"/>
<rect x="362" y="669" width="2" height="4"/>
<rect x="363" y="674" width="1" height="5"/>
<rect x="363" y="680" width="1" height="8"/>
<rect x="365" y="669" width="2" height="4"/>
<rect x="366" y="674" width="1" height="5"/>
<rect x="366" y="680" width="1" height="8"/>
<rect x="368" y="669" width="2" height="4"/>
<rect x="369" y="674" width="1" height="5"/>
<rect x="369" y="680" width="1" height="8"/>
<rect x="371" y="669" width="2" height="4"/>
<rect x="372" y="674" width="1" height="5"/>
<rect x="372" y="680" width="1" height="8"/>
<rect x="374" y="669" width="2" height="4"/>
<rect x="375" y="674" width="1" height="5"/>
<rect x="375" y="680" width="1" height="8"/>
<rect x="377" y="669" width="2" height="4"/>
<rect x="378" y="674" width="1" height="5"/>
<rect x="378" y="680" width="1" height="8"/>
<rect x="380" y="669" width="2" height="4"/>
<rect x="381" y="674" width="1" height="5"/>
<rect x="381" y="680" width="1" height="8"/>
<rect x="383" y="669" width="2" height="4"/>
<rect x="384" y="674" width="1" height="5"/>
<rect x="384" y="680" width="1" height="8"/>
<rect x="386" y="669" width="2" height="4"/>
<rect x="387" y="674" width="1" height="5"/>
<rect x="387" y="680" width="1" height="8"/>
<rect x="389" y="669" width="2" height="4"/>
<rect x="390" y="674" width="1" height="5"/>
<rect x="390" y="680" width="1" height="8"/>
<rect x="392" y="669" width="2" height="4"/>
<rect x="393" y="674" width="1" height="5"/>
<rect x="393" y="680" width="1" height="8"/>
<rect x="395" y="669" width="2" height="4"/>
<rect x="396" y="674" width="1" height="5"/>
<rect x="396" y="680" width="1" height="8"/>
<rect x="398" y="669" width="2" height="4"/>
<rect x="399" y="674" width="1" height="5"/>
<rect x="399" y="680" width="1" height="8"/>
<rect x="401" y="669" width="2" height="4"/>
<rect x="402" y="674" width="1" height="5"/>
<rect x="402" y="680" width="1" height="8"/>
<rect x="404" y="669" width="2" height="4"/>
<rect x="405" y="674" width="1" height="5"/>
<rect x="405" y="680" width="1" height="8"/>
<rect x="407" y="669" width="2" height="4"/>
<rect x="408" y="674" width="1" height="5"/>
<rect x="408" y="680" width="1" height="8"/>
<rect x="410" y="669" width="2" height="4"/>
<rect x="411" y="674" width="1" height="5"/>
<rect x="411" y="680" width="1" height="8"/>
<rect x="413" y="669" width="2" height="4"/>
<rect x="414" y="674" width="1" height="5"/>
<rect x="414" y="680" width="1" height="8"/>
<rect x="416" y="669" width="2" height="4"/>
<rect x="417" y="674" width="1" height="5"/>
<rect x="417" y="680" width="1" height="8"/>
<rect x="419" y="669" width="2" height="4"/>
<rect x="420" y="674" width="1" height="5"/>
<rect x="420" y="680" width="1" height="8"/>
<rect x="422" y="669" width="2" height="4"/>
<rect x="423" y="674" width="1" height="5"/>
<rect x="423" y="680" width="1" height="8"/>
<rect x="425" y="669" width="2" height="4"/>
<rect x="426" y="674" width="1" height="5"/>
<rect x="426" y="680" width="1" height="8"/>
<rect x="428" y="669" width="2" height="4"/>
<rect x="429" y="674" width="1" height="5"/>
<rect x="429" y="680" width="1" height="8"/>
<rect x="431" y="669" width="2" height="4"/>
<rect x="432" y="674" width="1" height="5"/>
<rect x="432" y="680" width="1" height="8"/>
<rect x="434" y="669" width="2" height="4"/>
<rect x="435" y="674" width="1" height="5"/>
<rect x="435" y="680" width="1" height="8"/>
<rect x="437" y="669" width="2" height="4"/>
<rect x="438" y="674" width="1" height="5"/>
<rect x="438" y="680" width="1" height="8"/>
<rect x="440" y="669" width="2" height="4"/>
<rect x="441" y="674" width="1" height="5"/>
<rect x="441" y="680" width="1" height="8"/>
<rect x="443" y="669" width="2" height="4"/>
<rect x="444" y="674" width="1" height="5"/>
<rect x="444" y="680" width="1" height="8"/>
<rect x="446" y="669" width="2" height="4"/>
<rect x="447" y="674" width="1" height="5"/>
<rect x="447" y="680" width="1" height="8"/>
<rect x="449" y="669" width="2" height="4"/>
<rect x="450" y="674" width="1" height="5"/>
<rect x="450" y="680" width="1" height="8"/>
<rect x="452" y="669" width="2" height="4"/>
<rect x="453" y="674" width="1" height="5"/>
<rect x="453" y="680" width="1" height="8"/>
<rect x="455" y="669" width="2" height="4"/>
<rect x="456" y="674" width="1" height="5"/>
<rect x="456" y="680" width="1" height="8"/>
<rect x="458" y="669" width="2" height="4"/>
<rect x="459" y="674" width="1" height="5"/>
<rect x="459" y="680" width="1" height="8"/>
<rect x="461" y="669" width="2" height="4"/>
<rect x="462" y="674" width="1" height="5"/>
<rect x="462" y="680" width="1" height="8"/>
<rect x="464" y="669" width="2" height="4"/>
<rect x="465" y="674" width="1" height="5"/>
<rect x="465" y="680" width="1" height="8"/>
<rect x="467" y="669" width="2" height="4"/>
<rect x="468" y="674" width="1" height="5"/>
<rect x="468" y="680" width="1" height="8"/>
<rect x="470" y="669" width="2" height="4"/>
<rect x="471" y="674" width="1" height="5"/>
<rect x="471" y="680" width="1" height="8"/>
<rect x="473" y="669" width="2" height="4"/>
<rect x="474" y="674" width="1" height="5"/>
<rect x="474" y="680" width="1" height="8"/>
<rect x="476" y="669" width="2" height="4"/>
<rect x="477" y="674" width="1" height="5"/>
<rect x="477" y="680" width="1" height="8"/>
<rect x="479" y="669" width="2" height="4"/>
<rect x="480" y="674" width="1" height="5"/>
<rect x="480" y="680" width="1" height="8"/>
<rect x="482" y="669" width="2" height="4"/>
<rect x="483" y="674" width="1" height="5"/>
<rect x="483" y="680" width="1" height="8"/>
<rect x="485" y="669" width="2" height="4"/>
<rect x="486" y="674" width="1" height="5"/>
<rect x="486" y="680" width="1" height="8"/>
<rect x="488" y="669" width="2" height="4"/>
<rect x="489" y="674" width="1" height="5"/>
<rect x="489" y="680" width="1" height="8"/>
<rect x="491" y="669" width="2" height="4"/>
<rect x="492" y="674" width="1" height="5"/>
<rect x="492" y="680" width="1" height="8"/>
<rect x="494" y="669" width="2" height="4"/>
<rect x="495" y="674" width="1" height="5"/>
<rect x="495" y="680" width="1" height="8"/>
<rect x="497" y="669" width="2" height="4"/>
<rect x="498" y="674" width="1" height="5"/>
<rect x="498" y="680" width="1" height="8"/>
<rect x="500" y="669" width="2" height="4"/>
<rect x="501" y="674" width="1" height="5"/>
<rect x="501" y="680" width="1" height="8"/>
<rect x="503" y="669" width="3" height="4"/>
<rect x="505" y="674" width="1" height="5"/>
<rect x="505" y="680" width="1" height="8"/>
<rect x="507" y="669" width="2" height="4"/>
<rect x="508" y="674" width="1" height="5"/>
<rect x="508" y="680" width="1" height="8"/>
<rect x="510" y="669" width="2" height="4"/>
<rect x="511" y="674" width="1" height="5"/>
<rect x="511" y="680" width="1" height="8"/>
<rect x="513" y="669" width="2" height="4"/>
<rect x="514" y="674" width="1" height="5"/>
<rect x="514" y="680" width="1" height="8"/>
<rect x="516" y="669" width="2" height="4"/>
<rect x="517" y="674" width="1" height="5"/>
<rect x="517" y="680" width="1" height="8"/>
<rect x="519" y="669" width="2" height="4"/>
<rect x="520" y="674" width="1" height="5"/>
<rect x="520" y="680" width="1" height="8"/>
<rect x="522" y="669" width="2" height="4"/>
<rect x="523" y="674" width="1" height="5"/>
<rect x="523" y="680" width="1" height="8"/>
<rect x="525" y="669" width="2" height="4"/>
<rect x="526" y="674" width="1" height="5"/>
<rect x="526" y="680" width="1" height="8"/>
<rect x="528" y="669" width="2" height="4"/>
<rect x="529" y="674" width="1" height="5"/>
<rect x="529" y="680" width="1" height="8"/>
<rect x="531" y="669" width="2" height="4"/>
<rect x="532" y="674" width="1" height="5"/>
<rect x="532" y="680" width="1" height="8"/>
<rect x="534" y="669" width="2" height="4"/>
<rect x="535" y="674" width="1" height="5"/>
<rect x="535" y="680" width="1" height="8"/>
<rect x="537" y="669" width="2" height="4"/>
<rect x="538" y="674" width="1" height="5"/>
<rect x="538" y="680" width="1" height="8"/>
<rect x="540" y="669" width="2" height="4"/>
<rect x="541" y="674" width="1" height="5"/>
<rect x="541" y="680" width="1" height="8"/>
<rect x="543" y="669" width="2" height="4"/>
<rect x="544" y="674" width="1" height="5"/>
<rect x="544" y="680" width="1" height="8"/>
<rect x="546" y="669" width="2" height="4"/>
<rect x="547" y="674" width="1" height="5"/>
<rect x="547" y="680" width="1" height="8"/>
<rect x="549" y="669" width="2" height="4"/>
<rect x="550" y="674" width="1" height="5"/>
<rect x="550" y="680" width="1" height="8"/>
<rect x="552" y="669" width="2" height="4"/>
<rect x="553" y="674" width="1" height="5"/>
<rect x="553" y="680" width="1" height="8"/>
<rect x="555" y="669" width="2" height="4"/>
<rect x="556" y="674" width="1" height="5"/>
<rect x="556" y="680" width="1" height="8"/>
<rect x="558" y="669" width="2" height="4"/>
<rect x="559" y="674" width="1" height="5"/>
<rect x="559" y="680" width="1" height="8"/>
<rect x="561" y="669" width="2" height="4"/>
<rect x="562" y="674" width="1" height="5"/>
<rect x="562" y="680" width="1" height="8"/>
<rect x="564" y="669" width="2" height="4"/>
<rect x="565" y="674" width="1" height="5"/>
<rect x="565" y="680" width="1" height="8"/>
<rect x="567" y="669" width="2" height="4"/>
<rect x="568" y="674" width="1" height="5"/>
<rect x="568" y="680" width="1" height="8"/>
<rect x="570" y="669" width="2" height="4"/>
<rect x="571" y="674" width="1" height="5"/>
<rect x="571" y="680" width="1" height="8"/>
<rect x="573" y="669" width="2" height="4"/>
<rect x="574" y="674" width="1" height="5"/>
<rect x="574" y="680" width="1" height="8"/>
<rect x="576" y="669" width="2" height="4"/>
<rect x="577" y="674" width="1" height="5"/>
<rect x="577" y="680" width="1" height="8"/>
<rect x="579" y="669" width="2" height="4"/>
<rect x="580" y="674" width="1" height="5"/>
<rect x="580" y="680" width="1" height="8"/>
<rect x="582" y="669" width="2" height="4"/>
<rect x="583" y="674" width="1" height="5"/>
<rect x="583" y="680" width="1" height="8"/>
<rect x="585" y="669" width="2" height="4"/>
<rect x="586" y="674" width="1" height="5"/>
<rect x="586" y="680" width="1" height="8"/>
<rect x="588" y="669" width="2" height="4"/>
<rect x="589" y="674" width="1" height="5"/>
<rect x="589" y="680" width="1" height="8"/>
<rect x="591" y="669" width="2" height="4"/>
<rect x="592" y="674" width="1" height="5"/>
<rect x="592" y="680" width="1" height="8"/>
<rect x="594" y="669" width="2" height="4"/>
<rect x="595" y="674" width="1" height="5"/>
<rect x="595" y="680" width="1" height="8"/>
<rect x="597" y="669" width="2" height="4"/>
<rect x="598" y="674" width="1" height="5"/>
<rect x="598" y="680" width="1" height="8"/>
<rect x="600" y="669" width="2" height="4"/>
<rect x="601" y="674" width="1" height="5"/>
<rect x="601" y="680" width="1" height="8"/>
<rect x="603" y="669" width="2" height="4"/>
<rect x="604" y="674" width="1" height="5"/>
<rect x="604" y="680" width="1" height="8"/>
<rect x="606" y="669" width="2" height="4"/>
<rect x="607" y="674" width="1" height="5"/>
<rect x="607" y="680" width="1" height="8"/>
<rect x="609" y="669" width="2" height="4"/>
<rect x="610" y="674" width="1" height="5"/>
<rect x="610" y="680" width="1" height="8"/>
<rect x="612" y="669" width="2" height="4"/>
<rect x="613" y="674" width="1" height="5"/>
<rect x="613" y="680" width="1" height="8"/>
<rect x="615" y="669" width="2" height="4"/>
<rect x="616" y="674" width="1" height="5"/>
<rect x="616" y="680" width="1" height="8"/>
<rect x="618" y="669" width="2" height="4"/>
<rect x="619" y="674" width="1" height="5"/>
<rect x="619" y="680" width="1" height="8"/>
<rect x="621" y="669" width="2" height="4"/>
<rect x="622" y="674" width="1" height="5"/>
<rect x="622" y="680" width="1" height="8"/>
<rect x="624" y="669" width="2" height="4"/>
<rect x="625" y="674" width="1" height="5"/>
<rect x="625" y="680" width="1" height="8"/>
<rect x="627" y="669" width="2" height="4"/>
<rect x="628" y="674" width="1" height="5"/>
<rect x="628" y="680" width="1" height="8"/>
<rect x="630" y="669" width="2" height="4"/>
<rect x="631" y="674" width="1" height="5"/>
<rect x="631" y="680" width="1" height="8"/>
<rect x="633" y="669" width="2" height="4"/>
<rect x="634" y="674" width="1" height="5"/>
<rect x="634" y="680" width="1" height="8"/>
<rect x="636" y="669" width="2" height="4"/>
<rect x="637" y="674" width="1" height="5"/>
<rect x="637" y="680" width="1" height="8"/>
<rect x="639" y="669" width="2" height="4"/>
<rect x="640" y="674" width="1" height="5"/>
<rect x="640" y="680" width="1" height="8"/>
<rect x="642" y="669" width="2" height="4"/>
<rect x="643" y="674" width="1" height="5"/>
<rect x="643" y="680" width="1" height="8"/>
<rect x="645" y="669" width="2" height="4"/>
<rect x="646" y="674" width="1" height="5"/>
<rect x="646" y="680" width="1" height="8"/>
<rect x="648" y="669" width="2" height="4"/>
<rect x="649" y="674" width="1" height="5"/>
<rect x="649" y="680" width="1" height="8"/>
<rect x="651" y="669" width="2" height="4"/>
<rect x="652" y="674" width="1" height="5"/>
<rect x="652" y="680" width="1" height="8"/>
<rect x="654" y="669" width="2" height="4"/>
<rect x="655" y="674" width="1" height="5"/>
<rect x="655" y="680" width="1" height="8"/>
<rect x="657" y="669" width="2" height="4"/>
<rect x="658" y="674" width="1" height="5"/>
<rect x="658" y="680" width="1" height="8"/>
<rect x="660" y="669" width="2" height="4"/>
<rect x="661" y="674" width="1" height="5"/>
<rect x="661" y="680" width="1" height="8"/>
<rect x="663" y="669" width="2" height="4"/>
<rect x="664" y="674" width="1" height="5"/>
<rect x="664" y="680" width="1" height="8"/>
<rect x="666" y="669" width="2" height="4"/>
<rect x="667" y="674" width="1" height="5"/>
<rect x="667" y="680" width="1" height="8"/>
<rect x="669" y="669" width="3" height="4"/>
<rect x="671" y="674" width="1" height="5"/>
<rect x="671" y="680" width="1" height="8"/>
<rect x="673" y="669" width="2" height="4"/>
<rect x="674" y="674" width="1" height="5"/>
<rect x="674" y="680" width="1" height="8"/>
<rect x="676" y="669" width="2" height="4"/>
<rect x="677" y="674" width="1" height="5"/>
<rect x="677" y="680" width="1" height="8"/>
<rect x="679" y="669" width="2" height="4"/>
<rect x="680" y="674" width="1" height="5"/>
<rect x="680" y="680" width="1" height="8"/>
<rect x="682" y="669" width="2" height="4"/>
<rect x="683" y="674" width="1" height="5"/>
<rect x="683" y="680" width="1" height="8"/>
<rect x="685" y="669" width="2" height="4"/>
<rect x="686" y="674" width="1" height="5"/>
<rect x="686" y="680" width="1" height="8"/>
<rect x="688" y="669" width="2" height="4"/>
<rect x="689" y="674" width="1" height="5"/>
<rect x="689" y="680" width="1" height="8"/>
<rect x="691" y="669" width="2" height="4"/>
<rect x="692" y="674" width="1" height="5"/>
<rect x="692" y="680" width="1" height="8"/>
<rect x="694" y="669" width="2" height="4"/>
<rect x="695" y="674" width="1" height="5"/>
<rect x="695" y="680" width="1" height="8"/>
<rect x="697" y="669" width="2" height="4"/>
<rect x="698" y="674" width="1" height="5"/>
<rect x="698" y="680" width="1" height="8"/>
<rect x="700" y="669" width="2" height="4"/>
<rect x="701" y="674" width="1" height="5"/>
<rect x="701" y="680" width="1" height="8"/>
<rect x="703" y="669" width="2" height="4"/>
<rect x="704" y="674" width="1" height="5"/>
<rect x="704" y="680" width="1" height="8"/>
<rect x="706" y="669" width="2" height="4"/>
<rect x="707" y="674" width="1" height="5"/>
<rect x="707" y="680" width="1" height="8"/>
<rect x="709" y="669" width="2" height="4"/>
<rect x="710" y="674" width="1" height="5"/>
<rect x="710" y="680" width="1" height="8"/>
<rect x="712" y="669" width="2" height="4"/>
<rect x="713" y="674" width="1" height="5"/>
<rect x="713" y="680" width="1" height="8"/>
<rect x="715" y="669" width="2" height="4"/>
<rect x="716" y="674" width="1" height="5"/>
<rect x="716" y="680" width="1" height="8"/>
<rect x="718" y="669" width="2" height="4"/>
<rect x="719" y="674" width="1" height="5"/>
<rect x="719" y="680" width="1" height="8"/>
<rect x="721" y="669" width="2" height="4"/>
<rect x="722" y="674" width="1" height="5"/>
<rect x="722" y="680" width="1" height="8"/>
<rect x="724" y="669" width="2" height="4"/>
<rect x="725" y="674" width="1" height="5"/>
<rect x="725" y="680" width="1" height="8"/>
<rect x="727" y="669" width="2" height="4"/>
<rect x="728" y="674" width="1" height="5"/>
<rect x="728" y="680" width="1" height="8"/>
<rect x="730" y="669" width="2" height="4"/>
<rect x="731" y="674" width="1" height="5"/>
<rect x="731" y="680" width="1" height="8"/>
<rect x="733" y="669" width="2" height="4"/>
<rect x="734" y="674" width="1" height="5"/>
<rect x="734" y="680" width="1" height="8"/>
<rect x="736" y="669" width="2" height="4"/>
<rect x="737" y="674" width="1" height="5"/>
<rect x="737" y="680" width="1" height="8"/>
<rect x="739" y="669" width="2" height="4"/>
<rect x="740" y="674" width="1" height="5"/>
<rect x="740" y="680" width="1" height="8"/>
<rect x="742" y="669" width="2" height="4"/>
<rect x="743" y="674" width="1" height="5"/>
<rect x="743" y="680" width="1" height="8"/>
<rect x="745" y="669" width="2" height="4"/>
<rect x="746" y="674" width="1" height="5"/>
<rect x="746" y="680" width="1" height="8"/>
<rect x="748" y="669" width="2" height="4"/>
<rect x="749" y="674" width="1" height="5"/>
<rect x="749" y="680" width="1" height="8"/>
<rect x="751" y="669" width="2" height="4"/>
<rect x="752" y="674" width="1" height="5"/>
<rect x="752" y="680" width="1" height="8"/>
<rect x="754" y="669" width="2" height="4"/>
<rect x="755" y="674" width="1" height="5"/>
<rect x="755" y="680" width="1" height="8"/>
<rect x="757" y="669" width="2" height="4"/>
<rect x="758" y="674" width="1" height="5"/>
<rect x="758" y="680" width="1" height="8"/>
<rect x="760" y="669" width="2" height="4"/>
<rect x="761" y="674" width="1" height="5"/>
<rect x="761" y="680" width="1" height="8"/>
<rect x="763" y="669" width="2" height="4"/>
<rect x="764" y="674" width="1" height="5"/>
<rect x="764" y="680" width="1" height="8"/>
<rect x="766" y="669" width="2" height="4"/>
<rect x="767" y="674" width="1" height="5"/>
<rect x="767" y="680" width="1" height="8"/>
<rect x="769" y="669" width="2" height="4"/>
<rect x="770" y="674" width="1" height="5"/>
<rect x="770" y="680" width="1" height="8"/>
<rect x="772" y="669" width="2" height="4"/>
<rect x="773" y="674" width="1" height="5"/>
<rect x="773" y="680" width="1" height="8"/>
<rect x="775" y="669" width="2" height="4"/>
<rect x="776" y="674" width="1" height="5"/>
<rect x="776" y="680" width="1" height="8"/>
<rect x="778" y="669" width="2" height="4"/>
<rect x="779" y="674" width="1" height="5"/>
<rect x="779" y="680" width="1" height="8"/>
<rect x="781" y="669" width="2" height="4"/>
<rect x="782" y="674" width="1" height="5"/>
<rect x="782" y="680" width="1" height="8"/>
<rect x="784" y="669" width="2" height="4"/>
<rect x="785" y="674" width="1" height="5"/>
<rect x="785" y="680" width="1" height="8"/>
<rect x="787" y="669" width="2" height="4"/>
<rect x="788" y="674" width="1" height="5"/>
<rect x="788" y="680" width="1" height="8"/>
<rect x="790" y="669" width="2" height="4"/>
<rect x="791" y="674" width="1" height="5"/>
<rect x="791" y="680" width="1" height="8"/>
<rect x="793" y="669" width="2" height="4"/>
<rect x="794" y="674" width="1" height="5"/>
<rect x="794" y="680" width="1" height="8"/>
<rect x="796" y="669" width="2" height="4"/>
<rect x="797" y="674" width="1" height="5"/>
<rect x="797" y="680" width="1" height="8"/>
<rect x="799" y="669" width="2" height="4"/>
<rect x="800" y="674" width="1" height="5"/>
<rect x="800" y="680" width="1" height="8"/>
<rect x="802" y="669" width="2" height="4"/>
<rect x="803" y="674" width="1" height="5"/>
<rect x="803" y="680" width="1" height="8"/>
<rect x="805" y="669" width="2" height="4"/>
<rect x="806" y="674" width="1" height="5"/>
<rect x="806" y="680" width="1" height="8"/>
<rect x="808" y="669" width="2" height="4"/>
<rect x="809" y="674" width="1" height="5"/>
<rect x="809" y="680" width="1" height="8"/>
<rect x="811" y="669" width="2" height="4"/>
<rect x="812" y="674" width="1" height="5"/>
<rect x="812" y="680" width="1" height="8"/>
<rect x="814" y="669" width="2" height="4"/>
<rect x="815" y="674" width="1" height="5"/>
<rect x="815" y="680" width="1" height="8"/>
<rect x="817" y="669" width="2" height="4"/>
<rect x="818" y="674" width="1" height="5"/>
<rect x="818" y="680" width="1" height="8"/>
<rect x="820" y="669" width="2" height="4"/>
<rect x="821" y="674" width="1" height="5"/>
<rect x="821" y="680" width="1" height="8"/>
<rect x="823" y="669" width="2" height="4"/>
<rect x="824" y="674" width="1" height="5"/>
<rect x="824" y="680" width="1" height="8"/>
<rect x="826" y="669" width="2" height="4"/>
<rect x="827" y="674" width="1" height="5"/>
<rect x="827" y="680" width="1" height="8"/>
<rect x="829" y="669" width="2" height="4"/>
<rect x="830" y="674" width="1" height="5"/>
<rect x="830" y="680" width="1" height="8"/>
<rect x="832" y="669" width="2" height="4"/>
<rect x="833" y="674" width="1" height="5"/>
<rect x="833" y="680" width="1" height="8"/>
<rect x="835" y="669" width="2" height="4"/>
<rect x="836" y="674" width="1" height="5"/>
<rect x="836" y="680" width="1" height="8"/>
<rect x="838" y="669" width="2" height="4"/>
<rect x="839" y="674" width="1" height="5"/>
<rect x="839" y="680" width="1" height="8"/>
<rect x="841" y="669" width="3" height="4"/>
<rect x="843" y="674" width="1" height="5"/>
<rect x="843" y="680" width="1" height="8"/>
<rect x="845" y="669" width="2" height="4"/>
<rect x="846" y="674" width="1" height="5"/>
<rect x="846" y="680" width="1" height="8"/>
<rect x="848" y="669" width="2" height="4"/>
<rect x="849" y="674" width="1" height="5"/>
<rect x="849" y="680" width="1" height="8"/>
<rect x="851" y="669" width="2" height="4"/>
<rect x="852" y="674" width="1" height="5"/>
<rect x="852" y="680" width="1" height="8"/>
<rect x="854" y="669" width="2" height="4"/>
<rect x="855" y="674" width="1" height="5"/>
<rect x="855" y="680" width="1" height="8"/>
<rect x="857" y="669" width="2" height="4"/>
<rect x="858" y="674" width="1" height="5"/>
<rect x="858" y="680" width="1" height="8"/>
<rect x="860" y="669" width="2" height="4"/>
<rect x="861" y="674" width="1" height="5"/>
<rect x="861" y="680" width="1" height="8"/>
<rect x="863" y="669" width="2" height="4"/>
<rect x="864" y="674" width="1" height="5"/>
<rect x="864" y="680" width="1" height="8"/>
<rect x="866" y="669" width="2" height="4"/>
<rect x="867" y="674" width="1" height="5"/>
<rect x="867" y="680" width="1" height="8"/>
<rect x="869" y="669" width="2" height="4"/>
<rect x="870" y="674" width="1" height="5"/>
<rect x="870" y="680" width="1" height="8"/>
<rect x="872" y="669" width="2" height="4"/>
<rect x="873" y="674" width="1" height="5"/>
<rect x="873" y="680" width="1" height="8"/>
<rect x="875" y="669" width="2" height="4"/>
<rect x="876" y="674" width="1" height="5"/>
<rect x="876" y="680" width="1" height="8"/>
<rect x="878" y="669" width="2" height="4"/>
<rect x="879" y="674" width="1" height="5"/>
<rect x="879" y="680" width="1" height="8"/>
<rect x="881" y="669" width="2" height="4"/>
<rect x="882" y="674" width="1" height="5"/>
<rect x="882" y="680" width="1" height="8"/>
<rect x="884" y="669" width="2" height="4"/>
<rect x="885" y="674" width="1" height="5"/>
<rect x="885" y="680" width="1" height="8"/>
<rect x="887" y="669" width="2" height="4"/>
<rect x="888" y="674" width="1" height="5"/>
<rect x="888" y="680" width="1" height="8"/>
<rect x="890" y="669" width="2" height="4"/>
<rect x="891" y="674" width="1" height="5"/>
<rect x="891" y="680" width="1" height="8"/>
<rect x="893" y="669" width="2" height="4"/>
<rect x="894" y="674" width="1" height="5"/>
<rect x="894" y="680" width="1" height="8"/>
<rect x="896" y="669" width="2" height="4"/>
<rect x="897" y="674" width="1" height="5"/>
<rect x="897" y="680" width="1" height="8"/>
<rect x="899" y="669" width="2" height="4"/>
<rect x="900" y="674" width="1" height="5"/>
<rect x="900" y="680" width="1" height="8"/>
<rect x="902" y="669" width="2" height="4"/>
<rect x="903" y="674" width="1" height="5"/>
<rect x="903" y="680" width="1" height="8"/>
<rect x="905" y="669" width="2" height="4"/>
<rect x="906" y="674" width="1" height="5"/>
<rect x="906" y="680" width="1" height="8"/>
<rect x="908" y="669" width="2" height="4"/>
<rect x="909" y="674" width="1" height="5"/>
<rect x="909" y="680" width="1" height="8"/>
<rect x="911" y="669" width="2" height="4"/>
<rect x="912" y="674" width="1" height="5"/>
<rect x="912" y="680" width="1" height="8"/>
<rect x="914" y="669" width="2" height="4"/>
<rect x="915" y="674" width="1" height="5"/>
<rect x="915" y="680" width="1" height="8"/>
<rect x="917" y="669" width="2" height="4"/>
<rect x="918" y="674" width="1" height="5"/>
<rect x="918" y="680" width="1" height="8"/>
<rect x="920" y="669" width="2" height="4"/>
<rect x="921" y="674" width="1" height="5"/>
<rect x="921" y="680" width="1" height="8"/>
<rect x="923" y="669" width="2" height="4"/>
<rect x="924" y="674" width="1" height="5"/>
<rect x="924" y="680" width="1" height="8"/>
<rect x="926" y="669" width="2" height="4"/>
<rect x="927" y="674" width="1" height="5"/>
<rect x="927" y="680" width="1" height="8"/>
<rect x="929" y="669" width="2" height="4"/>
<rect x="930" y="674" width="1" height="5"/>
<rect x="930" y="680" width="1" height="8"/>
<rect x="932" y="669" width="2" height="4"/>
<rect x="933" y="674" width="1" height="5"/>
<rect x="933" y="680" width="1" height="8"/>
<rect x="935" y="669" width="2" height="4"/>
<rect x="936" y="674" width="1" height="5"/>
<rect x="936" y="680" width="1" height="8"/>
<rect x="938" y="669" width="2" height="4"/>
<rect x="939" y="674" width="1" height="5"/>
<rect x="939" y="680" width="1" height="8"/>
<rect x="64" y="669" width="4" height="4"/>
<rect x="64" y="689" width="880" height="6"/>
<rect x="64" y="697" width="880" height="6"/>
<rect x="64" y="705" width="880" height="6"/>
<rect x="64" y="713" width="880" height="6"/>
</g>
<g shape-rendering="crispEdges" fill="#8f8f8f">
<rect x="66" y="690" width="1" height="4"/>
<rect x="67" y="689" width="1" height="4"/>
<rect x="68" y="690" width="1" height="4"/>
<rect x="71" y="690" width="1" height="2"/>
<rect x="72" y="693" width="1" height="1"/>
<rect x="77" y="693" width="1" height="1"/>
<rect x="78" y="690" width="1" height="1"/>
<rect x="80" y="691" width="3" height="1"/>
<rect x="81" y="693" width="1" height="2"/>
<rect x="82" y="692" width="1" height="2"/>
<rect x="83" y="692" width="1" height="1"/>
<rect x="85" y="689" width="1" height="4"/>
<rect x="87" y="693" width="1" height="2"/>
<rect x="88" y="693" width="1" height="1"/>
<rect x="90" y="692" width="1" height="2"/>
<rect x="91" y="694" width="1" height="1"/>
<rect x="92" y="689" width="1" height="2"/>
<rect x="93" y="692" width="1" height="3"/>
<rect x="94" y="691" width="1" height="2"/>
<rect x="95" y="691" width="1" height="2"/>
<rect x="96" y="689" width="1" height="3"/>
<rect x="97" y="689" width="1" height="1"/>
<rect x="98" y="690" width="1" height="3"/>
<rect x="100" y="689" width="1" height="4"/>
<rect x="103" y="689" width="1" height="3"/>
<rect x="104" y="689" width="1" height="2"/>
<rect x="105" y="690" width="1" height="4"/>
<rect x="107" y="692" width="1" height="2"/>
<rect x="110" y="690" width="2" height="1"/>
<rect x="111" y="689" width="1" height="2"/>
<rect x="113" y="692" width="1" height="2"/>
<rect x="114" y="690" width="1" height="1"/>
<rect x="115" y="689" width="2" height="1"/>
<rect x="117" y="690" width="1" height="3"/>
<rect x="119" y="689" width="1" height="4"/>
<rect x="121" y="691" width="1" height="2"/>
<rect x="124" y="690" width="1" height="2"/>
<rect x="127" y="692" width="1" height="3"/>
<rect x="129" y="689" width="1" height="1"/>
<rect x="130" y="690" width="1" height="2"/>
<rect x="132" y="692" width="1" height="3"/>
<rect x="133" y="689" width="1" height="2"/>
<rect x="134" y="689" width="1" height="3"/>
<rect x="135" y="689" width="1" height="2"/>
<rect x="136" y="692" width="1" height="3"/>
<rect x="137" y="690" width="1" height="1"/>
<rect x="138" y="691" width="1" height="4"/>
<rect x="140" y="692" width="1" height="2"/>
<rect x="144" y="693" width="2" height="1"/>
<rect x="145" y="692" width="1" height="1"/>
<rect x="149" y="692" width="1" height="1"/>
<rect x="150" y="691" width="1" height="2"/>
<rect x="151" y="689" width="1" height="1"/>
<rect x="152" y="689" width="1" height="2"/>
<rect x="158" y="689" width="1" height="3"/>
<rect x="160" y="692" width="1" height="1"/>
<rect x="161" y="694" width="4" height="1"/>
<rect x="162" y="689" width="1" height="4"/>
<rect x="164" y="691" width="1" height="1"/>
<rect x="167" y="690" width="1" height="4"/>
<rect x="168" y="689" width="1" height="4"/>
<rect x="169" y="689" width="1" height="4"/>
<rect x="170" y="692" width="1" height="1"/>
<rect x="171" y="692" width="1" height="1"/>
<rect x="174" y="691" width="1" height="1"/>
<rect x="175" y="689" width="1" height="4"/>
<rect x="176" y="692" width="1" height="2"/>
<rect x="177" y="691" width="1" height="2"/>
<rect x="178" y="690" width="1" height="2"/>
<rect x="182" y="692" width="1" height="2"/>
<rect x="183" y="690" width="1" height="2"/>
<rect x="184" y="691" width="1" height="3"/>
<rect x="189" y="689" width="1" height="2"/>
<rect x="190" y="690" width="1" height="2"/>
<rect x="192" y="690" width="1" height="4"/>
<rect x="197" y="691" width="1" height="1"/>
<rect x="199" y="693" width="1" height="2"/>
<rect x="200" y="689" width="1" height="4"/>
<rect x="202" y="689" width="1" height="2"/>
<rect x="204" y="689" width="1" height="2"/>
<rect x="206" y="694" width="1" height="1"/>
<rect x="207" y="691" width="4" height="1"/>
<rect x="210" y="691" width="1" height="3"/>
<rect x="211" y="692" width="1" height="1"/>
<rect x="212" y="690" width="2" height="1"/>
<rect x="213" y="693" width="1" height="2"/>
<rect x="215" y="690" width="4" height="1"/>
<rect x="216" y="689" width="1" height="2"/>
<rect x="217" y="690" width="1" height="3"/>
<rect x="218" y="689" width="1" height="2"/>
<rect x="219" y="691" width="1" height="4"/>
<rect x="223" y="689" width="1" height="2"/>
<rect x="228" y="689" width="1" height="3"/>
<rect x="230" y="691" width="3" height="1"/>
<rect x="233" y="689" width="1" height="1"/>
<rect x="234" y="690" width="1" height="4"/>
<rect x="236" y="690" width="1" height="1"/>
<rect x="238" y="690" width="1" height="1"/>
<rect x="239" y="690" width="4" height="1"/>
<rect x="240" y="691" width="1" height="4"/>
<rect x="241" y="692" width="1" height="3"/>
<rect x="242" y="689" width="4" height="1"/>
<rect x="244" y="690" width="1" height="4"/>
<rect x="246" y="693" width="2" height="1"/>
<rect x="247" y="690" width="1" height="4"/>
<rect x="248" y="690" width="1" height="3"/>
<rect x="249" y="693" width="1" height="2"/>
<rect x="250" y="692" width="4" height="1"/>
<rect x="251" y="689" width="1" height="4"/>
<rect x="252" y="690" width="1" height="4"/>
<rect x="253" y="693" width="1" height="1"/>
<rect x="255" y="689" width="4" height="1"/>
<rect x="256" y="689" width="1" height="2"/>
<rect x="258" y="691" width="1" height="3"/>
<rect x="259" y="690" width="1" height="3"/>
<rect x="260" y="691" width="1" height="3"/>
<rect x="261" y="689" width="1" height="3"/>
<rect x="263" y="689" width="1" height="1"/>
<rect x="264" y="689" width="1" height="2"/>
<rect x="266" y="690" width="1" height="2"/>
<rect x="268" y="689" width="1" height="4"/>
<rect x="274" y="690" width="1" height="3"/>
<rect x="275" y="693" width="4" height="1"/>
<rect x="277" y="693" width="4" height="1"/>
<rect x="278" y="690" width="2" height="1"/>
<rect x="281" y="691" width="1" height="2"/>
<rect x="284" y="689" width="1" height="2"/>
<rect x="285" y="690" width="1" height="2"/>
<rect x="287" y="692" width="1" height="1"/>
<rect x="289" y="690" width="1" height="2"/>
<rect x="290" y="689" width="1" height="1"/>
<rect x="291" y="691" width="1" height="2"/>
<rect x="292" y="691" width="1" height="4"/>
<rect x="294" y="689" width="1" height="2"/>
<rect x="295" y="689" width="1" height="1"/>
<rect x="299" y="690" width="1" height="2"/>
<rect x="300" y="690" width="1" height="2"/>
<rect x="303" y="690" width="1" height="1"/>
<rect x="305" y="691" width="1" height="1"/>
<rect x="306" y="691" width="1" height="3"/>
<rect x="307" y="690" width="1" height="4"/>
<rect x="308" y="690" width="1" height="1"/>
<rect x="309" y="691" width="1" height="3"/>
<rect x="311" y="693" width="1" height="2"/>
<rect x="312" y="689" width="1" height="4"/>
<rect x="313" y="694" width="1" height="1"/>
<rect x="317" y="693" width="2" height="1"/>
<rect x="318" y="691" width="3" height="1"/>
<rect x="319" y="694" width="1" height="1"/>
<rect x="321" y="690" width="1" height="3"/>
<rect x="327" y="689" width="1" height="2"/>
<rect x="329" y="689" width="1" height="1"/>
<rect x="333" y="691" width="1" height="2"/>
<rect x="334" y="690" width="1" height="3"/>
<rect x="335" y="693" width="3" height="1"/>
<rect x="341" y="689" width="1" height="4"/>
<rect x="343" y="689" width="1" height="3"/>
<rect x="346" y="691" width="1" height="2"/>
<rect x="347" y="693" width="1" height="2"/>
<rect x="348" y="693" width="3" height="1"/>
<rect x="349" y="694" width="2" height="1"/>
<rect x="350" y="693" width="1" height="1"/>
<rect x="351" y="692" width="2" height="1"/>
<rect x="353" y="690" width="1" height="3"/>
<rect x="355" y="689" width="4" height="1"/>
<rect x="356" y="692" width="1" height="3"/>
<rect x="357" y="691" width="1" height="3"/>
<rect x="358" y="692" width="1" height="2"/>
<rect x="360" y="694" width="3" height="1"/>
<rect x="362" y="690" width="1" height="1"/>
<rect x="363" y="690" width="4" height="1"/>
<rect x="364" y="689" width="1" height="3"/>
<rect x="367" y="689" width="1" height="2"/>
<rect x="369" y="691" width="1" height="3"/>
<rect x="371" y="689" width="1" height="4"/>
<rect x="374" y="693" width="1" height="2"/>
<rect x="376" y="692" width="1" height="3"/>
<rect x="377" y="691" width="1" height="1"/>
<rect x="378" y="691" width="2" height="1"/>
<rect x="379" y="692" width="1" height="3"/>
<rect x="383" y="689" width="1" height="4"/>
<rect x="386" y="693" width="1" height="1"/>
<rect x="390" y="693" width="1" height="2"/>
<rect x="392" y="690" width="4" height="1"/>
<rect x="395" y="693" width="1" height="2"/>
<rect x="399" y="689" width="1" height="1"/>
<rect x="400" y="689" width="1" height="3"/>
<rect x="402" y="690" width="1" height="4"/>
<rect x="403" y="694" width="1" height="1"/>
<rect x="404" y="691" width="1" height="2"/>
<rect x="405" y="690" width="1" height="2"/>
<rect x="406" y="690" width="1" height="3"/>
<rect x="408" y="692" width="1" height="1"/>
<rect x="412" y="691" width="1" height="3"/>
<rect x="413" y="691" width="1" height="2"/>
<rect x="414" y="690" width="1" height="4"/>
<rect x="415" y="692" width="1" height="2"/>
<rect x="417" y="691" width="3" height="1"/>
<rect x="418" y="692" width="1" height="1"/>
<rect x="419" y="694" width="3" height="1"/>
<rect x="420" y="689" width="1" height="1"/>
<rect x="421" y="689" width="1" height="4"/>
<rect x="423" y="691" width="1" height="2"/>
<rect x="425" y="691" width="1" height="2"/>
<rect x="427" y="691" width="1" height="3"/>
<rect x="428" y="692" width="1" height="2"/>
<rect x="429" y="690" width="1" height="3"/>
<rect x="430" y="689" width="1" height="2"/>
<rect x="431" y="692" width="1" height="3"/>
<rect x="434" y="690" width="1" height="3"/>
<rect x="436" y="689" width="2" height="1"/>
<rect x="439" y="690" width="1" height="1"/>
<rect x="440" y="689" width="1" height="4"/>
<rect x="441" y="694" width="2" height="1"/>
<rect x="443" y="691" width="1" height="4"/>
<rect x="444" y="689" width="1" height="4"/>
<rect x="445" y="689" width="1" height="2"/>
<rect x="447" y="689" width="1" height="2"/>
<rect x="450" y="692" width="1" height="2"/>
<rect x="452" y="692" width="3" height="1"/>
<rect x="453" y="690" width="1" height="2"/>
<rect x="454" y="691" width="1" height="4"/>
<rect x="455" y="689" width="1" height="4"/>
<rect x="456" y="689" width="1" height="2"/>
<rect x="462" y="689" width="4" height="1"/>
<rect x="464" y="690" width="1" height="3"/>
<rect x="465" y="692" width="1" height="2"/>
<rect x="467" y="692" width="1" height="3"/>
<rect x="468" y="689" width="3" height="1"/>
<rect x="469" y="691" width="1" height="1"/>
<rect x="472" y="692" width="1" height="1"/>
<rect x="473" y="689" width="1" height="3"/>
<rect x="474" y="690" width="1" height="2"/>
<rect x="475" y="689" width="1" height="4"/>
<rect x="477" y="689" width="1" height="4"/>
<rect x="478" y="692" width="1" height="2"/>
<rect x="479" y="693" width="1" height="2"/>
<rect x="481" y="692" width="3" height="1"/>
<rect x="484" y="689" width="1" height="4"/>
<rect x="485" y="692" width="1" height="2"/>
<rect x="486" y="692" width="1" height="2"/>
<rect x="491" y="689" width="1" height="2"/>
<rect x="494" y="692" width="1" height="2"/>
<rect x="496" y="691" width="1" height="2"/>
<rect x="497" y="689" width="1" height="4"/>
<rect x="500" y="689" width="1" height="4"/>
<rect x="501" y="689" width="1" height="2"/>
<rect x="502" y="690" width="1" height="2"/>
<rect x="503" y="693" width="1" height="2"/>
<rect x="505" y="692" width="1" height="3"/>
<rect x="506" y="691" width="1" height="4"/>
<rect x="508" y="692" width="1" height="2"/>
<rect x="509" y="692" width="1" height="1"/>
<rect x="510" y="690" width="1" height="4"/>
<rect x="511" y="691" width="2" height="1"/>
<rect x="512" y="689" width="1" height="3"/>
<rect x="513" y="694" width="3" height="1"/>
<rect x="515" y="689" width="1" height="2"/>
<rect x="520" y="689" width="1" height="3"/>
<rect x="523" y="693" width="1" height="2"/>
<rect x="524" y="694" width="1" height="1"/>
<rect x="525" y="689" width="1" height="4"/>
<rect x="526" y="691" width="1" height="3"/>
<rect x="529" y="691" width="2" height="1"/>
<rect x="530" y="689" width="1" height="3"/>
<rect x="531" y="693" width="1" height="2"/>
<rect x="532" y="692" width="1" height="2"/>
<rect x="534" y="693" width="1" height="2"/>
<rect x="535" y="690" width="1" height="2"/>
<rect x="536" y="692" width="1" height="1"/>
<rect x="537" y="689" width="2" height="1"/>
<rect x="538" y="689" width="1" height="2"/>
<rect x="539" y="691" width="1" height="1"/>
<rect x="541" y="689" width="1" height="4"/>
<rect x="545" y="692" width="1" height="2"/>
<rect x="549" y="693" width="1" height="2"/>
<rect x="550" y="691" width="3" height="1"/>
<rect x="551" y="692" width="1" height="2"/>
<rect x="552" y="690" width="1" height="3"/>
<rect x="553" y="689" width="1" height="2"/>
<rect x="555" y="690" width="1" height="4"/>
<rect x="556" y="693" width="3" height="1"/>
<rect x="557" y="693" width="1" height="2"/>
<rect x="560" y="693" width="1" height="2"/>
<rect x="563" y="690" width="1" height="1"/>
<rect x="564" y="690" width="1" height="4"/>
<rect x="566" y="691" width="1" height="2"/>
<rect x="567" y="692" width="1" height="1"/>
<rect x="569" y="691" width="1" height="4"/>
<rect x="570" y="693" width="2" height="1"/>
<rect x="572" y="693" width="1" height="2"/>
<rect x="573" y="691" width="1" height="1"/>
<rect x="575" y="690" width="1" height="4"/>
<rect x="577" y="689" width="1" height="4"/>
<rect x="578" y="690" width="1" height="3"/>
<rect x="582" y="689" width="1" height="3"/>
<rect x="583" y="692" width="1" height="3"/>
<rect x="584" y="690" width="1" height="4"/>
<rect x="585" y="690" width="1" height="3"/>
<rect x="586" y="691" width="1" height="2"/>
<rect x="587" y="689" width="1" height="2"/>
<rect x="589" y="692" width="1" height="2"/>
<rect x="592" y="692" width="1" height="3"/>
<rect x="594" y="692" width="1" height="3"/>
<rect x="596" y="693" width="1" height="1"/>
<rect x="597" y="690" width="1" height="4"/>
<rect x="598" y="691" width="1" height="1"/>
<rect x="600" y="690" width="1" height="4"/>
<rect x="602" y="693" width="3" height="1"/>
<rect x="604" y="690" width="1" height="3"/>
<rect x="605" y="689" width="1" height="3"/>
<rect x="606" y="693" width="1" height="1"/>
<rect x="608" y="692" width="4" height="1"/>
<rect x="614" y="690" width="1" height="4"/>
<rect x="615" y="690" width="2" height="1"/>
<rect x="617" y="689" width="1" height="1"/>
<rect x="618" y="689" width="1" height="2"/>
<rect x="620" y="689" width="3" height="1"/>
<rect x="621" y="689" width="1" height="2"/>
<rect x="622" y="692" width="1" height="1"/>
<rect x="625" y="693" width="1" height="2"/>
<rect x="626" y="689" width="1" height="2"/>
<rect x="627" y="691" width="1" height="2"/>
<rect x="628" y="692" width="1" height="2"/>
<rect x="630" y="690" width="1" height="1"/>
<rect x="631" y="692" width="1" height="2"/>
<rect x="632" y="689" width="1" height="4"/>
<rect x="633" y="690" width="2" height="1"/>
<rect x="637" y="691" width="1" height="2"/>
<rect x="640" y="692" width="1" height="3"/>
<rect x="641" y="691" width="1" height="2"/>
<rect x="642" y="691" width="1" height="2"/>
<rect x="643" y="693" width="1" height="2"/>
<rect x="646" y="689" width="1" height="4"/>
<rect x="647" y="691" width="2" height="1"/>
<rect x="649" y="691" width="1" height="2"/>
<rect x="650" y="692" width="1" height="1"/>
<rect x="652" y="689" width="1" height="4"/>
<rect x="653" y="689" width="2" height="1"/>
<rect x="654" y="693" width="3" height="1"/>
<rect x="655" y="689" width="1" height="4"/>
<rect x="656" y="690" width="1" height="2"/>
<rect x="657" y="689" width="1" height="4"/>
<rect x="658" y="689" width="1" height="2"/>
<rect x="661" y="692" width="2" height="1"/>
<rect x="662" y="693" width="1" height="1"/>
<rect x="665" y="689" width="1" height="3"/>
<rect x="666" y="691" width="1" height="4"/>
<rect x="668" y="690" width="4" height="1"/>
<rect x="669" y="689" width="2" height="1"/>
<rect x="671" y="691" width="1" height="3"/>
<rect x="674" y="690" width="1" height="3"/>
<rect x="677" y="693" width="1" height="2"/>
<rect x="679" y="690" width="1" height="3"/>
<rect x="680" y="689" width="1" height="4"/>
<rect x="683" y="689" width="1" height="2"/>
<rect x="684" y="693" width="1" height="2"/>
<rect x="686" y="690" width="4" height="1"/>
<rect x="688" y="689" width="1" height="3"/>
<rect x="694" y="689" width="1" height="4"/>
<rect x="695" y="690" width="1" height="2"/>
<rect x="696" y="690" width="1" height="4"/>
<rect x="697" y="692" width="1" height="3"/>
<rect x="698" y="689" width="1" height="2"/>
<rect x="699" y="689" width="1" height="4"/>
<rect x="700" y="689" width="1" height="3"/>
<rect x="701" y="690" width="1" height="3"/>
<rect x="702" y="690" width="1" height="4"/>
<rect x="703" y="689" width="1" height="1"/>
<rect x="708" y="693" width="1" height="1"/>
<rect x="710" y="690" width="1" height="1"/>
<rect x="711" y="693" width="1" height="2"/>
<rect x="712" y="692" width="1" height="2"/>
<rect x="713" y="694" width="2" height="1"/>
<rect x="714" y="689" width="1" height="4"/>
<rect x="715" y="690" width="1" height="3"/>
<rect x="716" y="690" width="1" height="1"/>
<rect x="717" y="690" width="1" height="2"/>
<rect x="720" y="690" width="1" height="3"/>
<rect x="721" y="692" width="3" height="1"/>
<rect x="722" y="692" width="1" height="2"/>
<rect x="723" y="692" width="1" height="3"/>
<rect x="724" y="691" width="1" height="2"/>
<rect x="727" y="693" width="1" height="2"/>
<rect x="728" y="691" width="1" height="2"/>
<rect x="729" y="690" width="1" height="1"/>
<rect x="732" y="689" width="1" height="2"/>
<rect x="733" y="692" width="1" height="2"/>
<rect x="734" y="691" width="1" height="3"/>
<rect x="735" y="691" width="1" height="4"/>
<rect x="736" y="690" width="1" height="3"/>
<rect x="737" y="690" width="1" height="2"/>
<rect x="738" y="689" width="1" height="2"/>
<rect x="739" y="692" width="1" height="3"/>
<rect x="740" y="693" width="1" height="2"/>
<rect x="742" y="692" width="1" height="3"/>
<rect x="743" y="691" width="1" height="2"/>
<rect x="744" y="692" width="3" height="1"/>
<rect x="745" y="690" width="1" height="4"/>
<rect x="746" y="691" width="1" height="2"/>
<rect x="747" y="690" width="1" height="2"/>
<rect x="748" y="694" width="1" height="1"/>
<rect x="750" y="691" width="4" height="1"/>
<rect x="752" y="693" width="1" height="2"/>
<rect x="757" y="689" width="1" height="2"/>
<rect x="759" y="689" width="1" height="3"/>
<rect x="760" y="691" width="1" height="2"/>
<rect x="761" y="690" width="1" height="2"/>
<rect x="762" y="690" width="1" height="3"/>
<rect x="763" y="691" width="1" height="2"/>
<rect x="765" y="694" width="1" height="1"/>
<rect x="766" y="690" width="1" height="3"/>
<rect x="767" y="693" width="1" height="2"/>
<rect x="768" y="692" width="1" height="1"/>
<rect x="769" y="692" width="1" height="1"/>
<rect x="770" y="692" width="1" height="3"/>
<rect x="772" y="691" width="1" height="2"/>
<rect x="773" y="691" width="1" height="1"/>
<rect x="774" y="693" width="1" height="2"/>
<rect x="775" y="692" width="1" height="2"/>
<rect x="776" y="691" width="1" height="2"/>
<rect x="777" y="689" width="1" height="2"/>
<rect x="780" y="689" width="1" height="3"/>
<rect x="781" y="692" width="1" height="3"/>
<rect x="782" y="689" width="1" height="3"/>
<rect x="785" y="691" width="1" height="3"/>
<rect x="786" y="690" width="1" height="1"/>
<rect x="788" y="690" width="1" height="2"/>
<rect x="789" y="693" width="1" height="1"/>
<rect x="791" y="690" width="1" height="4"/>
<rect x="794" y="691" width="1" height="4"/>
<rect x="796" y="689" width="1" height="2"/>
<rect x="798" y="692" width="1" height="2"/>
<rect x="802" y="691" width="1" height="4"/>
<rect x="803" y="690" width="1" height="4"/>
<rect x="804" y="691" width="1" height="2"/>
<rect x="806" y="694" width="2" height="1"/>
<rect x="807" y="690" width="1" height="2"/>
<rect x="814" y="692" width="1" height="3"/>
<rect x="815" y="690" width="1" height="4"/>
<rect x="817" y="692" width="1" height="2"/>
<rect x="818" y="691" width="1" height="3"/>
<rect x="820" y="690" width="1" height="2"/>
<rect x="821" y="693" width="1" height="2"/>
<rect x="823" y="694" width="3" height="1"/>
<rect x="828" y="691" width="1" height="3"/>
<rect x="829" y="689" width="1" height="2"/>
<rect x="830" y="691" width="1" height="2"/>
<rect x="832" y="692" width="1" height="3"/>
<rect x="835" y="689" width="1" height="1"/>
<rect x="836" y="693" width="1" height="2"/>
<rect x="838" y="689" width="1" height="2"/>
<rect x="841" y="691" width="1" height="1"/>
<rect x="842" y="690" width="1" height="2"/>
<rect x="843" y="690" width="1" height="4"/>
<rect x="846" y="693" width="1" height="2"/>
<rect x="847" y="692" width="1" height="2"/>
<rect x="848" y="693" width="1" height="1"/>
<rect x="850" y="692" width="1" height="3"/>
<rect x="851" y="689" width="1" height="2"/>
<rect x="852" y="689" width="1" height="4"/>
<rect x="853" y="691" width="1" height="3"/>
<rect x="854" y="692" width="1" height="1"/>
<rect x="855" y="690" width="1" height="4"/>
<rect x="856" y="689" width="2" height="1"/>
<rect x="857" y="689" width="1" height="2"/>
<rect x="858" y="692" width="1" height="2"/>
<rect x="859" y="692" width="1" height="2"/>
<rect x="860" y="691" width="1" height="3"/>
<rect x="862" y="690" width="1" height="1"/>
<rect x="863" y="693" width="4" height="1"/>
<rect x="864" y="691" width="1" height="2"/>
<rect x="867" y="690" width="1" height="1"/>
<rect x="870" y="689" width="4" height="1"/>
<rect x="871" y="693" width="1" height="1"/>
<rect x="872" y="690" width="1" height="4"/>
<rect x="873" y="689" width="1" height="2"/>
<rect x="875" y="690" width="1" height="4"/>
<rect x="879" y="691" width="1" height="4"/>
<rect x="882" y="692" width="1" height="3"/>
<rect x="884" y="689" width="1" height="4"/>
<rect x="885" y="690" width="1" height="2"/>
<rect x="886" y="693" width="1" height="2"/>
<rect x="889" y="691" width="1" height="3"/>
<rect x="890" y="694" width="1" height="1"/>
<rect x="891" y="691" width="1" height="1"/>
<rect x="892" y="690" width="1" height="2"/>
<rect x="893" y="693" width="1" height="2"/>
<rect x="894" y="690" width="1" height="2"/>
<rect x="895" y="690" width="1" height="2"/>
<rect x="896" y="692" width="1" height="2"/>
<rect x="897" y="689" width="1" height="3"/>
<rect x="898" y="693" width="1" height="2"/>
<rect x="901" y="691" width="1" height="2"/>
<rect x="902" y="689" width="1" height="4"/>
<rect x="903" y="692" width="3" height="1"/>
<rect x="904" y="692" width="1" height="2"/>
<rect x="905" y="691" width="1" height="2"/>
<rect x="906" y="691" width="1" height="3"/>
<rect x="909" y="690" width="2" height="1"/>
<rect x="913" y="691" width="1" height="4"/>
<rect x="914" y="692" width="1" height="3"/>
<rect x="915" y="689" width="1" height="4"/>
<rect x="916" y="692" width="1" height="3"/>
<rect x="918" y="690" width="1" height="3"/>
<rect x="919" y="691" width="1" height="4"/>
<rect x="920" y="693" width="1" height="1"/>
<rect x="922" y="689" width="1" height="4"/>
<rect x="923" y="690" width="3" height="1"/>
<rect x="924" y="691" width="3" height="1"/>
<rect x="926" y="692" width="1" height="3"/>
<rect x="927" y="692" width="1" height="2"/>
<rect x="928" y="690" width="1" height="2"/>
<rect x="931" y="689" width="1" height="2"/>
<rect x="932" y="694" width="1" height="1"/>
<rect x="933" y="690" width="1" height="4"/>
<rect x="934" y="689" width="1" height="4"/>
<rect x="936" y="690" width="1" height="2"/>
<rect x="937" y="690" width="1" height="4"/>
<rect x="939" y="689" width="1" height="2"/>
<rect x="67" y="698" width="2" height="1"/>
<rect x="69" y="697" width="1" height="2"/>
<rect x="72" y="697" width="1" height="2"/>
<rect x="73" y="698" width="1" height="4"/>
<rect x="74" y="698" width="1" height="4"/>
<rect x="76" y="701" width="1" height="2"/>
<rect x="80" y="700" width="1" height="3"/>
<rect x="81" y="699" width="1" height="2"/>
<rect x="85" y="698" width="1" height="2"/>
<rect x="87" y="698" width="1" height="4"/>
<rect x="88" y="697" width="1" height="2"/>
<rect x="89" y="701" width="1" height="2"/>
<rect x="91" y="697" width="1" height="1"/>
<rect x="94" y="700" width="1" height="2"/>
<rect x="95" y="702" width="1" height="1"/>
<rect x="96" y="701" width="1" height="2"/>
<rect x="97" y="698" width="1" height="3"/>
<rect x="98" y="699" width="1" height="1"/>
<rect x="99" y="698" width="1" height="3"/>
<rect x="100" y="699" width="1" height="1"/>
<rect x="101" y="697" width="1" height="2"/>
<rect x="103" y="700" width="1" height="3"/>
<rect x="104" y="698" width="1" height="3"/>
<rect x="105" y="699" width="1" height="1"/>
<rect x="106" y="701" width="1" height="2"/>
<rect x="107" y="699" width="1" height="2"/>
<rect x="109" y="697" width="1" height="4"/>
<rect x="110" y="698" width="1" height="2"/>
<rect x="111" y="700" width="3" height="1"/>
<rect x="112" y="697" width="1" height="2"/>
<rect x="115" y="702" width="4" height="1"/>
<rect x="116" y="697" width="1" height="2"/>
<rect x="118" y="702" width="1" height="1"/>
<rect x="119" y="699" width="4" height="1"/>
<rect x="124" y="699" width="1" height="1"/>
<rect x="125" y="698" width="1" height="4"/>
<rect x="126" y="697" width="1" height="4"/>
<rect x="130" y="701" width="1" height="2"/>
<rect x="133" y="700" width="1" height="3"/>
<rect x="136" y="697" width="1" height="4"/>
<rect x="137" y="701" width="1" height="2"/>
<rect x="138" y="697" width="1" height="1"/>
<rect x="139" y="699" width="1" height="4"/>
<rect x="143" y="700" width="1" height="1"/>
<rect x="144" y="699" width="1" height="1"/>
<rect x="148" y="700" width="1" height="2"/>
<rect x="149" y="697" width="4" height="1"/>
<rect x="151" y="699" width="1" height="4"/>
<rect x="152" y="697" width="1" height="4"/>
<rect x="153" y="701" width="1" height="1"/>
<rect x="154" y="699" width="1" height="2"/>
<rect x="156" y="700" width="1" height="3"/>
<rect x="157" y="701" width="1" height="2"/>
<rect x="158" y="697" width="1" height="4"/>
<rect x="159" y="701" width="1" height="1"/>
<rect x="160" y="699" width="1" height="4"/>
<rect x="161" y="699" width="1" height="4"/>
<rect x="164" y="698" width="1" height="1"/>
<rect x="165" y="702" width="1" height="1"/>
<rect x="167" y="701" width="1" height="2"/>
<rect x="169" y="699" width="1" height="3"/>
<rect x="171" y="700" width="2" height="1"/>
<rect x="172" y="698" width="1" height="1"/>
<rect x="173" y="702" width="1" height="1"/>
<rect x="175" y="698" width="1" height="3"/>
<rect x="179" y="697" width="4" height="1"/>
<rect x="180" y="699" width="1" height="2"/>
<rect x="182" y="697" width="1" height="2"/>
<rect x="183" y="700" width="1" height="3"/>
<rect x="184" y="699" width="1" height="3"/>
<rect x="185" y="699" width="1" height="1"/>
<rect x="187" y="698" width="1" height="4"/>
<rect x="188" y="698" width="3" height="1"/>
<rect x="191" y="700" width="1" height="2"/>
<rect x="193" y="698" width="1" height="4"/>
<rect x="195" y="697" width="1" height="4"/>
<rect x="196" y="698" width="1" height="4"/>
<rect x="198" y="699" width="1" height="4"/>
<rect x="199" y="698" width="1" height="2"/>
<rect x="201" y="698" width="3" height="1"/>
<rect x="202" y="698" width="1" height="4"/>
<rect x="203" y="698" width="1" height="1"/>
<rect x="204" y="700" width="1" height="2"/>
<rect x="206" y="699" width="1" height="1"/>
<rect x="207" y="697" width="2" height="1"/>
<rect x="208" y="699" width="1" height="2"/>
<rect x="209" y="698" width="1" height="2"/>
<rect x="213" y="697" width="1" height="3"/>
<rect x="214" y="701" width="1" height="1"/>
<rect x="215" y="697" width="1" height="2"/>
<rect x="218" y="697" width="1" height="4"/>
<rect x="220" y="697" width="1" height="2"/>
<rect x="221" y="700" width="1" height="1"/>
<rect x="223" y="700" width="1" height="3"/>
<rect x="225" y="697" width="1" height="1"/>
<rect x="227" y="699" width="1" height="4"/>
<rect x="228" y="700" width="1" height="1"/>
<rect x="229" y="697" width="1" height="4"/>
<rect x="231" y="699" width="1" height="3"/>
<rect x="232" y="698" width="2" height="1"/>
<rect x="234" y="700" width="1" height="1"/>
<rect x="236" y="700" width="1" height="3"/>
<rect x="237" y="700" width="1" height="3"/>
<rect x="238" y="701" width="1" height="2"/>
<rect x="239" y="699" width="1" height="1"/>
<rect x="242" y="699" width="1" height="4"/>
<rect x="243" y="699" width="1" height="4"/>
<rect x="245" y="697" width="1" height="4"/>
<rect x="246" y="699" width="1" height="3"/>
<rect x="247" y="698" width="1" height="3"/>
<rect x="249" y="697" width="1" height="3"/>
<rect x="250" y="699" width="1" height="1"/>
<rect x="251" y="700" width="1" height="2"/>
<rect x="253" y="700" width="1" height="2"/>
<rect x="255" y="697" width="1" height="3"/>
<rect x="256" y="697" width="1" height="4"/>
<rect x="258" y="697" width="1" height="2"/>
<rect x="260" y="701" width="1" height="2"/>
<rect x="261" y="698" width="1" height="3"/>
<rect x="262" y="699" width="1" height="2"/>
<rect x="263" y="698" width="1" height="2"/>
<rect x="267" y="698" width="1" height="2"/>
<rect x="268" y="702" width="3" height="1"/>
<rect x="269" y="702" width="1" height="1"/>
<rect x="274" y="697" width="1" height="2"/>
<rect x="275" y="699" width="1" height="2"/>
<rect x="276" y="697" width="1" height="4"/>
<rect x="277" y="699" width="1" height="1"/>
<rect x="278" y="701" width="1" height="2"/>
<rect x="279" y="698" width="1" height="3"/>
<rect x="281" y="701" width="2" height="1"/>
<rect x="282" y="701" width="1" height="2"/>
<rect x="285" y="699" width="4" height="1"/>
<rect x="286" y="699" width="1" height="3"/>
<rect x="288" y="700" width="3" height="1"/>
<rect x="290" y="701" width="1" height="2"/>
<rect x="291" y="698" width="1" height="2"/>
<rect x="292" y="697" width="1" height="4"/>
<rect x="293" y="702" width="4" height="1"/>
<rect x="294" y="697" width="1" height="1"/>
<rect x="297" y="699" width="1" height="2"/>
<rect x="298" y="697" width="1" height="2"/>
<rect x="301" y="698" width="1" height="3"/>
<rect x="306" y="700" width="2" height="1"/>
<rect x="307" y="697" width="2" height="1"/>
<rect x="308" y="701" width="3" height="1"/>
<rect x="309" y="697" width="1" height="2"/>
<rect x="310" y="698" width="1" height="3"/>
<rect x="311" y="697" width="1" height="3"/>
<rect x="312" y="697" width="4" height="1"/>
<rect x="313" y="699" width="1" height="2"/>
<rect x="314" y="698" width="1" height="2"/>
<rect x="320" y="699" width="1" height="3"/>
<rect x="322" y="697" width="1" height="4"/>
<rect x="324" y="699" width="1" height="1"/>
<rect x="327" y="698" width="1" height="1"/>
<rect x="330" y="699" width="1" height="4"/>
<rect x="332" y="698" width="1" height="1"/>
<rect x="335" y="698" width="1" height="2"/>
<rect x="336" y="698" width="1" height="1"/>
<rect x="337" y="698" width="1" height="4"/>
<rect x="338" y="701" width="3" height="1"/>
<rect x="340" y="700" width="1" height="2"/>
<rect x="341" y="698" width="1" height="2"/>
<rect x="342" y="698" width="1" height="3"/>
<rect x="344" y="701" width="1" height="2"/>
<rect x="345" y="699" width="1" height="4"/>
<rect x="346" y="698" width="1" height="1"/>
<rect x="347" y="699" width="1" height="1"/>
<rect x="348" y="697" width="1" height="2"/>
<rect x="350" y="702" width="2" height="1"/>
<rect x="352" y="697" width="1" height="2"/>
<rect x="353" y="699" width="1" height="2"/>
<rect x="355" y="700" width="1" height="1"/>
<rect x="357" y="699" width="1" height="2"/>
<rect x="359" y="701" width="1" height="2"/>
<rect x="360" y="697" width="4" height="1"/>
<rect x="361" y="697" width="1" height="1"/>
<rect x="362" y="697" width="1" height="3"/>
<rect x="363" y="698" width="1" height="2"/>
<rect x="364" y="700" width="1" height="2"/>
<rect x="367" y="698" width="1" height="2"/>
<rect x="369" y="698" width="1" height="1"/>
<rect x="370" y="700" width="1" height="2"/>
<rect x="371" y="699" width="1" height="1"/>
<rect x="372" y="698" width="1" height="1"/>
<rect x="375" y="698" width="1" height="2"/>
<rect x="376" y="701" width="3" height="1"/>
<rect x="377" y="700" width="4" height="1"/>
<rect x="379" y="697" width="2" height="1"/>
<rect x="381" y="701" width="1" height="2"/>
<rect x="382" y="701" width="1" height="2"/>
<rect x="383" y="700" width="1" height="3"/>
<rect x="384" y="700" width="1" height="3"/>
<rect x="385" y="700" width="1" height="2"/>
<rect x="387" y="698" width="1" height="4"/>
<rect x="388" y="698" width="3" height="1"/>
<rect x="389" y="698" width="1" height="3"/>
<rect x="391" y="700" width="1" height="3"/>
<rect x="393" y="698" width="1" height="1"/>
<rect x="394" y="699" width="1" height="2"/>
<rect x="396" y="699" width="1" height="4"/>
<rect x="397" y="699" width="1" height="3"/>
<rect x="399" y="698" width="1" height="2"/>
<rect x="401" y="700" width="3" height="1"/>
<rect x="402" y="699" width="3" height="1"/>
<rect x="403" y="698" width="1" height="3"/>
<rect x="408" y="698" width="1" height="4"/>
<rect x="411" y="699" width="1" height="4"/>
<rect x="412" y="699" width="1" height="2"/>
<rect x="415" y="697" width="1" height="3"/>
<rect x="416" y="699" width="1" height="4"/>
<rect x="417" y="702" width="1" height="1"/>
<rect x="418" y="700" width="1" height="2"/>
<rect x="419" y="701" width="4" height="1"/>
<rect x="420" y="699" width="1" height="1"/>
<rect x="421" y="697" width="1" height="3"/>
<rect x="424" y="697" width="1" height="3"/>
<rect x="425" y="698" width="1" height="1"/>
<rect x="426" y="697" width="3" height="1"/>
<rect x="427" y="697" width="1" height="4"/>
<rect x="428" y="697" width="1" height="4"/>
<rect x="430" y="698" width="1" height="3"/>
<rect x="431" y="699" width="1" height="4"/>
<rect x="432" y="698" width="1" height="2"/>
<rect x="434" y="698" width="1" height="2"/>
<rect x="440" y="699" width="1" height="3"/>
<rect x="442" y="701" width="1" height="1"/>
<rect x="444" y="699" width="1" height="4"/>
<rect x="448" y="697" width="1" height="2"/>
<rect x="449" y="700" width="1" height="2"/>
<rect x="450" y="701" width="1" height="2"/>
<rect x="455" y="700" width="1" height="1"/>
<rect x="460" y="702" width="3" height="1"/>
<rect x="462" y="697" width="1" height="2"/>
<rect x="463" y="700" width="1" height="2"/>
<rect x="465" y="697" width="1" height="4"/>
<rect x="467" y="700" width="1" height="2"/>
<rect x="468" y="697" width="1" height="2"/>
<rect x="472" y="697" width="1" height="1"/>
<rect x="473" y="699" width="1" height="4"/>
<rect x="474" y="697" width="1" height="3"/>
<rect x="475" y="698" width="1" height="2"/>
<rect x="476" y="697" width="3" height="1"/>
<rect x="477" y="697" width="1" height="4"/>
<rect x="478" y="697" width="1" height="4"/>
<rect x="479" y="698" width="1" height="4"/>
<rect x="480" y="700" width="1" height="2"/>
<rect x="481" y="699" width="1" height="1"/>
<rect x="482" y="698" width="1" height="4"/>
<rect x="483" y="700" width="1" height="2"/>
<rect x="485" y="700" width="1" height="3"/>
<rect x="486" y="699" width="1" height="3"/>
<rect x="487" y="697" width="3" height="1"/>
<rect x="488" y="698" width="2" height="1"/>
<rect x="490" y="698" width="1" height="2"/>
<rect x="491" y="702" width="3" height="1"/>
<rect x="492" y="699" width="3" height="1"/>
<rect x="496" y="697" width="1" height="3"/>
<rect x="498" y="697" width="1" height="2"/>
<rect x="499" y="699" width="2" height="1"/>
<rect x="500" y="698" width="1" height="4"/>
<rect x="503" y="700" width="1" height="2"/>
<rect x="505" y="698" width="1" height="4"/>
<rect x="506" y="697" width="1" height="4"/>
<rect x="507" y="698" width="1" height="4"/>
<rect x="508" y="697" width="1" height="3"/>
<rect x="512" y="700" width="1" height="2"/>
<rect x="517" y="698" width="1" height="1"/>
<rect x="520" y="700" width="4" height="1"/>
<rect x="522" y="697" width="1" height="1"/>
<rect x="524" y="700" width="1" height="2"/>
<rect x="525" y="699" width="1" height="3"/>
<rect x="526" y="700" width="1" height="1"/>
<rect x="529" y="700" width="1" height="3"/>
<rect x="532" y="697" width="1" height="3"/>
<rect x="534" y="699" width="1" height="4"/>
<rect x="537" y="698" width="1" height="2"/>
<rect x="539" y="699" width="1" height="4"/>
<rect x="540" y="697" width="1" height="3"/>
<rect x="542" y="699" width="1" height="3"/>
<rect x="543" y="698" width="1" height="3"/>
<rect x="545" y="700" width="1" height="2"/>
<rect x="546" y="697" width="1" height="4"/>
<rect x="549" y="699" width="1" height="4"/>
<rect x="551" y="701" width="1" height="2"/>
<rect x="552" y="701" width="1" height="2"/>
<rect x="553" y="697" width="1" height="2"/>
<rect x="554" y="698" width="1" height="4"/>
<rect x="556" y="699" width="1" height="1"/>
<rect x="558" y="699" width="1" height="3"/>
<rect x="559" y="700" width="1" height="3"/>
<rect x="560" y="698" width="1" height="3"/>
<rect x="561" y="700" width="1" height="1"/>
<rect x="562" y="698" width="1" height="4"/>
<rect x="563" y="699" width="3" height="1"/>
<rect x="564" y="697" width="1" height="1"/>
<rect x="565" y="699" width="1" height="4"/>
<rect x="566" y="698" width="1" height="2"/>
<rect x="567" y="698" width="1" height="2"/>
<rect x="568" y="699" width="1" height="4"/>
<rect x="569" y="700" width="1" height="2"/>
<rect x="571" y="701" width="1" height="2"/>
<rect x="572" y="697" width="1" height="2"/>
<rect x="573" y="702" width="1" height="1"/>
<rect x="576" y="697" width="1" height="3"/>
<rect x="578" y="699" width="1" height="2"/>
<rect x="579" y="699" width="1" height="2"/>
<rect x="580" y="700" width="1" height="2"/>
<rect x="582" y="698" width="1" height="4"/>
<rect x="585" y="701" width="1" height="2"/>
<rect x="587" y="700" width="1" height="2"/>
<rect x="589" y="701" width="1" height="2"/>
<rect x="591" y="701" width="1" height="2"/>
<rect x="593" y="698" width="1" height="2"/>
<rect x="594" y="698" width="1" height="1"/>
<rect x="595" y="702" width="1" height="1"/>
<rect x="600" y="697" width="1" height="2"/>
<rect x="601" y="701" width="3" height="1"/>
<rect x="602" y="697" width="3" height="1"/>
<rect x="604" y="697" width="1" height="4"/>
<rect x="605" y="702" width="2" height="1"/>
<rect x="606" y="697" width="1" height="2"/>
<rect x="607" y="698" width="1" height="2"/>
<rect x="608" y="698" width="3" height="1"/>
<rect x="609" y="699" width="1" height="2"/>
<rect x="610" y="697" width="1" height="1"/>
<rect x="611" y="698" width="1" height="3"/>
<rect x="612" y="698" width="1" height="1"/>
<rect x="614" y="697" width="1" height="4"/>
<rect x="615" y="699" width="1" height="4"/>
<rect x="616" y="697" width="1" height="4"/>
<rect x="617" y="699" width="1" height="3"/>
<rect x="618" y="700" width="1" height="3"/>
<rect x="619" y="698" width="4" height="1"/>
<rect x="620" y="699" width="1" height="2"/>
<rect x="621" y="701" width="1" height="1"/>
<rect x="622" y="697" width="1" height="4"/>
<rect x="623" y="699" width="1" height="4"/>
<rect x="624" y="700" width="1" height="2"/>
<rect x="625" y="699" width="1" height="4"/>
<rect x="626" y="699" width="1" height="4"/>
<rect x="629" y="701" width="1" height="2"/>
<rect x="631" y="701" width="4" height="1"/>
<rect x="632" y="701" width="1" height="2"/>
<rect x="633" y="701" width="1" height="1"/>
<rect x="635" y="700" width="1" height="2"/>
<rect x="638" y="697" width="1" height="3"/>
<rect x="639" y="697" width="2" height="1"/>
<rect x="640" y="700" width="1" height="2"/>
<rect x="641" y="699" width="1" height="3"/>
<rect x="645" y="701" width="1" height="2"/>
<rect x="646" y="699" width="1" height="2"/>
<rect x="647" y="699" width="1" height="4"/>
<rect x="648" y="699" width="1" height="2"/>
<rect x="649" y="698" width="1" height="2"/>
<rect x="650" y="702" width="1" height="1"/>
<rect x="652" y="697" width="1" height="2"/>
<rect x="660" y="701" width="1" height="1"/>
<rect x="661" y="701" width="1" height="1"/>
<rect x="662" y="700" width="1" height="2"/>
<rect x="664" y="697" width="1" height="3"/>
<rect x="665" y="699" width="1" height="2"/>
<rect x="668" y="698" width="1" height="2"/>
<rect x="669" y="702" width="1" height="1"/>
<rect x="672" y="700" width="1" height="2"/>
<rect x="673" y="700" width="1" height="3"/>
<rect x="674" y="701" width="2" height="1"/>
<rect x="675" y="697" width="1" height="1"/>
<rect x="676" y="698" width="1" height="4"/>
<rect x="677" y="698" width="3" height="1"/>
<rect x="681" y="700" width="1" height="1"/>
<rect x="685" y="697" width="1" height="3"/>
<rect x="686" y="698" width="1" height="1"/>
<rect x="687" y="698" width="1" height="3"/>
<rect x="693" y="698" width="1" height="1"/>
<rect x="694" y="697" width="1" height="4"/>
<rect x="696" y="698" width="1" height="3"/>
<rect x="697" y="698" width="1" height="1"/>
<rect x="701" y="698" width="1" height="1"/>
<rect x="702" y="700" width="1" height="2"/>
<rect x="703" y="697" width="1" height="2"/>
<rect x="705" y="701" width="1" height="2"/>
<rect x="707" y="697" width="1" height="3"/>
<rect x="708" y="699" width="1" height="3"/>
<rect x="709" y="697" width="1" height="4"/>
<rect x="710" y="697" width="1" height="2"/>
<rect x="711" y="698" width="1" height="4"/>
<rect x="712" y="698" width="1" height="2"/>
<rect x="713" y="697" width="1" height="2"/>
<rect x="715" y="699" width="1" height="2"/>
<rect x="716" y="702" width="1" height="1"/>
<rect x="721" y="697" width="1" height="2"/>
<rect x="722" y="702" width="2" height="1"/>
<rect x="723" y="701" width="1" height="2"/>
<rect x="727" y="698" width="3" height="1"/>
<rect x="731" y="700" width="1" height="3"/>
<rect x="732" y="702" width="2" height="1"/>
<rect x="733" y="698" width="1" height="4"/>
<rect x="734" y="698" width="1" height="4"/>
<rect x="735" y="697" width="1" height="3"/>
<rect x="736" y="701" width="1" height="2"/>
<rect x="738" y="698" width="1" height="2"/>
<rect x="739" y="698" width="1" height="4"/>
<rect x="741" y="702" width="1" height="1"/>
<rect x="742" y="700" width="1" height="2"/>
<rect x="745" y="700" width="1" height="2"/>
<rect x="746" y="700" width="1" height="3"/>
<rect x="748" y="701" width="1" height="2"/>
<rect x="749" y="700" width="1" height="2"/>
<rect x="750" y="698" width="4" height="1"/>
<rect x="754" y="697" width="1" height="4"/>
<rect x="756" y="701" width="1" height="2"/>
<rect x="758" y="699" width="4" height="1"/>
<rect x="760" y="697" width="1" height="1"/>
<rect x="761" y="699" width="1" height="2"/>
<rect x="762" y="697" width="3" height="1"/>
<rect x="763" y="700" width="1" height="1"/>
<rect x="764" y="701" width="1" height="1"/>
<rect x="765" y="698" width="1" height="1"/>
<rect x="766" y="697" width="2" height="1"/>
<rect x="769" y="699" width="1" height="1"/>
<rect x="773" y="698" width="4" height="1"/>
<rect x="777" y="700" width="1" height="2"/>
<rect x="778" y="700" width="1" height="1"/>
<rect x="779" y="700" width="1" height="2"/>
<rect x="781" y="698" width="1" height="4"/>
<rect x="782" y="699" width="1" height="2"/>
<rect x="787" y="700" width="1" height="3"/>
<rect x="789" y="700" width="1" height="3"/>
<rect x="792" y="697" width="1" height="1"/>
<rect x="794" y="698" width="4" height="1"/>
<rect x="795" y="698" width="1" height="4"/>
<rect x="796" y="698" width="1" height="2"/>
<rect x="797" y="699" width="1" height="2"/>
<rect x="798" y="697" width="1" height="2"/>
<rect x="799" y="700" width="1" height="2"/>
<rect x="800" y="698" width="1" height="2"/>
<rect x="801" y="701" width="1" height="1"/>
<rect x="803" y="698" width="1" height="3"/>
<rect x="805" y="699" width="1" height="1"/>
<rect x="807" y="697" width="1" height="1"/>
<rect x="808" y="699" width="4" height="1"/>
<rect x="809" y="697" width="1" height="2"/>
<rect x="811" y="699" width="1" height="3"/>
<rect x="812" y="698" width="1" height="3"/>
<rect x="815" y="700" width="1" height="2"/>
<rect x="817" y="697" width="1" height="3"/>
<rect x="819" y="699" width="1" height="4"/>
<rect x="822" y="699" width="1" height="4"/>
<rect x="823" y="701" width="1" height="2"/>
<rect x="826" y="698" width="1" height="3"/>
<rect x="827" y="701" width="1" height="1"/>
<rect x="828" y="698" width="1" height="2"/>
<rect x="830" y="699" width="1" height="3"/>
<rect x="831" y="698" width="1" height="1"/>
<rect x="832" y="699" width="1" height="4"/>
<rect x="833" y="702" width="1" height="1"/>
<rect x="834" y="699" width="1" height="4"/>
<rect x="839" y="699" width="1" height="2"/>
<rect x="842" y="699" width="1" height="2"/>
<rect x="843" y="698" width="1" height="4"/>
<rect x="847" y="699" width="1" height="1"/>
<rect x="848" y="697" width="1" height="4"/>
<rect x="850" y="701" width="1" height="2"/>
<rect x="851" y="702" width="1" height="1"/>
<rect x="852" y="699" width="1" height="4"/>
<rect x="853" y="700" width="1" height="2"/>
<rect x="854" y="699" width="1" height="1"/>
<rect x="860" y="697" width="1" height="3"/>
<rect x="861" y="698" width="1" height="4"/>
<rect x="862" y="697" width="1" height="1"/>
<rect x="863" y="702" width="1" height="1"/>
<rect x="865" y="700" width="1" height="3"/>
<rect x="866" y="699" width="3" height="1"/>
<rect x="867" y="700" width="1" height="3"/>
<rect x="868" y="699" width="1" height="2"/>
<rect x="872" y="697" width="1" height="2"/>
<rect x="873" y="701" width="1" height="1"/>
<rect x="874" y="698" width="1" height="3"/>
<rect x="875" y="701" width="1" height="2"/>
<rect x="876" y="697" width="1" height="2"/>
<rect x="879" y="697" width="1" height="2"/>
<rect x="880" y="698" width="1" height="4"/>
<rect x="887" y="697" width="1" height="2"/>
<rect x="891" y="700" width="1" height="2"/>
<rect x="892" y="698" width="1" height="4"/>
<rect x="895" y="700" width="1" height="2"/>
<rect x="896" y="698" width="1" height="4"/>
<rect x="897" y="697" width="1" height="2"/>
<rect x="898" y="699" width="1" height="4"/>
<rect x="899" y="701" width="1" height="2"/>
<rect x="901" y="699" width="1" height="1"/>
<rect x="902" y="697" width="1" height="3"/>
<rect x="903" y="698" width="4" height="1"/>
<rect x="904" y="701" width="4" height="1"/>
<rect x="905" y="700" width="1" height="2"/>
<rect x="907" y="698" width="1" height="3"/>
<rect x="910" y="697" width="1" height="4"/>
<rect x="912" y="698" width="1" height="3"/>
<rect x="914" y="700" width="1" height="1"/>
<rect x="917" y="701" width="1" height="2"/>
<rect x="919" y="697" width="1" height="3"/>
<rect x="920" y="700" width="1" height="2"/>
<rect x="921" y="701" width="1" height="2"/>
<rect x="923" y="698" width="1" height="4"/>
<rect x="924" y="701" width="2" height="1"/>
<rect x="925" y="698" width="1" height="3"/>
<rect x="927" y="698" width="1" height="2"/>
<rect x="928" y="698" width="1" height="2"/>
<rect x="929" y="698" width="1" height="4"/>
<rect x="930" y="697" width="1" height="2"/>
<rect x="931" y="698" width="1" height="3"/>
<rect x="932" y="698" width="1" height="1"/>
<rect x="933" y="700" width="1" height="2"/>
<rect x="936" y="700" width="1" height="3"/>
<rect x="937" y="697" width="1" height="3"/>
<rect x="939" y="699" width="1" height="1"/>
<rect x="67" y="706" width="1" height="2"/>
<rect x="69" y="707" width="1" height="3"/>
<rect x="71" y="707" width="1" height="4"/>
<rect x="72" y="708" width="1" height="1"/>
<rect x="74" y="707" width="1" height="1"/>
<rect x="75" y="708" width="1" height="2"/>
<rect x="76" y="709" width="1" height="1"/>
<rect x="78" y="706" width="1" height="3"/>
<rect x="79" y="706" width="1" height="4"/>
<rect x="80" y="705" width="1" height="3"/>
<rect x="82" y="709" width="1" height="2"/>
<rect x="83" y="707" width="1" height="4"/>
<rect x="84" y="708" width="1" height="1"/>
<rect x="86" y="708" width="1" height="3"/>
<rect x="87" y="705" width="1" height="4"/>
<rect x="88" y="706" width="1" height="2"/>
<rect x="89" y="708" width="1" height="1"/>
<rect x="90" y="705" width="4" height="1"/>
<rect x="91" y="706" width="1" height="3"/>
<rect x="92" y="708" width="1" height="1"/>
<rect x="94" y="705" width="3" height="1"/>
<rect x="95" y="709" width="1" height="2"/>
<rect x="96" y="707" width="1" height="2"/>
<rect x="97" y="707" width="1" height="4"/>
<rect x="99" y="709" width="1" height="1"/>
<rect x="100" y="705" width="4" height="1"/>
<rect x="101" y="708" width="2" height="1"/>
<rect x="102" y="705" width="1" height="4"/>
<rect x="104" y="705" width="1" height="3"/>
<rect x="106" y="705" width="1" height="3"/>
<rect x="107" y="707" width="1" height="3"/>
<rect x="109" y="705" width="1" height="3"/>
<rect x="110" y="709" width="4" height="1"/>
<rect x="111" y="708" width="1" height="3"/>
<rect x="112" y="705" width="1" height="2"/>
<rect x="113" y="708" width="3" height="1"/>
<rect x="114" y="706" width="1" height="3"/>
<rect x="115" y="705" width="1" height="4"/>
<rect x="116" y="708" width="1" height="3"/>
<rect x="117" y="706" width="1" height="4"/>
<rect x="118" y="705" width="1" height="2"/>
<rect x="122" y="706" width="1" height="2"/>
<rect x="123" y="707" width="1" height="3"/>
<rect x="125" y="706" width="1" height="1"/>
<rect x="126" y="705" width="1" height="2"/>
<rect x="128" y="705" width="1" height="1"/>
<rect x="130" y="708" width="1" height="1"/>
<rect x="134" y="709" width="1" height="2"/>
<rect x="140" y="706" width="1" height="2"/>
<rect x="141" y="705" width="1" height="1"/>
<rect x="146" y="710" width="2" height="1"/>
<rect x="149" y="705" width="1" height="3"/>
<rect x="150" y="705" width="1" height="3"/>
<rect x="153" y="707" width="1" height="2"/>
<rect x="155" y="708" width="1" height="1"/>
<rect x="158" y="706" width="1" height="2"/>
<rect x="159" y="707" width="1" height="4"/>
<rect x="160" y="708" width="1" height="1"/>
<rect x="163" y="706" width="1" height="3"/>
<rect x="165" y="705" width="1" height="4"/>
<rect x="168" y="705" width="1" height="2"/>
<rect x="169" y="710" width="1" height="1"/>
<rect x="170" y="710" width="2" height="1"/>
<rect x="171" y="705" width="1" height="3"/>
<rect x="175" y="709" width="1" height="1"/>
<rect x="180" y="710" width="1" height="1"/>
<rect x="184" y="709" width="2" height="1"/>
<rect x="186" y="705" width="1" height="3"/>
<rect x="187" y="705" width="3" height="1"/>
<rect x="189" y="705" width="1" height="2"/>
<rect x="191" y="708" width="1" height="2"/>
<rect x="193" y="706" width="1" height="4"/>
<rect x="194" y="707" width="1" height="1"/>
<rect x="197" y="706" width="3" height="1"/>
<rect x="198" y="706" width="1" height="4"/>
<rect x="199" y="707" width="1" height="2"/>
<rect x="200" y="707" width="1" height="4"/>
<rect x="201" y="706" width="1" height="4"/>
<rect x="202" y="707" width="1" height="2"/>
<rect x="207" y="708" width="1" height="2"/>
<rect x="208" y="706" width="1" height="2"/>
<rect x="213" y="705" width="1" height="4"/>
<rect x="216" y="709" width="1" height="2"/>
<rect x="218" y="708" width="1" height="3"/>
<rect x="221" y="706" width="1" height="1"/>
<rect x="222" y="708" width="1" height="3"/>
<rect x="223" y="705" width="1" height="4"/>
<rect x="226" y="705" width="1" height="2"/>
<rect x="229" y="707" width="1" height="4"/>
<rect x="230" y="707" width="1" height="4"/>
<rect x="231" y="705" width="1" height="2"/>
<rect x="236" y="707" width="1" height="3"/>
<rect x="237" y="705" width="1" height="4"/>
<rect x="240" y="708" width="1" height="2"/>
<rect x="241" y="705" width="1" height="4"/>
<rect x="242" y="706" width="1" height="4"/>
<rect x="245" y="708" width="1" height="1"/>
<rect x="246" y="705" width="1" height="2"/>
<rect x="247" y="709" width="1" height="1"/>
<rect x="248" y="706" width="1" height="3"/>
<rect x="251" y="707" width="1" height="3"/>
<rect x="252" y="706" width="1" height="1"/>
<rect x="253" y="706" width="1" height="1"/>
<rect x="254" y="708" width="1" height="3"/>
<rect x="255" y="707" width="1" height="2"/>
<rect x="257" y="708" width="2" height="1"/>
<rect x="258" y="707" width="1" height="4"/>
<rect x="260" y="706" width="1" height="2"/>
<rect x="261" y="706" width="1" height="2"/>
<rect x="262" y="706" width="1" height="4"/>
<rect x="265" y="707" width="2" height="1"/>
<rect x="267" y="707" width="1" height="2"/>
<rect x="269" y="705" width="1" height="2"/>
<rect x="271" y="706" width="1" height="3"/>
<rect x="274" y="706" width="1" height="4"/>
<rect x="275" y="705" width="1" height="3"/>
<rect x="277" y="706" width="1" height="1"/>
<rect x="278" y="705" width="3" height="1"/>
<rect x="279" y="709" width="3" height="1"/>
<rect x="280" y="706" width="1" height="3"/>
<rect x="282" y="705" width="1" height="2"/>
<rect x="283" y="706" width="1" height="2"/>
<rect x="284" y="709" width="2" height="1"/>
<rect x="286" y="709" width="1" height="1"/>
<rect x="287" y="708" width="1" height="3"/>
<rect x="289" y="710" width="1" height="1"/>
<rect x="290" y="705" width="1" height="4"/>
<rect x="292" y="705" width="1" height="3"/>
<rect x="293" y="706" width="1" height="4"/>
<rect x="294" y="706" width="1" height="1"/>
<rect x="295" y="709" width="1" height="1"/>
<rect x="296" y="705" width="1" height="4"/>
<rect x="297" y="706" width="3" height="1"/>
<rect x="298" y="705" width="1" height="4"/>
<rect x="300" y="706" width="1" height="3"/>
<rect x="304" y="706" width="1" height="2"/>
<rect x="305" y="708" width="1" height="3"/>
<rect x="306" y="707" width="1" height="2"/>
<rect x="307" y="706" width="1" height="2"/>
<rect x="310" y="707" width="1" height="4"/>
<rect x="311" y="707" width="1" height="4"/>
<rect x="313" y="705" width="4" height="1"/>
<rect x="314" y="708" width="1" height="1"/>
<rect x="315" y="705" width="1" height="2"/>
<rect x="317" y="705" width="1" height="3"/>
<rect x="319" y="706" width="1" height="4"/>
<rect x="323" y="705" width="1" height="4"/>
<rect x="325" y="705" width="1" height="1"/>
<rect x="328" y="707" width="2" height="1"/>
<rect x="332" y="705" width="4" height="1"/>
<rect x="333" y="708" width="1" height="2"/>
<rect x="334" y="709" width="1" height="2"/>
<rect x="335" y="705" width="1" height="2"/>
<rect x="336" y="708" width="1" height="2"/>
<rect x="338" y="706" width="1" height="3"/>
<rect x="339" y="705" width="1" height="3"/>
<rect x="340" y="706" width="1" height="3"/>
<rect x="342" y="706" width="1" height="2"/>
<rect x="343" y="709" width="1" height="2"/>
<rect x="344" y="707" width="1" height="4"/>
<rect x="345" y="707" width="1" height="2"/>
<rect x="348" y="706" width="1" height="4"/>
<rect x="349" y="707" width="1" height="4"/>
<rect x="350" y="707" width="1" height="1"/>
<rect x="353" y="706" width="2" height="1"/>
<rect x="354" y="706" width="1" height="2"/>
<rect x="356" y="707" width="1" height="2"/>
<rect x="358" y="709" width="1" height="2"/>
<rect x="359" y="709" width="2" height="1"/>
<rect x="360" y="706" width="1" height="4"/>
<rect x="361" y="707" width="1" height="4"/>
<rect x="362" y="706" width="1" height="3"/>
<rect x="364" y="706" width="1" height="1"/>
<rect x="365" y="706" width="1" height="3"/>
<rect x="367" y="709" width="4" height="1"/>
<rect x="369" y="709" width="1" height="2"/>
<rect x="371" y="705" width="3" height="1"/>
<rect x="372" y="705" width="3" height="1"/>
<rect x="374" y="706" width="1" height="4"/>
<rect x="375" y="708" width="1" height="3"/>
<rect x="376" y="705" width="1" height="4"/>
<rect x="380" y="706" width="1" height="1"/>
<rect x="381" y="709" width="2" height="1"/>
<rect x="385" y="705" width="1" height="4"/>
<rect x="386" y="706" width="1" height="3"/>
<rect x="387" y="709" width="1" height="1"/>
<rect x="389" y="709" width="1" height="2"/>
<rect x="391" y="707" width="1" height="2"/>
<rect x="393" y="705" width="1" height="4"/>
<rect x="394" y="709" width="1" height="2"/>
<rect x="395" y="709" width="1" height="2"/>
<rect x="396" y="705" width="1" height="3"/>
<rect x="397" y="709" width="1" height="2"/>
<rect x="400" y="708" width="1" height="3"/>
<rect x="403" y="709" width="4" height="1"/>
<rect x="404" y="707" width="1" height="4"/>
<rect x="405" y="708" width="1" height="3"/>
<rect x="407" y="706" width="1" height="4"/>
<rect x="408" y="706" width="1" height="1"/>
<rect x="409" y="706" width="1" height="2"/>
<rect x="410" y="707" width="2" height="1"/>
<rect x="411" y="705" width="1" height="3"/>
<rect x="412" y="708" width="2" height="1"/>
<rect x="413" y="706" width="1" height="3"/>
<rect x="415" y="705" width="1" height="2"/>
<rect x="419" y="707" width="1" height="4"/>
<rect x="420" y="709" width="1" height="2"/>
<rect x="422" y="707" width="1" height="4"/>
<rect x="423" y="708" width="1" height="2"/>
<rect x="424" y="706" width="1" height="3"/>
<rect x="425" y="708" width="1" height="2"/>
<rect x="426" y="709" width="1" height="2"/>
<rect x="428" y="706" width="1" height="3"/>
<rect x="429" y="707" width="1" height="4"/>
<rect x="430" y="708" width="1" height="2"/>
<rect x="432" y="709" width="1" height="2"/>
<rect x="434" y="708" width="1" height="3"/>
<rect x="435" y="705" width="1" height="4"/>
<rect x="436" y="708" width="4" height="1"/>
<rect x="437" y="710" width="2" height="1"/>
<rect x="438" y="705" width="1" height="2"/>
<rect x="439" y="707" width="1" height="1"/>
<rect x="443" y="705" width="1" height="3"/>
<rect x="445" y="708" width="1" height="1"/>
<rect x="446" y="706" width="1" height="3"/>
<rect x="447" y="710" width="2" height="1"/>
<rect x="448" y="707" width="3" height="1"/>
<rect x="449" y="708" width="1" height="1"/>
<rect x="451" y="706" width="1" height="2"/>
<rect x="452" y="707" width="1" height="3"/>
<rect x="453" y="705" width="1" height="1"/>
<rect x="455" y="709" width="1" height="2"/>
<rect x="456" y="706" width="1" height="1"/>
<rect x="457" y="706" width="1" height="4"/>
<rect x="460" y="708" width="1" height="3"/>
<rect x="461" y="707" width="1" height="2"/>
<rect x="462" y="705" width="1" height="1"/>
<rect x="463" y="709" width="1" height="1"/>
<rect x="464" y="709" width="1" height="2"/>
<rect x="465" y="708" width="1" height="2"/>
<rect x="469" y="705" width="1" height="4"/>
<rect x="473" y="706" width="1" height="1"/>
<rect x="474" y="706" width="1" height="2"/>
<rect x="476" y="707" width="1" height="1"/>
<rect x="477" y="707" width="1" height="3"/>
<rect x="479" y="707" width="1" height="3"/>
<rect x="480" y="708" width="1" height="2"/>
<rect x="481" y="706" width="1" height="4"/>
<rect x="483" y="705" width="1" height="2"/>
<rect x="485" y="708" width="1" height="2"/>
<rect x="487" y="705" width="1" height="3"/>
<rect x="488" y="707" width="1" height="4"/>
<rect x="489" y="706" width="1" height="4"/>
<rect x="490" y="709" width="3" height="1"/>
<rect x="492" y="706" width="1" height="4"/>
<rect x="494" y="706" width="1" height="4"/>
<rect x="495" y="706" width="1" height="2"/>
<rect x="496" y="708" width="2" height="1"/>
<rect x="497" y="705" width="1" height="2"/>
<rect x="498" y="706" width="1" height="4"/>
<rect x="499" y="710" width="1" height="1"/>
<rect x="500" y="705" width="1" height="2"/>
<rect x="501" y="705" width="3" height="1"/>
<rect x="502" y="709" width="1" height="1"/>
<rect x="504" y="705" width="1" height="4"/>
<rect x="507" y="706" width="2" height="1"/>
<rect x="508" y="707" width="1" height="2"/>
<rect x="509" y="708" width="4" height="1"/>
<rect x="510" y="707" width="1" height="4"/>
<rect x="512" y="706" width="1" height="4"/>
<rect x="518" y="709" width="2" height="1"/>
<rect x="519" y="706" width="1" height="2"/>
<rect x="521" y="707" width="1" height="3"/>
<rect x="522" y="706" width="1" height="2"/>
<rect x="523" y="706" width="1" height="1"/>
<rect x="524" y="709" width="1" height="2"/>
<rect x="525" y="705" width="1" height="3"/>
<rect x="530" y="707" width="1" height="3"/>
<rect x="531" y="708" width="1" height="2"/>
<rect x="532" y="706" width="1" height="4"/>
<rect x="533" y="707" width="1" height="1"/>
<rect x="535" y="705" width="2" height="1"/>
<rect x="539" y="710" width="1" height="1"/>
<rect x="541" y="707" width="1" height="2"/>
<rect x="546" y="705" width="1" height="4"/>
<rect x="548" y="707" width="1" height="2"/>
<rect x="551" y="709" width="1" height="1"/>
<rect x="554" y="708" width="3" height="1"/>
<rect x="556" y="709" width="2" height="1"/>
<rect x="557" y="705" width="1" height="4"/>
<rect x="558" y="710" width="3" height="1"/>
<rect x="559" y="708" width="1" height="2"/>
<rect x="560" y="707" width="1" height="4"/>
<rect x="561" y="707" width="1" height="4"/>
<rect x="562" y="706" width="1" height="4"/>
<rect x="563" y="707" width="1" height="1"/>
<rect x="564" y="706" width="3" height="1"/>
<rect x="566" y="705" width="1" height="3"/>
<rect x="568" y="706" width="1" height="3"/>
<rect x="571" y="706" width="1" height="2"/>
<rect x="572" y="708" width="1" height="3"/>
<rect x="573" y="706" width="1" height="1"/>
<rect x="574" y="708" width="1" height="2"/>
<rect x="575" y="707" width="1" height="2"/>
<rect x="576" y="708" width="1" height="2"/>
<rect x="578" y="707" width="1" height="2"/>
<rect x="580" y="705" width="1" height="2"/>
<rect x="585" y="706" width="1" height="4"/>
<rect x="586" y="709" width="1" height="2"/>
<rect x="587" y="706" width="1" height="4"/>
<rect x="588" y="705" width="1" height="3"/>
<rect x="590" y="710" width="1" height="1"/>
<rect x="591" y="706" width="1" height="2"/>
<rect x="593" y="707" width="1" height="4"/>
<rect x="594" y="709" width="1" height="2"/>
<rect x="595" y="707" width="1" height="2"/>
<rect x="596" y="709" width="1" height="1"/>
<rect x="608" y="706" width="1" height="2"/>
<rect x="609" y="707" width="1" height="1"/>
<rect x="610" y="705" width="1" height="4"/>
<rect x="613" y="705" width="1" height="4"/>
<rect x="615" y="707" width="1" height="3"/>
<rect x="616" y="710" width="1" height="1"/>
<rect x="618" y="710" width="1" height="1"/>
<rect x="619" y="705" width="1" height="4"/>
<rect x="621" y="708" width="1" height="2"/>
<rect x="622" y="707" width="4" height="1"/>
<rect x="624" y="708" width="1" height="2"/>
<rect x="625" y="705" width="1" height="4"/>
<rect x="626" y="705" width="1" height="4"/>
<rect x="628" y="707" width="1" height="2"/>
<rect x="629" y="709" width="1" height="2"/>
<rect x="631" y="705" width="1" height="3"/>
<rect x="632" y="708" width="1" height="1"/>
<rect x="635" y="709" width="2" height="1"/>
<rect x="638" y="710" width="4" height="1"/>
<rect x="639" y="708" width="1" height="2"/>
<rect x="641" y="708" width="1" height="3"/>
<rect x="642" y="705" width="1" height="4"/>
<rect x="649" y="707" width="1" height="4"/>
<rect x="651" y="708" width="1" height="3"/>
<rect x="652" y="706" width="1" height="3"/>
<rect x="653" y="707" width="1" height="4"/>
<rect x="656" y="705" width="1" height="3"/>
<rect x="658" y="706" width="1" height="4"/>
<rect x="659" y="708" width="1" height="1"/>
<rect x="661" y="705" width="1" height="3"/>
<rect x="664" y="708" width="1" height="2"/>
<rect x="666" y="705" width="1" height="4"/>
<rect x="667" y="708" width="1" height="2"/>
<rect x="668" y="706" width="1" height="2"/>
<rect x="669" y="710" width="1" height="1"/>
<rect x="670" y="708" width="1" height="3"/>
<rect x="671" y="710" width="1" height="1"/>
<rect x="672" y="710" width="4" height="1"/>
<rect x="674" y="707" width="1" height="1"/>
<rect x="678" y="706" width="1" height="2"/>
<rect x="679" y="705" width="1" height="4"/>
<rect x="681" y="709" width="1" height="2"/>
<rect x="682" y="708" width="1" height="1"/>
<rect x="683" y="707" width="1" height="2"/>
<rect x="684" y="706" width="1" height="3"/>
<rect x="685" y="705" width="1" height="3"/>
<rect x="691" y="708" width="1" height="2"/>
<rect x="692" y="708" width="1" height="1"/>
<rect x="696" y="709" width="2" height="1"/>
<rect x="701" y="708" width="1" height="1"/>
<rect x="702" y="707" width="1" height="2"/>
<rect x="703" y="707" width="2" height="1"/>
<rect x="704" y="707" width="1" height="3"/>
<rect x="706" y="706" width="1" height="3"/>
<rect x="707" y="706" width="1" height="3"/>
<rect x="711" y="707" width="1" height="1"/>
<rect x="716" y="710" width="1" height="1"/>
<rect x="717" y="705" width="1" height="3"/>
<rect x="718" y="705" width="1" height="2"/>
<rect x="719" y="705" width="1" height="3"/>
<rect x="720" y="707" width="1" height="4"/>
<rect x="722" y="708" width="2" height="1"/>
<rect x="723" y="705" width="4" height="1"/>
<rect x="724" y="709" width="1" height="2"/>
<rect x="725" y="707" width="1" height="3"/>
<rect x="726" y="707" width="1" height="4"/>
<rect x="728" y="707" width="1" height="3"/>
<rect x="729" y="709" width="1" height="2"/>
<rect x="730" y="707" width="1" height="3"/>
<rect x="732" y="707" width="1" height="2"/>
<rect x="734" y="705" width="1" height="2"/>
<rect x="738" y="708" width="4" height="1"/>
<rect x="739" y="705" width="1" height="2"/>
<rect x="740" y="707" width="1" height="3"/>
<rect x="741" y="708" width="1" height="1"/>
<rect x="743" y="708" width="1" height="2"/>
<rect x="746" y="710" width="1" height="1"/>
<rect x="747" y="705" width="1" height="2"/>
<rect x="749" y="710" width="1" height="1"/>
<rect x="750" y="709" width="1" height="2"/>
<rect x="751" y="705" width="1" height="2"/>
<rect x="752" y="708" width="1" height="2"/>
<rect x="753" y="709" width="2" height="1"/>
<rect x="754" y="708" width="1" height="1"/>
<rect x="755" y="709" width="1" height="2"/>
<rect x="756" y="705" width="1" height="1"/>
<rect x="757" y="708" width="1" height="3"/>
<rect x="758" y="707" width="1" height="4"/>
<rect x="759" y="706" width="3" height="1"/>
<rect x="760" y="709" width="1" height="2"/>
<rect x="762" y="706" width="1" height="4"/>
<rect x="764" y="707" width="1" height="3"/>
<rect x="765" y="707" width="1" height="4"/>
<rect x="766" y="708" width="1" height="3"/>
<rect x="767" y="706" width="1" height="4"/>
<rect x="768" y="708" width="1" height="2"/>
<rect x="769" y="707" width="1" height="4"/>
<rect x="770" y="706" width="1" height="4"/>
<rect x="771" y="708" width="1" height="1"/>
<rect x="773" y="708" width="1" height="2"/>
<rect x="774" y="705" width="1" height="1"/>
<rect x="776" y="705" width="1" height="3"/>
<rect x="778" y="705" width="1" height="4"/>
<rect x="779" y="706" width="1" height="4"/>
<rect x="781" y="705" width="1" height="2"/>
<rect x="783" y="709" width="1" height="1"/>
<rect x="788" y="709" width="1" height="2"/>
<rect x="789" y="710" width="4" height="1"/>
<rect x="790" y="708" width="1" height="2"/>
<rect x="791" y="707" width="1" height="1"/>
<rect x="792" y="706" width="1" height="4"/>
<rect x="793" y="707" width="1" height="2"/>
<rect x="794" y="707" width="1" height="4"/>
<rect x="795" y="708" width="3" height="1"/>
<rect x="796" y="707" width="1" height="2"/>
<rect x="799" y="708" width="1" height="1"/>
<rect x="801" y="706" width="1" height="3"/>
<rect x="802" y="707" width="1" height="3"/>
<rect x="804" y="707" width="1" height="1"/>
<rect x="805" y="707" width="1" height="2"/>
<rect x="808" y="705" width="1" height="2"/>
<rect x="809" y="705" width="1" height="3"/>
<rect x="810" y="710" width="2" height="1"/>
<rect x="811" y="705" width="1" height="3"/>
<rect x="814" y="709" width="4" height="1"/>
<rect x="815" y="709" width="1" height="2"/>
<rect x="816" y="705" width="1" height="2"/>
<rect x="817" y="706" width="1" height="2"/>
<rect x="820" y="706" width="1" height="2"/>
<rect x="822" y="707" width="1" height="3"/>
<rect x="823" y="707" width="1" height="3"/>
<rect x="824" y="706" width="1" height="4"/>
<rect x="827" y="706" width="1" height="4"/>
<rect x="830" y="705" width="1" height="3"/>
<rect x="832" y="706" width="1" height="3"/>
<rect x="833" y="710" width="2" height="1"/>
<rect x="834" y="705" width="1" height="1"/>
<rect x="836" y="705" width="1" height="4"/>
<rect x="838" y="707" width="1" height="2"/>
<rect x="842" y="707" width="1" height="2"/>
<rect x="845" y="706" width="1" height="1"/>
<rect x="846" y="707" width="1" height="4"/>
<rect x="847" y="705" width="1" height="2"/>
<rect x="848" y="706" width="1" height="3"/>
<rect x="849" y="705" width="1" height="4"/>
<rect x="851" y="707" width="1" height="4"/>
<rect x="853" y="707" width="1" height="4"/>
<rect x="855" y="705" width="1" height="3"/>
<rect x="856" y="709" width="1" height="2"/>
<rect x="857" y="705" width="1" height="3"/>
<rect x="859" y="709" width="4" height="1"/>
<rect x="860" y="705" width="1" height="2"/>
<rect x="861" y="710" width="4" height="1"/>
<rect x="862" y="705" width="1" height="1"/>
<rect x="863" y="707" width="1" height="3"/>
<rect x="864" y="705" width="4" height="1"/>
<rect x="865" y="710" width="1" height="1"/>
<rect x="868" y="706" width="1" height="2"/>
<rect x="870" y="706" width="4" height="1"/>
<rect x="872" y="706" width="1" height="3"/>
<rect x="873" y="705" width="1" height="4"/>
<rect x="874" y="705" width="1" height="2"/>
<rect x="875" y="705" width="1" height="4"/>
<rect x="876" y="709" width="1" height="2"/>
<rect x="877" y="710" width="1" height="1"/>
<rect x="879" y="706" width="1" height="4"/>
<rect x="880" y="707" width="1" height="4"/>
<rect x="881" y="708" width="1" height="2"/>
<rect x="882" y="710" width="3" height="1"/>
<rect x="884" y="709" width="1" height="2"/>
<rect x="885" y="705" width="1" height="2"/>
<rect x="886" y="707" width="1" height="2"/>
<rect x="887" y="706" width="1" height="3"/>
<rect x="888" y="706" width="1" height="4"/>
<rect x="890" y="705" width="1" height="2"/>
<rect x="892" y="707" width="1" height="1"/>
<rect x="893" y="706" width="1" height="1"/>
<rect x="894" y="705" width="1" height="3"/>
<rect x="895" y="706" width="1" height="2"/>
<rect x="897" y="706" width="1" height="1"/>
<rect x="898" y="707" width="1" height="1"/>
<rect x="899" y="706" width="3" height="1"/>
<rect x="902" y="707" width="1" height="1"/>
<rect x="903" y="705" width="1" height="2"/>
<rect x="904" y="705" width="1" height="4"/>
<rect x="905" y="705" width="1" height="4"/>
<rect x="906" y="706" width="1" height="1"/>
<rect x="908" y="708" width="1" height="2"/>
<rect x="909" y="705" width="1" height="2"/>
<rect x="913" y="707" width="1" height="4"/>
<rect x="915" y="709" width="3" height="1"/>
<rect x="916" y="706" width="1" height="2"/>
<rect x="919" y="709" width="1" height="1"/>
<rect x="920" y="707" width="1" height="2"/>
<rect x="922" y="707" width="1" height="2"/>
<rect x="924" y="705" width="3" height="1"/>
<rect x="925" y="705" width="4" height="1"/>
<rect x="926" y="706" width="1" height="2"/>
<rect x="933" y="706" width="1" height="3"/>
<rect x="934" y="707" width="1" height="2"/>
<rect x="936" y="707" width="1" height="4"/>
<rect x="937" y="707" width="1" height="3"/>
<rect x="939" y="709" width="1" height="2"/>
<rect x="940" y="709" width="1" height="2"/>
<rect x="66" y="713" width="1" height="4"/>
<rect x="67" y="716" width="1" height="2"/>
<rect x="70" y="718" width="3" height="1"/>
<rect x="71" y="714" width="1" height="2"/>
<rect x="73" y="713" width="1" height="4"/>
<rect x="75" y="713" width="1" height="1"/>
<rect x="79" y="713" width="1" height="3"/>
<rect x="80" y="716" width="1" height="3"/>
<rect x="81" y="713" width="1" height="2"/>
<rect x="83" y="713" width="1" height="3"/>
<rect x="84" y="714" width="1" height="3"/>
<rect x="89" y="713" width="1" height="3"/>
<rect x="90" y="714" width="1" height="1"/>
<rect x="91" y="713" width="1" height="2"/>
<rect x="92" y="715" width="1" height="2"/>
<rect x="93" y="718" width="1" height="1"/>
<rect x="94" y="716" width="1" height="2"/>
<rect x="95" y="717" width="1" height="2"/>
<rect x="97" y="716" width="1" height="2"/>
<rect x="98" y="713" width="1" height="4"/>
<rect x="100" y="715" width="1" height="2"/>
<rect x="101" y="717" width="1" height="2"/>
<rect x="103" y="713" width="1" height="4"/>
<rect x="105" y="715" width="1" height="2"/>
<rect x="107" y="715" width="2" height="1"/>
<rect x="108" y="716" width="1" height="3"/>
<rect x="110" y="714" width="1" height="2"/>
<rect x="111" y="713" width="2" height="1"/>
<rect x="112" y="715" width="1" height="4"/>
<rect x="115" y="718" width="4" height="1"/>
<rect x="116" y="713" width="1" height="3"/>
<rect x="121" y="715" width="1" height="1"/>
<rect x="122" y="715" width="1" height="4"/>
<rect x="124" y="713" width="1" height="2"/>
<rect x="125" y="713" width="1" height="4"/>
<rect x="126" y="716" width="1" height="2"/>
<rect x="130" y="714" width="1" height="2"/>
<rect x="132" y="713" width="4" height="1"/>
<rect x="133" y="713" width="1" height="2"/>
<rect x="135" y="717" width="1" height="2"/>
<rect x="137" y="713" width="4" height="1"/>
<rect x="138" y="714" width="1" height="4"/>
<rect x="139" y="715" width="1" height="2"/>
<rect x="142" y="713" width="1" height="3"/>
<rect x="144" y="715" width="1" height="4"/>
<rect x="145" y="714" width="1" height="3"/>
<rect x="147" y="713" width="1" height="4"/>
<rect x="149" y="715" width="1" height="1"/>
<rect x="151" y="713" width="1" height="4"/>
<rect x="152" y="714" width="1" height="1"/>
<rect x="155" y="713" width="1" height="2"/>
<rect x="157" y="716" width="1" height="2"/>
<rect x="162" y="714" width="1" height="4"/>
<rect x="168" y="714" width="1" height="4"/>
<rect x="169" y="714" width="2" height="1"/>
<rect x="170" y="716" width="1" height="2"/>
<rect x="171" y="714" width="1" height="3"/>
<rect x="175" y="716" width="1" height="1"/>
<rect x="176" y="713" width="1" height="1"/>
<rect x="177" y="714" width="1" height="2"/>
<rect x="178" y="713" width="1" height="2"/>
<rect x="180" y="716" width="1" height="2"/>
<rect x="181" y="718" width="4" height="1"/>
<rect x="182" y="717" width="1" height="1"/>
<rect x="183" y="717" width="4" height="1"/>
<rect x="185" y="714" width="1" height="2"/>
<rect x="189" y="715" width="1" height="2"/>
<rect x="190" y="715" width="1" height="2"/>
<rect x="192" y="716" width="1" height="2"/>
<rect x="195" y="715" width="1" height="4"/>
<rect x="196" y="716" width="1" height="1"/>
<rect x="200" y="715" width="1" height="4"/>
<rect x="201" y="713" width="1" height="1"/>
<rect x="202" y="715" width="1" height="1"/>
<rect x="203" y="713" width="1" height="3"/>
<rect x="204" y="716" width="3" height="1"/>
<rect x="206" y="714" width="1" height="3"/>
<rect x="207" y="714" width="1" height="1"/>
<rect x="208" y="716" width="1" height="1"/>
<rect x="209" y="713" width="1" height="3"/>
<rect x="211" y="714" width="1" height="4"/>
<rect x="212" y="713" width="1" height="3"/>
<rect x="213" y="714" width="1" height="4"/>
<rect x="215" y="715" width="1" height="3"/>
<rect x="216" y="714" width="1" height="4"/>
<rect x="219" y="713" width="1" height="2"/>
<rect x="220" y="716" width="1" height="3"/>
<rect x="223" y="714" width="1" height="3"/>
<rect x="225" y="715" width="1" height="4"/>
<rect x="226" y="715" width="2" height="1"/>
<rect x="227" y="714" width="1" height="4"/>
<rect x="228" y="714" width="1" height="2"/>
<rect x="230" y="716" width="1" height="2"/>
<rect x="231" y="716" width="1" height="1"/>
<rect x="232" y="716" width="1" height="3"/>
<rect x="233" y="717" width="1" height="2"/>
<rect x="234" y="714" width="1" height="2"/>
<rect x="240" y="717" width="1" height="2"/>
<rect x="241" y="716" width="1" height="2"/>
<rect x="242" y="714" width="4" height="1"/>
<rect x="243" y="715" width="1" height="4"/>
<rect x="246" y="717" width="1" height="1"/>
<rect x="248" y="716" width="1" height="3"/>
<rect x="249" y="713" width="3" height="1"/>
<rect x="251" y="713" width="4" height="1"/>
<rect x="252" y="715" width="1" height="3"/>
<rect x="253" y="718" width="2" height="1"/>
<rect x="255" y="713" width="1" height="3"/>
<rect x="256" y="715" width="1" height="4"/>
<rect x="257" y="715" width="1" height="2"/>
<rect x="258" y="715" width="1" height="4"/>
<rect x="263" y="714" width="1" height="2"/>
<rect x="264" y="715" width="1" height="2"/>
<rect x="265" y="715" width="4" height="1"/>
<rect x="266" y="715" width="3" height="1"/>
<rect x="269" y="715" width="1" height="3"/>
<rect x="270" y="716" width="3" height="1"/>
<rect x="271" y="715" width="1" height="4"/>
<rect x="275" y="713" width="1" height="3"/>
<rect x="278" y="715" width="1" height="4"/>
<rect x="279" y="714" width="1" height="1"/>
<rect x="280" y="714" width="3" height="1"/>
<rect x="281" y="714" width="1" height="4"/>
<rect x="285" y="713" width="1" height="3"/>
<rect x="286" y="713" width="1" height="4"/>
<rect x="288" y="713" width="1" height="4"/>
<rect x="291" y="714" width="1" height="2"/>
<rect x="292" y="714" width="1" height="4"/>
<rect x="293" y="714" width="4" height="1"/>
<rect x="299" y="713" width="1" height="2"/>
<rect x="300" y="716" width="1" height="1"/>
<rect x="301" y="714" width="1" height="1"/>
<rect x="304" y="717" width="3" height="1"/>
<rect x="306" y="717" width="1" height="2"/>
<rect x="307" y="716" width="1" height="2"/>
<rect x="308" y="715" width="1" height="3"/>
<rect x="309" y="718" width="2" height="1"/>
<rect x="311" y="713" width="1" height="4"/>
<rect x="312" y="715" width="1" height="2"/>
<rect x="313" y="713" width="1" height="3"/>
<rect x="315" y="715" width="1" height="3"/>
<rect x="316" y="715" width="1" height="2"/>
<rect x="317" y="714" width="1" height="4"/>
<rect x="318" y="716" width="1" height="1"/>
<rect x="320" y="717" width="1" height="2"/>
<rect x="321" y="713" width="1" height="4"/>
<rect x="323" y="713" width="1" height="2"/>
<rect x="324" y="716" width="1" height="3"/>
<rect x="325" y="714" width="1" height="4"/>
<rect x="327" y="713" width="1" height="2"/>
<rect x="328" y="717" width="1" height="2"/>
<rect x="329" y="713" width="3" height="1"/>
<rect x="331" y="715" width="1" height="2"/>
<rect x="332" y="716" width="3" height="1"/>
<rect x="333" y="713" width="1" height="3"/>
<rect x="334" y="713" width="1" height="2"/>
<rect x="335" y="714" width="1" height="2"/>
<rect x="336" y="715" width="1" height="4"/>
<rect x="337" y="713" width="1" height="3"/>
<rect x="339" y="713" width="1" height="4"/>
<rect x="340" y="717" width="1" height="2"/>
<rect x="342" y="716" width="1" height="1"/>
<rect x="344" y="715" width="1" height="2"/>
<rect x="345" y="715" width="1" height="2"/>
<rect x="347" y="717" width="1" height="1"/>
<rect x="349" y="716" width="1" height="2"/>
<rect x="350" y="718" width="1" height="1"/>
<rect x="351" y="717" width="3" height="1"/>
<rect x="352" y="716" width="1" height="2"/>
<rect x="353" y="715" width="1" height="2"/>
<rect x="354" y="713" width="1" height="4"/>
<rect x="355" y="713" width="1" height="2"/>
<rect x="356" y="714" width="1" height="2"/>
<rect x="357" y="715" width="1" height="4"/>
<rect x="358" y="715" width="4" height="1"/>
<rect x="359" y="718" width="4" height="1"/>
<rect x="360" y="715" width="1" height="4"/>
<rect x="361" y="714" width="1" height="4"/>
<rect x="363" y="715" width="1" height="2"/>
<rect x="364" y="714" width="1" height="2"/>
<rect x="365" y="713" width="1" height="1"/>
<rect x="366" y="713" width="1" height="4"/>
<rect x="367" y="718" width="4" height="1"/>
<rect x="368" y="714" width="1" height="4"/>
<rect x="369" y="718" width="4" height="1"/>
<rect x="370" y="717" width="1" height="2"/>
<rect x="371" y="715" width="1" height="1"/>
<rect x="375" y="713" width="1" height="3"/>
<rect x="376" y="713" width="3" height="1"/>
<rect x="378" y="715" width="1" height="2"/>
<rect x="379" y="715" width="1" height="4"/>
<rect x="380" y="713" width="1" height="4"/>
<rect x="381" y="715" width="4" height="1"/>
<rect x="382" y="715" width="1" height="1"/>
<rect x="386" y="718" width="1" height="1"/>
<rect x="387" y="714" width="1" height="4"/>
<rect x="388" y="717" width="1" height="2"/>
<rect x="390" y="715" width="1" height="1"/>
<rect x="391" y="713" width="1" height="4"/>
<rect x="392" y="714" width="1" height="2"/>
<rect x="393" y="717" width="1" height="2"/>
<rect x="394" y="717" width="1" height="2"/>
<rect x="395" y="714" width="4" height="1"/>
<rect x="397" y="713" width="1" height="4"/>
<rect x="398" y="716" width="2" height="1"/>
<rect x="401" y="716" width="2" height="1"/>
<rect x="403" y="717" width="4" height="1"/>
<rect x="406" y="715" width="1" height="1"/>
<rect x="407" y="718" width="1" height="1"/>
<rect x="408" y="715" width="1" height="1"/>
<rect x="409" y="716" width="1" height="1"/>
<rect x="412" y="716" width="1" height="2"/>
<rect x="413" y="713" width="1" height="4"/>
<rect x="414" y="717" width="1" height="2"/>
<rect x="415" y="713" width="1" height="3"/>
<rect x="417" y="718" width="2" height="1"/>
<rect x="418" y="715" width="1" height="4"/>
<rect x="419" y="714" width="1" height="1"/>
<rect x="420" y="718" width="2" height="1"/>
<rect x="421" y="716" width="1" height="1"/>
<rect x="423" y="717" width="1" height="2"/>
<rect x="425" y="715" width="1" height="2"/>
<rect x="426" y="714" width="1" height="3"/>
<rect x="427" y="716" width="1" height="1"/>
<rect x="429" y="715" width="1" height="1"/>
<rect x="430" y="713" width="4" height="1"/>
<rect x="431" y="714" width="1" height="2"/>
<rect x="432" y="716" width="1" height="2"/>
<rect x="433" y="714" width="1" height="3"/>
<rect x="434" y="717" width="1" height="2"/>
<rect x="435" y="715" width="1" height="4"/>
<rect x="437" y="718" width="3" height="1"/>
<rect x="438" y="716" width="1" height="2"/>
<rect x="439" y="713" width="1" height="1"/>
<rect x="441" y="716" width="1" height="3"/>
<rect x="442" y="716" width="1" height="1"/>
<rect x="443" y="715" width="1" height="1"/>
<rect x="444" y="717" width="1" height="2"/>
<rect x="445" y="718" width="1" height="1"/>
<rect x="446" y="715" width="1" height="4"/>
<rect x="448" y="716" width="1" height="3"/>
<rect x="449" y="714" width="1" height="4"/>
<rect x="453" y="716" width="1" height="2"/>
<rect x="454" y="715" width="1" height="4"/>
<rect x="455" y="716" width="1" height="2"/>
<rect x="456" y="713" width="1" height="3"/>
<rect x="460" y="713" width="1" height="3"/>
<rect x="462" y="716" width="1" height="3"/>
<rect x="464" y="717" width="1" height="2"/>
<rect x="465" y="716" width="1" height="2"/>
<rect x="466" y="717" width="1" height="1"/>
<rect x="467" y="713" width="1" height="4"/>
<rect x="469" y="715" width="1" height="1"/>
<rect x="471" y="717" width="1" height="2"/>
<rect x="473" y="718" width="3" height="1"/>
<rect x="474" y="713" width="1" height="3"/>
<rect x="479" y="714" width="1" height="2"/>
<rect x="481" y="714" width="1" height="4"/>
<rect x="485" y="716" width="1" height="1"/>
<rect x="488" y="713" width="1" height="2"/>
<rect x="489" y="715" width="1" height="3"/>
<rect x="490" y="714" width="1" height="1"/>
<rect x="491" y="714" width="1" height="3"/>
<rect x="492" y="715" width="1" height="2"/>
<rect x="493" y="713" width="1" height="2"/>
<rect x="495" y="717" width="1" height="2"/>
<rect x="496" y="713" width="1" height="2"/>
<rect x="498" y="713" width="1" height="3"/>
<rect x="499" y="715" width="1" height="2"/>
<rect x="500" y="713" width="1" height="2"/>
<rect x="501" y="715" width="1" height="2"/>
<rect x="505" y="717" width="2" height="1"/>
<rect x="506" y="718" width="3" height="1"/>
<rect x="507" y="713" width="1" height="3"/>
<rect x="510" y="715" width="1" height="2"/>
<rect x="511" y="717" width="1" height="2"/>
<rect x="512" y="717" width="1" height="2"/>
<rect x="516" y="716" width="2" height="1"/>
<rect x="517" y="716" width="3" height="1"/>
<rect x="519" y="717" width="4" height="1"/>
<rect x="520" y="714" width="1" height="2"/>
<rect x="522" y="714" width="1" height="4"/>
<rect x="528" y="715" width="1" height="2"/>
<rect x="529" y="713" width="1" height="3"/>
<rect x="530" y="715" width="1" height="2"/>
<rect x="531" y="713" width="3" height="1"/>
<rect x="532" y="718" width="1" height="1"/>
<rect x="533" y="716" width="2" height="1"/>
<rect x="534" y="715" width="1" height="2"/>
<rect x="535" y="714" width="1" height="2"/>
<rect x="540" y="718" width="4" height="1"/>
<rect x="541" y="713" width="1" height="4"/>
<rect x="544" y="713" width="1" height="2"/>
<rect x="545" y="716" width="1" height="1"/>
<rect x="546" y="716" width="1" height="2"/>
<rect x="547" y="717" width="1" height="2"/>
<rect x="548" y="715" width="1" height="2"/>
<rect x="549" y="713" width="1" height="1"/>
<rect x="550" y="714" width="1" height="2"/>
<rect x="551" y="715" width="1" height="2"/>
<rect x="553" y="715" width="1" height="3"/>
<rect x="554" y="714" width="1" height="1"/>
<rect x="555" y="715" width="1" height="4"/>
<rect x="556" y="716" width="1" height="3"/>
<rect x="557" y="717" width="1" height="2"/>
<rect x="560" y="714" width="1" height="4"/>
<rect x="566" y="715" width="1" height="2"/>
<rect x="568" y="718" width="1" height="1"/>
<rect x="569" y="715" width="1" height="2"/>
<rect x="572" y="717" width="1" height="2"/>
<rect x="574" y="714" width="1" height="4"/>
<rect x="577" y="714" width="1" height="2"/>
<rect x="578" y="714" width="1" height="3"/>
<rect x="581" y="715" width="1" height="2"/>
<rect x="582" y="716" width="1" height="3"/>
<rect x="583" y="717" width="1" height="1"/>
<rect x="584" y="716" width="1" height="1"/>
<rect x="586" y="713" width="1" height="2"/>
<rect x="587" y="717" width="1" height="2"/>
<rect x="588" y="716" width="1" height="2"/>
<rect x="589" y="714" width="4" height="1"/>
<rect x="592" y="714" width="1" height="2"/>
<rect x="594" y="716" width="1" height="3"/>
<rect x="595" y="715" width="2" height="1"/>
<rect x="596" y="713" width="1" height="2"/>
<rect x="598" y="715" width="1" height="4"/>
<rect x="599" y="715" width="1" height="4"/>
<rect x="601" y="713" width="1" height="1"/>
<rect x="604" y="713" width="1" height="1"/>
<rect x="605" y="714" width="1" height="4"/>
<rect x="606" y="713" width="1" height="2"/>
<rect x="607" y="717" width="1" height="1"/>
<rect x="608" y="714" width="1" height="2"/>
<rect x="610" y="713" width="1" height="3"/>
<rect x="611" y="714" width="1" height="4"/>
<rect x="613" y="716" width="1" height="1"/>
<rect x="615" y="714" width="1" height="3"/>
<rect x="616" y="714" width="1" height="3"/>
<rect x="618" y="715" width="1" height="2"/>
<rect x="621" y="713" width="1" height="4"/>
<rect x="624" y="713" width="1" height="3"/>
<rect x="626" y="715" width="1" height="1"/>
<rect x="627" y="713" width="1" height="4"/>
<rect x="630" y="715" width="1" height="2"/>
<rect x="631" y="715" width="1" height="2"/>
<rect x="633" y="713" width="1" height="2"/>
<rect x="634" y="716" width="1" height="1"/>
<rect x="635" y="713" width="1" height="2"/>
<rect x="637" y="718" width="4" height="1"/>
<rect x="644" y="715" width="1" height="2"/>
<rect x="646" y="715" width="1" height="4"/>
<rect x="648" y="713" width="1" height="2"/>
<rect x="649" y="716" width="1" height="1"/>
<rect x="650" y="717" width="1" height="1"/>
<rect x="651" y="713" width="1" height="2"/>
<rect x="652" y="715" width="1" height="1"/>
<rect x="654" y="714" width="3" height="1"/>
<rect x="655" y="717" width="2" height="1"/>
<rect x="656" y="716" width="2" height="1"/>
<rect x="657" y="713" width="1" height="2"/>
<rect x="658" y="715" width="1" height="2"/>
<rect x="659" y="716" width="1" height="2"/>
<rect x="660" y="716" width="1" height="2"/>
<rect x="662" y="713" width="1" height="2"/>
<rect x="663" y="714" width="1" height="4"/>
<rect x="664" y="713" width="3" height="1"/>
<rect x="666" y="718" width="2" height="1"/>
<rect x="669" y="717" width="1" height="2"/>
<rect x="671" y="714" width="1" height="2"/>
<rect x="673" y="716" width="1" height="2"/>
<rect x="677" y="716" width="1" height="1"/>
<rect x="678" y="713" width="1" height="1"/>
<rect x="681" y="717" width="1" height="2"/>
<rect x="682" y="715" width="1" height="4"/>
<rect x="684" y="715" width="1" height="4"/>
<rect x="685" y="714" width="1" height="3"/>
<rect x="690" y="716" width="1" height="1"/>
<rect x="692" y="717" width="1" height="1"/>
<rect x="693" y="716" width="1" height="2"/>
<rect x="694" y="714" width="1" height="1"/>
<rect x="695" y="715" width="1" height="2"/>
<rect x="696" y="714" width="1" height="2"/>
<rect x="697" y="713" width="1" height="3"/>
<rect x="698" y="713" width="1" height="2"/>
<rect x="700" y="713" width="1" height="3"/>
<rect x="702" y="713" width="1" height="4"/>
<rect x="703" y="715" width="1" height="2"/>
<rect x="705" y="716" width="1" height="2"/>
<rect x="706" y="715" width="1" height="2"/>
<rect x="708" y="715" width="1" height="3"/>
<rect x="712" y="713" width="1" height="3"/>
<rect x="715" y="715" width="1" height="3"/>
<rect x="716" y="715" width="1" height="4"/>
<rect x="717" y="716" width="4" height="1"/>
<rect x="719" y="714" width="1" height="4"/>
<rect x="720" y="715" width="1" height="2"/>
<rect x="721" y="714" width="1" height="2"/>
<rect x="723" y="716" width="1" height="1"/>
<rect x="724" y="716" width="1" height="2"/>
<rect x="726" y="714" width="1" height="3"/>
<rect x="727" y="715" width="1" height="2"/>
<rect x="728" y="713" width="1" height="2"/>
<rect x="729" y="715" width="1" height="2"/>
<rect x="732" y="714" width="1" height="1"/>
<rect x="733" y="716" width="1" height="2"/>
<rect x="736" y="717" width="1" height="1"/>
<rect x="738" y="714" width="1" height="2"/>
<rect x="739" y="716" width="1" height="2"/>
<rect x="743" y="715" width="3" height="1"/>
<rect x="744" y="715" width="1" height="2"/>
<rect x="745" y="713" width="2" height="1"/>
<rect x="747" y="716" width="1" height="2"/>
<rect x="748" y="713" width="1" height="3"/>
<rect x="749" y="713" width="1" height="2"/>
<rect x="750" y="716" width="1" height="3"/>
<rect x="751" y="718" width="1" height="1"/>
<rect x="752" y="718" width="3" height="1"/>
<rect x="755" y="714" width="1" height="3"/>
<rect x="756" y="716" width="1" height="1"/>
<rect x="757" y="717" width="1" height="1"/>
<rect x="758" y="715" width="1" height="3"/>
<rect x="759" y="714" width="1" height="4"/>
<rect x="760" y="716" width="1" height="2"/>
<rect x="762" y="716" width="1" height="2"/>
<rect x="763" y="717" width="1" height="2"/>
<rect x="764" y="716" width="1" height="1"/>
<rect x="765" y="715" width="1" height="2"/>
<rect x="766" y="717" width="1" height="2"/>
<rect x="767" y="716" width="1" height="1"/>
<rect x="768" y="716" width="1" height="1"/>
<rect x="769" y="717" width="1" height="1"/>
<rect x="772" y="717" width="1" height="2"/>
<rect x="773" y="714" width="1" height="3"/>
<rect x="774" y="713" width="1" height="1"/>
<rect x="775" y="717" width="1" height="2"/>
<rect x="776" y="716" width="1" height="1"/>
<rect x="777" y="714" width="1" height="4"/>
<rect x="778" y="714" width="1" height="3"/>
<rect x="781" y="716" width="1" height="2"/>
<rect x="782" y="718" width="1" height="1"/>
<rect x="785" y="715" width="1" height="1"/>
<rect x="786" y="715" width="1" height="3"/>
<rect x="788" y="715" width="1" height="4"/>
<rect x="789" y="714" width="1" height="2"/>
<rect x="790" y="715" width="1" height="2"/>
<rect x="791" y="715" width="3" height="1"/>
<rect x="794" y="715" width="1" height="1"/>
<rect x="796" y="716" width="1" height="2"/>
<rect x="797" y="716" width="1" height="1"/>
<rect x="798" y="713" width="1" height="1"/>
<rect x="799" y="713" width="1" height="4"/>
<rect x="802" y="716" width="1" height="2"/>
<rect x="803" y="715" width="1" height="4"/>
<rect x="804" y="714" width="1" height="3"/>
<rect x="805" y="714" width="1" height="2"/>
<rect x="806" y="714" width="1" height="4"/>
<rect x="807" y="715" width="3" height="1"/>
<rect x="809" y="717" width="1" height="2"/>
<rect x="810" y="714" width="1" height="2"/>
<rect x="811" y="713" width="1" height="1"/>
<rect x="812" y="714" width="1" height="1"/>
<rect x="813" y="713" width="1" height="4"/>
<rect x="814" y="713" width="1" height="4"/>
<rect x="819" y="718" width="1" height="1"/>
<rect x="820" y="717" width="1" height="2"/>
<rect x="821" y="713" width="1" height="2"/>
<rect x="822" y="713" width="1" height="2"/>
<rect x="823" y="714" width="1" height="4"/>
<rect x="825" y="716" width="2" height="1"/>
<rect x="826" y="716" width="1" height="2"/>
<rect x="827" y="715" width="1" height="2"/>
<rect x="828" y="715" width="1" height="4"/>
<rect x="829" y="716" width="1" height="2"/>
<rect x="831" y="713" width="1" height="4"/>
<rect x="834" y="715" width="1" height="3"/>
<rect x="836" y="714" width="1" height="2"/>
<rect x="838" y="714" width="1" height="4"/>
<rect x="840" y="715" width="4" height="1"/>
<rect x="841" y="714" width="3" height="1"/>
<rect x="842" y="715" width="1" height="1"/>
<rect x="843" y="715" width="1" height="3"/>
<rect x="844" y="716" width="1" height="3"/>
<rect x="845" y="715" width="1" height="3"/>
<rect x="846" y="717" width="2" height="1"/>
<rect x="848" y="713" width="1" height="3"/>
<rect x="851" y="715" width="1" height="1"/>
<rect x="852" y="718" width="1" height="1"/>
<rect x="857" y="714" width="4" height="1"/>
<rect x="858" y="713" width="2" height="1"/>
<rect x="859" y="713" width="1" height="2"/>
<rect x="860" y="715" width="1" height="4"/>
<rect x="861" y="715" width="1" height="3"/>
<rect x="862" y="714" width="1" height="3"/>
<rect x="864" y="714" width="1" height="3"/>
<rect x="865" y="714" width="1" height="4"/>
<rect x="870" y="713" width="1" height="1"/>
<rect x="871" y="714" width="1" height="1"/>
<rect x="872" y="716" width="1" height="1"/>
<rect x="873" y="716" width="1" height="2"/>
<rect x="874" y="715" width="1" height="3"/>
<rect x="876" y="714" width="1" height="3"/>
<rect x="877" y="713" width="4" height="1"/>
<rect x="879" y="715" width="1" height="1"/>
<rect x="880" y="716" width="1" height="2"/>
<rect x="882" y="716" width="2" height="1"/>
<rect x="884" y="713" width="1" height="2"/>
<rect x="885" y="714" width="1" height="3"/>
<rect x="886" y="715" width="1" height="3"/>
<rect x="889" y="715" width="1" height="3"/>
<rect x="890" y="718" width="1" height="1"/>
<rect x="894" y="713" width="1" height="4"/>
<rect x="896" y="715" width="1" height="4"/>
<rect x="898" y="715" width="1" height="2"/>
<rect x="899" y="717" width="1" height="2"/>
<rect x="902" y="717" width="4" height="1"/>
<rect x="904" y="715" width="3" height="1"/>
<rect x="905" y="713" width="1" height="1"/>
<rect x="906" y="713" width="1" height="1"/>
<rect x="907" y="715" width="1" height="4"/>
<rect x="908" y="713" width="1" height="3"/>
<rect x="909" y="713" width="3" height="1"/>
<rect x="910" y="713" width="1" height="2"/>
<rect x="912" y="715" width="1" height="4"/>
<rect x="914" y="715" width="1" height="3"/>
<rect x="915" y="714" width="1" height="2"/>
<rect x="917" y="713" width="1" height="2"/>
<rect x="918" y="716" width="1" height="2"/>
<rect x="920" y="716" width="1" height="2"/>
<rect x="921" y="713" width="1" height="1"/>
<rect x="922" y="715" width="1" height="3"/>
<rect x="924" y="717" width="4" height="1"/>
<rect x="926" y="713" width="1" height="4"/>
<rect x="928" y="717" width="2" height="1"/>
<rect x="930" y="713" width="2" height="1"/>
<rect x="932" y="716" width="1" height="3"/>
<rect x="934" y="716" width="3" height="1"/>
<rect x="935" y="714" width="1" height="3"/>
<rect x="937" y="713" width="4" height="1"/>
<rect x="938" y="716" width="1" height="2"/>
<rect x="939" y="718" width="1" height="1"/>
<rect x="940" y="715" width="1" height="2"/>
</g>
<g shape-rendering="crispEdges" fill="#000">
<rect x="68" y="695" width="10" height="1"/>
<rect x="76" y="696" width="3" height="1"/>
<rect x="78" y="695" width="1" height="1"/>
<rect x="105" y="696" width="1" height="1"/>
<rect x="108" y="695" width="1" height="1"/>
<rect x="123" y="696" width="6" height="1"/>
<rect x="125" y="695" width="6" height="1"/>
<rect x="135" y="695" width="2" height="1"/>
<rect x="154" y="695" width="1" height="1"/>
<rect x="163" y="696" width="1" height="1"/>
<rect x="195" y="695" width="1" height="1"/>
<rect x="201" y="696" width="6" height="1"/>
<rect x="207" y="696" width="10" height="1"/>
<rect x="233" y="696" width="6" height="1"/>
<rect x="262" y="695" width="10" height="1"/>
<rect x="272" y="696" width="1" height="1"/>
<rect x="288" y="695" width="2" height="1"/>
<rect x="290" y="696" width="6" height="1"/>
<rect x="303" y="695" width="2" height="1"/>
<rect x="306" y="695" width="3" height="1"/>
<rect x="316" y="696" width="1" height="1"/>
<rect x="320" y="696" width="1" height="1"/>
<rect x="328" y="696" width="2" height="1"/>
<rect x="336" y="695" width="3" height="1"/>
<rect x="341" y="696" width="3" height="1"/>
<rect x="345" y="696" width="10" height="1"/>
<rect x="351" y="695" width="1" height="1"/>
<rect x="385" y="696" width="6" height="1"/>
<rect x="388" y="695" width="3" height="1"/>
<rect x="390" y="696" width="6" height="1"/>
<rect x="399" y="695" width="1" height="1"/>
<rect x="405" y="695" width="1" height="1"/>
<rect x="433" y="696" width="10" height="1"/>
<rect x="443" y="695" width="6" height="1"/>
<rect x="445" y="695" width="2" height="1"/>
<rect x="452" y="695" width="6" height="1"/>
<rect x="454" y="696" width="3" height="1"/>
<rect x="468" y="695" width="1" height="1"/>
<rect x="482" y="696" width="10" height="1"/>
<rect x="502" y="695" width="1" height="1"/>
<rect x="510" y="696" width="10" height="1"/>
<rect x="532" y="695" width="3" height="1"/>
<rect x="534" y="696" width="1" height="1"/>
<rect x="545" y="696" width="6" height="1"/>
<rect x="569" y="695" width="3" height="1"/>
<rect x="575" y="696" width="3" height="1"/>
<rect x="601" y="695" width="2" height="1"/>
<rect x="612" y="696" width="6" height="1"/>
<rect x="620" y="695" width="6" height="1"/>
<rect x="626" y="696" width="1" height="1"/>
<rect x="639" y="696" width="10" height="1"/>
<rect x="659" y="696" width="3" height="1"/>
<rect x="666" y="696" width="1" height="1"/>
<rect x="695" y="695" width="2" height="1"/>
<rect x="720" y="695" width="10" height="1"/>
<rect x="732" y="695" width="6" height="1"/>
<rect x="746" y="696" width="10" height="1"/>
<rect x="751" y="695" width="1" height="1"/>
<rect x="759" y="696" width="10" height="1"/>
<rect x="763" y="695" width="1" height="1"/>
<rect x="785" y="695" width="10" height="1"/>
<rect x="787" y="696" width="6" height="1"/>
<rect x="793" y="696" width="1" height="1"/>
<rect x="797" y="696" width="2" height="1"/>
<rect x="799" y="696" width="1" height="1"/>
<rect x="828" y="696" width="3" height="1"/>
<rect x="834" y="695" width="2" height="1"/>
<rect x="840" y="696" width="2" height="1"/>
<rect x="846" y="695" width="3" height="1"/>
<rect x="849" y="695" width="1" height="1"/>
<rect x="865" y="695" width="1" height="1"/>
<rect x="871" y="695" width="10" height="1"/>
<rect x="876" y="695" width="2" height="1"/>
<rect x="881" y="695" width="1" height="1"/>
<rect x="884" y="695" width="1" height="1"/>
<rect x="890" y="695" width="3" height="1"/>
<rect x="896" y="695" width="2" height="1"/>
<rect x="928" y="696" width="3" height="1"/>
<rect x="931" y="695" width="3" height="1"/>
<rect x="935" y="696" width="10" height="1"/>
<rect x="938" y="695" width="2" height="1"/>
<rect x="74" y="703" width="2" height="1"/>
<rect x="92" y="704" width="1" height="1"/>
<rect x="96" y="704" width="2" height="1"/>
<rect x="100" y="704" width="2" height="1"/>
<rect x="123" y="704" width="1" height="1"/>
<rect x="137" y="704" width="1" height="1"/>
<rect x="143" y="704" width="1" height="1"/>
<rect x="150" y="703" width="2" height="1"/>
<rect x="158" y="704" width="2" height="1"/>
<rect x="170" y="703" width="10" height="1"/>
<rect x="173" y="704" width="3" height="1"/>
<rect x="183" y="704" width="6" height="1"/>
<rect x="204" y="703" width="1" height="1"/>
<rect x="210" y="704" width="3" height="1"/>
<rect x="229" y="704" width="6" height="1"/>
<rect x="237" y="704" width="10" height="1"/>
<rect x="241" y="704" width="2" height="1"/>
<rect x="254" y="703" width="1" height="1"/>
<rect x="259" y="704" width="1" height="1"/>
<rect x="262" y="703" width="1" height="1"/>
<rect x="277" y="704" width="10" height="1"/>
<rect x="283" y="703" width="1" height="1"/>
<rect x="321" y="704" width="3" height="1"/>
<rect x="323" y="704" width="1" height="1"/>
<rect x="345" y="704" width="1" height="1"/>
<rect x="353" y="703" width="6" height="1"/>
<rect x="365" y="704" width="10" height="1"/>
<rect x="371" y="703" width="2" height="1"/>
<rect x="374" y="704" width="1" height="1"/>
<rect x="385" y="704" width="6" height="1"/>
<rect x="391" y="703" width="10" height="1"/>
<rect x="394" y="703" width="6" height="1"/>
<rect x="397" y="703" width="10" height="1"/>
<rect x="401" y="703" width="3" height="1"/>
<rect x="416" y="703" width="1" height="1"/>
<rect x="427" y="704" width="1" height="1"/>
<rect x="443" y="703" width="3" height="1"/>
<rect x="446" y="704" width="1" height="1"/>
<rect x="456" y="703" width="10" height="1"/>
<rect x="471" y="704" width="2" height="1"/>
<rect x="498" y="704" width="3" height="1"/>
<rect x="501" y="703" width="1" height="1"/>
<rect x="505" y="704" width="6" height="1"/>
<rect x="524" y="703" width="2" height="1"/>
<rect x="542" y="704" width="6" height="1"/>
<rect x="544" y="704" width="3" height="1"/>
<rect x="567" y="703" width="6" height="1"/>
<rect x="571" y="703" width="6" height="1"/>
<rect x="577" y="703" width="2" height="1"/>
<rect x="598" y="703" width="1" height="1"/>
<rect x="602" y="703" width="1" height="1"/>
<rect x="614" y="704" width="3" height="1"/>
<rect x="618" y="703" width="1" height="1"/>
<rect x="631" y="704" width="3" height="1"/>
<rect x="653" y="703" width="6" height="1"/>
<rect x="664" y="703" width="1" height="1"/>
<rect x="670" y="704" width="2" height="1"/>
<rect x="679" y="703" width="10" height="1"/>
<rect x="695" y="703" width="10" height="1"/>
<rect x="703" y="704" width="10" height="1"/>
<rect x="709" y="703" width="1" height="1"/>
<rect x="722" y="704" width="2" height="1"/>
<rect x="754" y="703" width="6" height="1"/>
<rect x="782" y="703" width="1" height="1"/>
<rect x="808" y="703" width="3" height="1"/>
<rect x="824" y="704" width="2" height="1"/>
<rect x="836" y="703" width="10" height="1"/>
<rect x="869" y="703" width="10" height="1"/>
<rect x="875" y="703" width="6" height="1"/>
<rect x="885" y="703" width="10" height="1"/>
<rect x="907" y="703" width="3" height="1"/>
<rect x="910" y="704" width="2" height="1"/>
<rect x="926" y="703" width="6" height="1"/>
<rect x="933" y="704" width="2" height="1"/>
<rect x="73" y="712" width="2" height="1"/>
<rect x="116" y="712" width="1" height="1"/>
<rect x="120" y="712" width="3" height="1"/>
<rect x="131" y="711" width="1" height="1"/>
<rect x="150" y="711" width="3" height="1"/>
<rect x="157" y="711" width="1" height="1"/>
<rect x="163" y="712" width="2" height="1"/>
<rect x="178" y="712" width="6" height="1"/>
<rect x="187" y="712" width="10" height="1"/>
<rect x="197" y="711" width="1" height="1"/>
<rect x="242" y="712" width="1" height="1"/>
<rect x="244" y="712" width="2" height="1"/>
<rect x="248" y="711" width="3" height="1"/>
<rect x="251" y="711" width="10" height="1"/>
<rect x="263" y="712" width="10" height="1"/>
<rect x="269" y="711" width="6" height="1"/>
<rect x="271" y="712" width="1" height="1"/>
<rect x="277" y="712" width="3" height="1"/>
<rect x="282" y="711" width="3" height="1"/>
<rect x="290" y="712" width="3" height="1"/>
<rect x="299" y="711" width="2" height="1"/>
<rect x="308" y="712" width="6" height="1"/>
<rect x="315" y="712" width="3" height="1"/>
<rect x="319" y="712" width="10" height="1"/>
<rect x="333" y="711" width="1" height="1"/>
<rect x="356" y="712" width="1" height="1"/>
<rect x="362" y="711" width="10" height="1"/>
<rect x="368" y="712" width="3" height="1"/>
<rect x="380" y="711" width="3" height="1"/>
<rect x="382" y="711" width="10" height="1"/>
<rect x="392" y="712" width="2" height="1"/>
<rect x="400" y="711" width="10" height="1"/>
<rect x="402" y="712" width="1" height="1"/>
<rect x="405" y="712" width="1" height="1"/>
<rect x="416" y="711" width="3" height="1"/>
<rect x="418" y="711" width="3" height="1"/>
<rect x="435" y="711" width="1" height="1"/>
<rect x="439" y="711" width="3" height="1"/>
<rect x="451" y="712" width="10" height="1"/>
<rect x="455" y="712" width="6" height="1"/>
<rect x="467" y="712" width="1" height="1"/>
<rect x="476" y="712" width="1" height="1"/>
<rect x="480" y="711" width="1" height="1"/>
<rect x="514" y="711" width="1" height="1"/>
<rect x="547" y="712" width="3" height="1"/>
<rect x="556" y="712" width="10" height="1"/>
<rect x="564" y="711" width="6" height="1"/>
<rect x="574" y="712" width="3" height="1"/>
<rect x="579" y="712" width="1" height="1"/>
<rect x="586" y="711" width="6" height="1"/>
<rect x="629" y="711" width="2" height="1"/>
<rect x="644" y="712" width="1" height="1"/>
<rect x="653" y="712" width="10" height="1"/>
<rect x="656" y="711" width="2" height="1"/>
<rect x="672" y="712" width="3" height="1"/>
<rect x="678" y="711" width="6" height="1"/>
<rect x="681" y="711" width="2" height="1"/>
<rect x="689" y="711" width="1" height="1"/>
<rect x="731" y="712" width="1" height="1"/>
<rect x="763" y="711" width="3" height="1"/>
<rect x="769" y="711" width="1" height="1"/>
<rect x="772" y="711" width="3" height="1"/>
<rect x="783" y="711" width="3" height="1"/>
<rect x="785" y="711" width="6" height="1"/>
<rect x="789" y="711" width="1" height="1"/>
<rect x="844" y="712" width="6" height="1"/>
<rect x="857" y="711" width="1" height="1"/>
<rect x="861" y="711" width="1" height="1"/>
<rect x="874" y="712" width="2" height="1"/>
<rect x="884" y="711" width="1" height="1"/>
<rect x="888" y="711" width="3" height="1"/>
<rect x="895" y="711" width="1" height="1"/>
<rect x="898" y="711" width="1" height="1"/>
<rect x="907" y="711" width="1" height="1"/>
<rect x="911" y="712" width="3" height="1"/>
<rect x="913" y="711" width="6" height="1"/>
<rect x="928" y="712" width="1" height="1"/>
<rect x="934" y="712" width="3" height="1"/>
<rect x="937" y="711" width="10" height="1"/>
<rect x="68" y="720" width="2" height="1"/>
<rect x="80" y="720" width="2" height="1"/>
<rect x="86" y="719" width="2" height="1"/>
<rect x="106" y="720" width="6" height="1"/>
<rect x="114" y="719" width="10" height="1"/>
<rect x="130" y="719" width="6" height="1"/>
<rect x="135" y="720" width="2" height="1"/>
<rect x="144" y="719" width="3" height="1"/>
<rect x="152" y="720" width="6" height="1"/>
<rect x="174" y="719" width="1" height="1"/>
<rect x="181" y="719" width="10" height="1"/>
<rect x="185" y="720" width="10" height="1"/>
<rect x="198" y="720" width="10" height="1"/>
<rect x="209" y="720" width="10" height="1"/>
<rect x="217" y="719" width="10" height="1"/>
<rect x="221" y="719" width="10" height="1"/>
<rect x="225" y="720" width="3" height="1"/>
<rect x="231" y="720" width="10" height="1"/>
<rect x="236" y="720" width="1" height="1"/>
<rect x="247" y="720" width="3" height="1"/>
<rect x="262" y="719" width="2" height="1"/>
<rect x="268" y="719" width="1" height="1"/>
<rect x="274" y="719" width="1" height="1"/>
<rect x="294" y="720" width="1" height="1"/>
<rect x="315" y="719" width="1" height="1"/>
<rect x="321" y="720" width="10" height="1"/>
<rect x="345" y="719" width="10" height="1"/>
<rect x="351" y="720" width="3" height="1"/>
<rect x="359" y="719" width="10" height="1"/>
<rect x="365" y="720" width="1" height="1"/>
<rect x="371" y="720" width="1" height="1"/>
<rect x="383" y="719" width="3" height="1"/>
<rect x="386" y="720" width="3" height="1"/>
<rect x="392" y="719" width="1" height="1"/>
<rect x="395" y="720" width="6" height="1"/>
<rect x="403" y="720" width="1" height="1"/>
<rect x="410" y="719" width="1" height="1"/>
<rect x="420" y="720" width="10" height="1"/>
<rect x="433" y="720" width="3" height="1"/>
<rect x="439" y="719" width="6" height="1"/>
<rect x="451" y="719" width="6" height="1"/>
<rect x="459" y="719" width="1" height="1"/>
<rect x="463" y="720" width="10" height="1"/>
<rect x="483" y="719" width="3" height="1"/>
<rect x="485" y="720" width="3" height="1"/>
<rect x="491" y="720" width="10" height="1"/>
<rect x="497" y="720" width="3" height="1"/>
<rect x="504" y="720" width="1" height="1"/>
<rect x="524" y="720" width="3" height="1"/>
<rect x="526" y="719" width="2" height="1"/>
<rect x="530" y="719" width="10" height="1"/>
<rect x="536" y="720" width="1" height="1"/>
<rect x="557" y="720" width="6" height="1"/>
<rect x="577" y="720" width="1" height="1"/>
<rect x="587" y="719" width="1" height="1"/>
<rect x="591" y="719" width="1" height="1"/>
<rect x="614" y="719" width="10" height="1"/>
<rect x="617" y="720" width="2" height="1"/>
<rect x="619" y="720" width="3" height="1"/>
<rect x="652" y="719" width="2" height="1"/>
<rect x="664" y="719" width="10" height="1"/>
<rect x="670" y="720" width="3" height="1"/>
<rect x="689" y="719" width="6" height="1"/>
<rect x="714" y="720" width="3" height="1"/>
<rect x="730" y="719" width="10" height="1"/>
<rect x="733" y="720" width="6" height="1"/>
<rect x="741" y="719" width="1" height="1"/>
<rect x="756" y="720" width="3" height="1"/>
<rect x="758" y="719" width="2" height="1"/>
<rect x="763" y="719" width="3" height="1"/>
<rect x="774" y="720" width="1" height="1"/>
<rect x="778" y="719" width="6" height="1"/>
<rect x="784" y="720" width="1" height="1"/>
<rect x="793" y="719" width="2" height="1"/>
<rect x="798" y="719" width="1" height="1"/>
<rect x="800" y="720" width="1" height="1"/>
<rect x="813" y="719" width="1" height="1"/>
<rect x="818" y="720" width="1" height="1"/>
<rect x="826" y="719" width="1" height="1"/>
<rect x="830" y="719" width="1" height="1"/>
<rect x="846" y="720" width="3" height="1"/>
<rect x="848" y="719" width="3" height="1"/>
<rect x="852" y="720" width="2" height="1"/>
<rect x="860" y="719" width="1" height="1"/>
<rect x="866" y="720" width="1" height="1"/>
<rect x="877" y="719" width="1" height="1"/>
<rect x="885" y="720" width="1" height="1"/>
<rect x="891" y="720" width="1" height="1"/>
<rect x="907" y="720" width="2" height="1"/>
<rect x="910" y="720" width="3" height="1"/>
<rect x="922" y="719" width="1" height="1"/>
<rect x="924" y="719" width="2" height="1"/>
<rect x="938" y="720" width="2" height="1"/>
</g>
</svg></body></html>
